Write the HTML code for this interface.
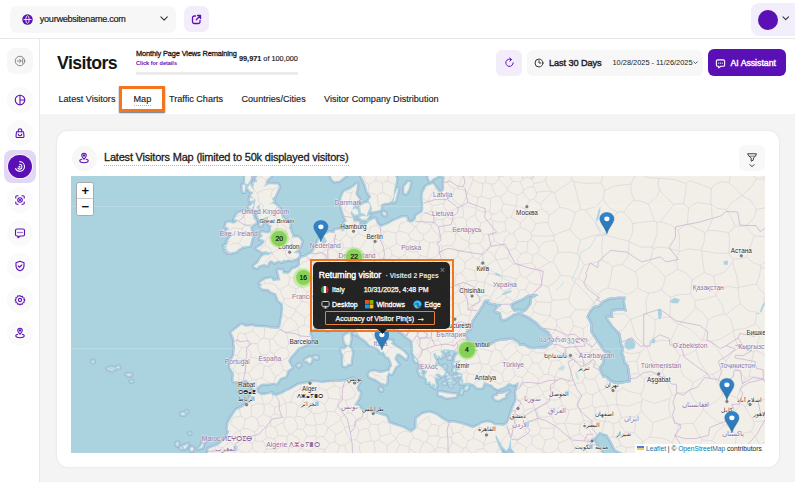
<!DOCTYPE html>
<html>
<head>
<meta charset="utf-8">
<title>Visitors - Map</title>
<style>
*{box-sizing:border-box;margin:0;padding:0}
html,body{width:795px;height:482px;overflow:hidden;background:#fff;font-family:"Liberation Sans",sans-serif;color:#1a1a1a}
.abs{position:absolute}
#topbar{position:absolute;left:0;top:0;width:795px;height:39px;background:#fff;border-bottom:1px solid #e8e8e8}
#sitesel{position:absolute;left:10.300px;top:6px;width:165.500px;height:26.700px;background:#f7f7f7;border-radius:7px}
#sitesel .txt{position:absolute;left:29.5px;top:7px;font-size:9.1px;line-height:12px;color:#222;letter-spacing:-0.27px;-webkit-text-stroke:.2px #222}
#extbtn{position:absolute;left:183.700px;top:6.100px;width:25.600px;height:26.400px;background:#f2ecfb;border-radius:7px}
#avatar{position:absolute;left:750.500px;top:3px;width:50px;height:32.500px;background:#f3eefb;border-radius:8px}
#avatar .dot{position:absolute;left:7px;top:6.5px;width:20px;height:20px;border-radius:50%;background:#5b10b5}
#sidebar{position:absolute;left:0;top:39px;width:40px;height:443px;background:#fff;border-right:1px solid #e8e8e8}
.sbtn{position:absolute;left:7px;width:26px;height:26px;border-radius:13px;background:#fafafa}
.sbtn svg{position:absolute;left:7px;top:7px;width:12px;height:12px}
#main{position:absolute;left:40px;top:39px;width:755px;height:443px;background:#fff}
#greybg{position:absolute;left:40px;top:113.5px;width:755px;height:369px;background:#f4f4f4}
h1{position:absolute;left:57px;top:50.5px;font-size:17.7px;line-height:24px;font-weight:bold;color:#161616;letter-spacing:-0.55px}
.tab{position:absolute;top:92.700px;font-size:9.1px;line-height:12px;color:#1c1c1c;white-space:nowrap;-webkit-text-stroke:.15px #1c1c1c}
#card{position:absolute;left:57px;top:130.500px;width:721.500px;height:336.300px;background:#fff;border-radius:11px;box-shadow:0 0 2.500px rgba(0,0,0,.10)}
#map{position:absolute;left:70.5px;top:175.5px;width:694.5px;height:277.5px;background:#aad3df;overflow:hidden}

.hdrbtn{position:absolute;top:49.500px;height:26px;border-radius:6px}
#refresh{left:496px;width:26px;background:#f2ecfb}
#datepill{left:527px;width:176px;background:#f7f7f7}
#datepill .l30{position:absolute;left:22px;top:7.200px;letter-spacing:-0.1px;font-size:9.2px;line-height:12px;color:#222;white-space:nowrap;-webkit-text-stroke:.4px #222}
#datepill .rng{position:absolute;left:85.500px;top:8px;font-size:7.4px;line-height:10px;color:#222;white-space:nowrap}
#aibtn{left:708px;top:49px;width:78px;height:27px;background:#5b10b5;border-radius:6px}
#aibtn .t{position:absolute;left:22.500px;top:7.500px;font-size:8.7px;line-height:12px;color:#fff;white-space:nowrap;-webkit-text-stroke:.4px #fff}
.pv1{position:absolute;left:136px;top:48.600px;font-size:7.4px;line-height:9px;color:#1c1c1c;white-space:nowrap;-webkit-text-stroke:.3px #1c1c1c;letter-spacing:-0.12px}
.pv2{position:absolute;left:136px;top:59px;font-size:5.5px;line-height:8px;color:#5b10b5;white-space:nowrap;font-weight:bold}
.pv3{position:absolute;left:239px;top:54px;-webkit-text-stroke:.15px #1c1c1c;font-size:7.3px;line-height:9px;color:#1c1c1c;white-space:nowrap}
.pvbar{position:absolute;left:136px;top:71.900px;width:162px;height:3.500px;background:#ebebeb;border-radius:1px}
#tabhl{position:absolute;left:119px;top:86px;width:46.400px;height:25.700px;border:3px solid #f3761f;background:#fff;box-shadow:0 1.200px 1.200px rgba(30,45,65,.7)}
.dots{position:absolute;height:0;border-top:1px dotted #b5b5b5}
#cicon{position:absolute;left:71.500px;top:145.500px;width:25px;height:25px;border-radius:50%;background:#f7f7f7}
#ctitle{position:absolute;left:104px;top:149.500px;font-size:11px;line-height:14px;color:#1c1c1c;white-space:nowrap;letter-spacing:-0.2px;-webkit-text-stroke:.3px #1c1c1c}
#filter{position:absolute;left:739px;top:145px;width:26px;height:26px;border-radius:6px;background:#f8f8f8}
#zoomctl{position:absolute;left:5.800px;top:6.300px;width:18.200px;height:34.700px;background:#fff;border:1px solid #a9a9a9;border-radius:2.500px}
#zoomctl div{position:absolute;left:0;width:16px;height:16.500px;text-align:center;font-size:13px;line-height:15.500px;font-weight:bold;color:#111}
#attr{position:absolute;right:0;bottom:0;height:9.500px;width:130.5px;background:rgba(255,255,255,.85);font-size:6.67px;line-height:9.500px;color:#222;white-space:nowrap;padding-left:11.5px}
#attr span{color:#0f78a8}
.cl{position:absolute;width:20px;height:20px;border-radius:50%;background:rgba(181,226,140,.66)}
.cl i{position:absolute;left:2.200px;top:2.200px;width:15.600px;height:15.600px;border-radius:50%;background:rgba(110,204,57,.72);font-style:normal;text-align:center;font-size:6.8px;line-height:15.600px;color:#111;-webkit-text-stroke:.2px #111}
.pin{position:absolute;width:15.800px;height:22.400px}
#hl2{position:absolute;left:239px;top:83.500px;width:144px;height:73px;border:2.300px solid #f3761f}
#popup{position:absolute;left:242.200px;top:86.700px;width:137.400px;height:66.400px;border-radius:5px;background:rgba(27,27,27,.96);color:#fff}
#popup div,#popup svg{position:absolute;white-space:nowrap}
</style>
</head>
<body>
<div id="topbar">
  <div id="sitesel">
    <svg class="abs" style="left:11.5px;top:8px" width="11" height="11" viewBox="0 0 22 22"><circle cx="11" cy="11" r="10.5" fill="#5b10b5"/><g fill="none" stroke="#fff" stroke-width="1.7"><ellipse cx="11" cy="11" rx="3.4" ry="7.6"/><path d="M3 11h16"/></g></svg>
    <div class="txt">yourwebsitename.com</div>
    <svg class="abs" style="left:150.200px;top:10.400px" width="8.200" height="5.500" viewBox="0 0 9 6"><path d="M1 1l3.5 3.5L8 1" fill="none" stroke="#333" stroke-width="1.2" stroke-linecap="round" stroke-linejoin="round"/></svg>
  </div>
  <div id="extbtn">
    <svg class="abs" style="left:7.300px;top:7.700px" width="11" height="11" viewBox="0 0 22 22"><g fill="none" stroke="#5b10b5" stroke-width="2.6" stroke-linecap="round" stroke-linejoin="round"><path d="M9 4H6.5A3.5 3.5 0 0 0 3 7.5v8A3.5 3.5 0 0 0 6.5 19h8a3.5 3.5 0 0 0 3.500-3.500V13"/><path d="M13 3h6v6M19 3l-8.500 8.500"/></g></svg>
  </div>
  <div id="avatar"><div class="dot"></div>
    <svg class="abs" style="left:31.500px;top:13.300px" width="7.500" height="5.500" viewBox="0 0 8 6"><path d="M1 1l3 3 3-3" fill="none" stroke="#333" stroke-width="1.2" stroke-linecap="round" stroke-linejoin="round"/></svg>
  </div>
</div>
<div id="main"></div>
<div id="greybg"></div>
<div id="sidebar"><div class="sbtn" style="top:9px;height:25.500px;border-radius:8px;background:#f7f7f7"><svg viewBox="0 0 24 24" fill="none" stroke="#777" stroke-width="1.7" stroke-linecap="round" stroke-linejoin="round"><circle cx="12" cy="12" r="9.500"/><path d="M6.500 12h7.500M11 8.500l3.500 3.500-3.500 3.500M17.300 7.500v9"/></svg></div><div class="sbtn" style="top:47.7px;background:#fafafa"><svg viewBox="0 0 24 24" fill="none" stroke="#5b10b5" stroke-width="2.2" stroke-linecap="round" stroke-linejoin="round"><circle cx="12" cy="12" r="9.5"/><path d="M12 2.500v19M12 12h9.500"/></svg></div><div class="sbtn" style="top:81.0px;background:#fafafa"><svg viewBox="0 0 24 24" fill="none" stroke="#5b10b5" stroke-width="2.2" stroke-linecap="round" stroke-linejoin="round"><path d="M5 9.500h14l1 9a2.500 2.500 0 0 1-2.500 2.500h-11A2.500 2.500 0 0 1 4 18.500z"/><path d="M8.500 9.500V7a3.500 3.500 0 0 1 7 0v2.500"/><path d="M8.500 14a3.500 3.500 0 0 0 7 0"/></svg></div><div class="sbtn" style="top:147.6px;background:#fafafa"><svg viewBox="0 0 24 24" fill="none" stroke="#5b10b5" stroke-width="2.2" stroke-linecap="round" stroke-linejoin="round"><path d="M3.500 8V6a2.500 2.500 0 0 1 2.500-2.500h2M16 3.500h2a2.500 2.500 0 0 1 2.500 2.500v2M20.500 16v2a2.500 2.500 0 0 1-2.500 2.500h-2M8 20.500H6A2.500 2.500 0 0 1 3.500 18v-2"/><circle cx="12" cy="12" r="4.500"/><circle cx="12" cy="12" r="1" fill="#5b10b5"/></svg></div><div class="sbtn" style="top:180.9px;background:#fafafa"><svg viewBox="0 0 24 24" fill="none" stroke="#5b10b5" stroke-width="2.2" stroke-linecap="round" stroke-linejoin="round"><path d="M6 4h12a3 3 0 0 1 3 3v8a3 3 0 0 1-3 3h-5.500L8 21.500V18H6a3 3 0 0 1-3-3V7a3 3 0 0 1 3-3z"/><path d="M8 11h.01M12 11h.01M16 11h.01" stroke-width="2.6"/></svg></div><div class="sbtn" style="top:214.2px;background:#fafafa"><svg viewBox="0 0 24 24" fill="none" stroke="#5b10b5" stroke-width="2.2" stroke-linecap="round" stroke-linejoin="round"><path d="M12 2.500l8 3v6c0 5-3.500 8.500-8 10-4.500-1.500-8-5-8-10v-6z"/><path d="M8.500 12l2.500 2.500 4.500-4.500"/></svg></div><div class="sbtn" style="top:247.5px;background:#fafafa"><svg viewBox="0 0 24 24" fill="none" stroke="#5b10b5" stroke-width="2.2" stroke-linecap="round" stroke-linejoin="round"><circle cx="12" cy="12" r="3.200"/><path d="M12 2.500l2.200 2.300 3.100-.6.900 3 3 .9-.6 3.100L22.900 12.500 20.600 14.700l.6 3.100-3 .9-.9 3-3.100-.6L12 23.400 9.800 21.100l-3.100.6-.9-3-3-.9.6-3.100L1.100 12.500 3.400 10.300l-.6-3.100 3-.9.9-3 3.100.6z" transform="translate(1.100 .7) scale(.91)"/></svg></div><div class="sbtn" style="top:280.8px;background:#fafafa"><svg viewBox="0 0 24 24" fill="none" stroke="#5b10b5" stroke-width="2.2" stroke-linecap="round" stroke-linejoin="round"><path d="M12 14.500c-2.500-3-4.500-5-4.500-7.500a4.500 4.500 0 0 1 9 0c0 2.500-2 4.500-4.500 7.500z"/><circle cx="12" cy="7" r="1.200"/><path d="M7.500 14.500C5 15.200 3.500 16.400 3.500 17.700c0 2.100 3.800 3.800 8.500 3.800s8.500-1.700 8.500-3.800c0-1.300-1.500-2.500-4-3.200"/></svg></div><div style="position:absolute;left:4px;top:111.0px;width:32px;height:32.500px;border-radius:8px;background:#e3d7f6"></div><div style="position:absolute;left:8.300px;top:115.600px;width:23.400px;height:23.400px;border-radius:50%;background:#5b10b5;box-shadow:0 0 0 .8px #fff"><svg style="position:absolute;left:5.200px;top:5.200px" width="13" height="13" viewBox="0 0 24 24" fill="none" stroke="#fff" stroke-width="2" stroke-linecap="round"><path d="M12.500 3a9 9 0 0 1 1 17.900 9 9 0 0 1-9-5"/><path d="M12.500 8a4.500 4.500 0 0 1 .5 8.900 4.500 4.500 0 0 1-4-1.800"/><circle cx="12" cy="12.500" r=".9" fill="#fff"/></svg></div></div>
<h1>Visitors</h1>
<div class="pv1">Monthly Page Views Remaining</div>
<div class="pv2">Click for details</div>
<div class="pv3"><b>99,971</b> of 100,000</div>
<div class="pvbar"></div>
<div id="refresh" class="hdrbtn"><svg class="abs" style="left:7.500px;top:7.500px" width="11" height="11" viewBox="0 0 24 24" fill="none" stroke="#5b10b5" stroke-width="2.100" stroke-linecap="round" stroke-linejoin="round"><path d="M20 12.500a8 8 0 1 1-4.200-7"/><path d="M12.500 2l3.800 3.300-3.300 3.700"/></svg></div>
<div id="datepill" class="hdrbtn">
 <svg class="abs" style="left:6.500px;top:8px" width="10" height="10" viewBox="0 0 24 24" fill="none" stroke="#333" stroke-width="2.4" stroke-linecap="round"><circle cx="12" cy="12" r="9.500"/><path d="M12 6.500V12h4.500"/></svg>
 <div class="l30">Last 30 Days</div><div class="rng">10/28/2025 - 11/26/2025</div>
 <svg class="abs" style="left:166px;top:11px" width="5" height="4" viewBox="0 0 8 6"><path d="M1 1l3 3 3-3" fill="none" stroke="#444" stroke-width="1.400" stroke-linecap="round"/></svg>
</div>
<div id="aibtn" class="hdrbtn">
 <svg class="abs" style="left:7px;top:8.500px" width="11" height="11" viewBox="0 0 24 24" fill="none" stroke="#fff" stroke-width="2.400" stroke-linecap="round" stroke-linejoin="round"><path d="M6 4h12a3 3 0 0 1 3 3v8a3 3 0 0 1-3 3h-5.500L8 21.500V18H6a3 3 0 0 1-3-3V7a3 3 0 0 1 3-3z"/><path d="M8 11h.01M12 11h.01M16 11h.01" stroke-width="2.800"/></svg>
 <div class="t">AI Assistant</div>
</div>
<div id="tabhl"></div>
<div class="tab" style="left:58.500px">Latest Visitors</div>
<div class="tab" style="left:133.500px">Map</div>
<div class="tab" style="left:169px">Traffic Charts</div>
<div class="tab" style="left:241.500px">Countries/Cities</div>
<div class="tab" style="left:324px">Visitor Company Distribution</div>
<div class="dots" style="left:134px;top:104.800px;width:17px"></div>

<div id="card"></div>
<div id="cicon"><svg class="abs" style="left:6.500px;top:6px" width="12" height="12" viewBox="0 0 24 24" fill="none" stroke="#5b10b5" stroke-width="2.200" stroke-linecap="round" stroke-linejoin="round"><path d="M12 14.500c-2.500-3-4.500-5-4.500-7.500a4.500 4.500 0 0 1 9 0c0 2.500-2 4.500-4.500 7.500z"/><circle cx="12" cy="7" r="1.200"/><path d="M7.500 14.500C5 15.200 3.500 16.400 3.500 17.700c0 2.100 3.800 3.800 8.500 3.800s8.500-1.700 8.500-3.800c0-1.300-1.500-2.500-4-3.200"/></svg></div>
<div id="ctitle">Latest Visitors Map (limited to 50k displayed visitors)</div>
<div class="dots" style="left:104px;top:164.500px;width:245px"></div>
<div id="filter"><svg class="abs" style="left:8px;top:7px" width="10.500" height="10.500" viewBox="0 0 24 24" fill="none" stroke="#1c1c1c" stroke-width="2.100" stroke-linecap="round" stroke-linejoin="round"><path d="M2.500 4h19l-1.800 5.200-5.200 4.300v5l-5 2.500v-7.500L4.300 9.200z" stroke-width="1.900"/><path d="M6 9.500h12" stroke-width="1.300"/></svg>
<svg class="abs" style="left:10px;top:18.500px" width="6" height="4" viewBox="0 0 8 6"><path d="M1 1l3 3 3-3" fill="none" stroke="#333" stroke-width="1.500" stroke-linecap="round"/></svg></div>

<div id="map"><!--MAP--><svg class="abs" style="left:0;top:0" width="694.500" height="277.500" viewBox="0 0 694.500 277.500"><path d="M273.7 40.4L271.5 33.8L270.3 28.2L270.6 21.4L273.4 15.6L279.7 13.2L286.1 8.1L285.4 13.2L284.2 17.9L288.0 23.6L283.5 27.1L281.6 32.7L279.7 37.1L281.6 41.5L282.3 45.4L288.0 45.9L288.0 50.2L291.7 50.2L295.5 48.6L298.1 45.4L303.7 42.8L306.3 48.6L309.4 51.3L317.6 48.1L323.3 44.8L332.2 41.2L335.3 41.5L336.6 45.9L341.6 46.4L344.8 43.2L345.4 39.9L351.8 36.0L352.4 31.6L351.8 22.5L352.1 16.7L355.5 10.3L361.9 8.0L365.7 13.2L368.2 16.7L371.3 16.2L373.2 13.2L372.9 6.2L373.9 0.8L367.5 -1.6L367.5 -7.1L724.5 -7.1L724.5 283.4L553.3 283.4L552.0 277.0L544.4 273.4L540.6 265.5L536.2 258.3L532.4 257.2L528.6 255.4L526.1 258.3L523.6 261.2L521.1 262.6L522.9 265.5L525.5 269.9L528.0 273.4L530.5 277.0L532.4 283.4L445.2 283.4L443.4 276.3L440.2 272.0L439.9 261.9L437.7 271.3L435.5 274.5L431.4 270.6L425.0 259.0L424.4 261.2L427.6 269.9L430.7 276.3L432.0 283.4L135.7 283.4L137.0 277.0L137.6 273.1L147.7 269.1L154.9 262.8L158.5 255.2L156.7 253.7L157.4 247.2L160.7 241.3L165.4 234.2L171.1 231.5L175.9 228.3L177.4 226.2L180.3 219.3L181.8 214.8L185.6 213.8L185.6 216.6L190.0 219.3L194.3 218.9L200.5 217.4L200.8 219.3L205.2 220.0L211.5 217.7L215.1 215.4L219.7 213.6L227.3 209.1L238.4 207.0L243.7 206.0L251.3 207.2L255.5 206.6L262.7 206.0L268.2 206.0L274.4 205.5L281.4 202.8L284.2 204.0L284.2 206.8L288.0 204.6L288.9 204.8L286.1 209.9L285.4 212.3L286.3 214.4L289.0 216.9L287.1 222.8L282.9 229.2L288.0 230.4L289.2 233.0L292.1 234.8L302.4 236.8L309.4 239.1L315.1 240.8L317.6 247.3L324.0 249.5L331.5 251.7L340.4 256.5L345.4 252.4L345.9 242.7L351.4 238.3L358.1 236.8L362.1 237.8L365.0 239.1L370.6 242.9L378.0 246.9L382.7 246.5L391.2 248.4L402.0 252.2L408.0 249.5L411.1 247.6L415.6 246.5L420.1 247.1L423.1 249.0L432.6 250.0L436.7 247.3L438.7 242.9L440.2 237.4L441.5 234.0L443.4 229.2L445.4 225.1L445.8 221.6L445.1 216.8L446.3 212.4L447.6 208.4L447.8 206.0L442.6 208.6L437.9 206.8L433.4 210.6L426.5 212.9L423.1 210.9L421.2 208.8L413.0 206.1L411.1 211.5L406.3 211.5L402.9 208.2L397.7 206.4L392.2 207.6L392.4 205.0L391.3 202.3L391.3 198.4L385.2 194.7L389.7 193.6L388.1 191.8L389.0 188.6L387.8 186.7L389.8 184.3L383.8 185.2L384.6 181.0L387.8 177.7L384.6 180.6L388.4 176.0L383.7 175.0L382.5 174.0L373.2 173.3L369.1 175.2L372.6 179.7L370.1 178.1L370.4 181.4L367.2 178.9L366.9 181.4L364.0 176.4L361.9 178.7L365.7 186.7L364.1 186.3L363.8 190.0L368.2 191.6L374.2 197.2L370.9 200.0L368.4 197.7L364.4 197.8L365.4 200.4L367.5 202.0L363.1 200.7L364.7 207.7L365.7 209.7L361.6 207.1L361.1 210.0L358.8 205.0L356.2 206.6L356.0 203.2L353.7 200.0L356.4 195.2L354.5 194.3L352.3 193.0L350.2 189.6L347.1 185.1L345.4 182.0L342.2 177.3L342.0 170.0L341.5 165.5L339.8 163.4L336.0 160.8L333.4 158.7L329.2 155.2L323.0 151.2L319.5 149.3L315.3 145.9L313.2 138.1L310.3 135.1L306.6 139.3L304.7 135.4L306.1 132.3L304.6 131.1L297.0 134.2L298.1 138.5L296.7 143.3L298.5 146.4L304.5 150.3L308.9 160.2L313.9 164.2L321.3 165.1L319.7 167.4L325.7 171.6L332.4 175.8L335.9 179.7L335.1 182.6L332.7 180.6L327.9 177.1L325.2 178.1L323.3 183.0L327.3 188.5L324.2 190.6L320.6 197.8L318.0 196.4L318.4 195.1L319.5 193.8L319.1 192.2L321.4 190.0L320.4 186.2L317.8 180.4L315.6 180.7L312.4 175.3L309.6 176.2L309.1 174.0L304.9 170.9L298.9 168.9L296.4 166.2L293.6 163.5L289.2 160.8L285.6 156.3L284.2 150.9L281.1 146.1L275.5 143.3L272.7 144.2L269.8 147.9L265.0 149.6L263.3 150.9L261.0 153.3L256.6 154.6L253.0 153.1L249.7 152.6L246.9 151.8L243.7 151.1L242.5 152.2L238.7 154.8L238.3 158.2L240.1 161.5L238.9 165.5L232.8 169.5L227.0 171.7L224.6 175.0L218.9 181.1L217.0 185.3L220.6 191.4L216.1 194.4L214.7 200.2L212.9 200.4L209.1 202.0L205.3 207.4L203.6 206.5L196.9 207.4L191.2 207.4L188.3 209.1L185.3 212.0L183.7 213.0L179.4 208.9L179.0 206.9L175.2 203.6L169.0 205.2L162.6 205.0L163.1 197.6L161.0 193.9L159.1 190.9L159.8 186.2L163.1 179.7L164.1 171.4L163.3 166.8L163.2 162.5L160.5 156.5L166.0 152.5L170.6 148.8L174.6 150.9L182.1 149.9L183.3 150.9L195.1 151.6L200.1 152.5L206.6 152.9L209.2 151.5L211.2 141.2L212.2 133.2L211.8 127.6L207.8 124.5L205.2 117.4L199.5 115.3L197.8 113.1L191.5 112.4L189.2 110.2L191.9 108.7L188.9 107.2L194.0 103.6L200.1 102.5L202.0 105.3L206.5 104.4L209.6 104.5L209.0 102.6L206.9 94.0L208.9 94.7L211.1 94.2L211.5 97.4L217.2 98.1L219.7 96.2L221.4 93.6L225.9 92.0L228.9 89.3L229.2 84.1L230.8 81.8L234.1 80.9L237.4 79.0L239.3 78.0L241.5 76.8L245.0 71.2L249.1 61.4L253.2 58.9L258.3 56.6L263.3 57.1L264.3 54.2L270.3 53.4L270.6 55.6L273.1 55.0L274.1 51.6L276.0 51.5L275.0 48.8L273.4 47.0L276.0 45.0ZM186.9 -7.1L200.1 -7.1L199.5 0.2L196.0 3.5L193.8 6.8L195.2 6.6L192.6 10.9L194.7 9.7L198.3 8.3L206.5 8.5L207.9 10.9L206.0 15.0L203.6 20.2L200.8 23.1L202.7 25.0L198.9 28.2L195.7 27.6L198.9 28.5L202.0 27.5L203.3 28.2L206.5 30.8L209.0 33.8L210.1 39.3L211.5 42.6L215.3 44.8L218.6 48.9L217.8 52.4L219.9 54.7L218.8 54.8L221.3 59.3L220.4 62.4L222.3 61.4L227.3 61.6L230.1 65.0L230.2 66.4L228.9 70.2L227.6 71.7L226.4 73.5L223.5 76.0L221.9 76.5L224.8 77.3L227.9 77.4L227.5 80.2L225.2 82.3L222.8 82.9L220.6 84.0L218.2 83.2L214.1 84.2L212.2 83.4L210.9 85.6L207.2 84.2L203.6 86.3L200.6 84.2L197.6 85.3L196.1 89.1L192.9 87.7L187.2 89.8L186.3 91.7L183.0 90.6L184.5 89.1L187.0 87.2L190.5 81.2L193.1 79.3L197.2 79.3L200.3 77.8L202.0 75.8L199.1 76.6L194.2 75.1L191.9 75.8L189.4 74.6L185.6 72.4L187.6 71.2L189.7 70.2L193.3 67.0L193.5 63.8L189.0 62.9L192.1 59.4L189.9 57.6L191.3 56.4L194.8 57.3L197.1 57.5L199.5 56.6L200.1 56.1L200.1 54.0L199.8 52.1L201.1 49.4L198.7 49.1L196.2 44.8L197.6 40.7L199.8 39.9L196.4 40.8L193.5 41.8L191.3 42.8L188.4 43.4L186.5 39.3L188.4 36.7L189.9 34.2L188.7 32.2L189.0 28.8L190.7 29.1L188.0 28.8L185.6 30.4L185.0 32.7L182.7 36.0L183.1 32.7L184.0 27.1L184.5 23.5L179.8 19.9L182.3 16.7L183.1 13.5L182.1 11.5L183.1 8.2L182.5 6.6L186.3 6.2L185.1 2.1L186.9 0.2ZM172.5 35.1L175.2 37.1L174.2 38.8L177.1 37.1L180.3 36.9L182.5 41.0L181.8 43.2L183.4 43.0L184.8 45.4L184.4 47.0L182.0 48.1L180.6 49.9L179.0 50.2L179.6 53.2L180.6 57.1L181.2 61.2L180.3 63.0L178.9 69.5L175.3 70.0L171.1 70.5L169.5 71.9L166.9 73.3L165.2 75.3L162.9 75.8L157.1 76.8L158.5 74.8L154.7 75.3L157.2 73.3L153.7 72.2L156.6 70.2L153.0 70.2L156.9 68.4L156.2 66.9L159.1 65.2L156.4 65.4L159.5 61.2L162.2 58.7L161.9 58.0L154.5 56.6L156.6 54.3L158.5 52.4L154.7 50.5L155.9 47.0L160.0 46.7L161.0 47.8L164.8 47.0L167.3 43.7L163.5 43.2L166.7 37.7L168.7 36.9L170.9 36.2ZM289.2 -7.1L290.5 0.2L291.3 1.8L294.6 8.5L296.5 15.6L300.3 20.6L297.7 24.8L299.3 27.6L301.2 32.7L300.1 35.1L302.2 35.2L306.4 34.6L309.8 33.2L309.4 29.0L312.6 27.1L317.6 26.5L320.8 24.8L322.5 20.7L323.0 13.6L324.3 8.0L325.2 2.6L323.3 -2.2L326.5 -3.4L327.8 -7.1ZM258.3 -7.1L260.8 2.6L263.6 5.2L268.4 4.4L271.5 2.0L275.3 -1.0L277.8 -7.1ZM322.7 25.9L324.0 24.8L327.1 12.7L326.2 13.2L323.6 19.1ZM333.4 16.7L335.3 17.3L337.9 12.1L339.1 6.2L337.2 6.2L333.4 10.9ZM357.4 1.4L359.3 5.0L361.9 2.6L366.3 0.2L365.7 -2.8L358.1 -2.2ZM281.0 33.8L284.2 32.5L287.0 34.4L287.3 38.2L283.5 38.8L281.3 36.6ZM288.3 31.6L291.7 28.8L294.9 27.1L298.7 27.6L298.7 32.1L296.8 36.0L295.5 39.9L293.0 37.7L289.9 37.1L289.2 32.1ZM288.3 41.0L291.7 39.9L296.2 40.4L298.4 39.3L295.5 43.2L291.1 43.5ZM312.0 37.7L312.6 36.0L314.8 37.7L314.5 39.3ZM233.9 184.3L238.7 181.4L240.9 183.0L239.3 186.3L238.4 187.0L236.2 184.7ZM243.1 180.6L246.3 181.0L246.3 182.5L243.4 181.6ZM226.7 189.6L228.3 188.3L229.3 188.9L227.9 190.4ZM278.5 155.7L279.4 162.5L278.5 167.6L277.2 169.6L274.7 167.6L273.4 164.2L273.2 160.8L274.4 159.4L276.6 158.0L277.8 158.2ZM270.9 173.1L273.1 173.9L277.2 170.6L279.7 173.1L281.1 176.8L280.1 181.4L279.4 187.9L276.6 187.5L275.0 190.1L272.2 189.2L272.2 184.3L272.5 178.5L270.6 176.0ZM297.7 198.8L299.6 196.0L303.4 195.6L309.4 197.2L314.5 196.0L318.0 195.1L315.4 200.8L315.8 204.8L314.5 208.0L310.4 206.8L304.7 203.0L299.0 200.8ZM367.9 216.2L371.3 216.6L375.4 217.6L381.8 218.3L385.2 218.5L384.9 220.4L380.2 221.0L375.4 221.4L370.7 219.3L367.9 218.9ZM423.1 220.4L427.2 219.7L427.2 217.9L431.7 218.0L437.5 215.5L433.9 218.5L434.2 221.0L431.7 221.8L427.6 224.0L424.1 223.0ZM394.4 211.9L397.2 209.5L396.6 212.3L394.7 213.8ZM382.4 187.5L384.6 186.1L387.1 188.3L385.9 189.2L382.7 188.3ZM382.7 192.8L384.3 192.8L384.0 195.6L382.7 195.2ZM343.2 182.8L345.1 182.6L346.1 185.9L344.8 185.5ZM347.7 194.4L349.2 193.6L350.5 196.4L348.6 196.8L350.8 198.4L351.1 199.6L349.5 198.8ZM363.4 189.2L366.9 189.2L371.3 192.0L374.5 196.0L372.0 196.4L368.2 193.2ZM377.3 181.8L379.9 181.0L379.6 182.6L377.7 182.6ZM379.2 203.6L380.8 204.0L380.2 205.6L379.2 205.2ZM55.8 198.4L58.0 198.0L60.2 198.6L58.6 199.6L56.4 199.2ZM46.0 191.2L47.9 190.8L48.2 192.0L46.6 192.0ZM38.7 193.2L41.6 193.6L41.9 194.2L39.1 194.0ZM40.3 191.2L43.8 192.8L43.5 193.0L40.3 191.8ZM36.9 192.4L38.4 192.0L38.4 193.0L37.2 193.2ZM21.4 185.1L22.6 184.9L22.6 186.3L21.7 186.3ZM59.9 205.2L61.2 205.0L61.2 205.7L60.2 205.8ZM110.0 237.4L112.3 237.0L113.9 237.9L112.3 238.8L110.4 238.2ZM115.5 235.3L116.3 235.3L116.1 235.9ZM131.6 266.3L134.1 263.7L134.5 264.8L132.2 266.8ZM127.5 272.4L129.4 271.3L131.6 267.3L131.8 269.9L130.7 271.7ZM119.3 272.7L120.6 271.4L122.1 272.0L121.8 274.2L120.2 274.7ZM112.3 270.2L117.1 268.4L115.8 270.2L113.9 272.7ZM105.4 267.3L107.0 266.6L107.0 269.1L106.2 269.5ZM109.5 271.7L110.8 271.3L111.1 272.4L109.8 272.6ZM174.2 -7.1L179.9 -7.1L179.9 2.0L178.7 5.0L176.8 8.0L174.2 7.4L174.2 2.6ZM171.7 9.1L174.2 9.1L173.6 15.6L172.0 15.6ZM176.5 11.5L179.3 8.5L180.6 11.5L183.1 14.4L181.2 16.2L178.7 14.4ZM179.0 21.9L183.1 22.5L182.5 24.6L179.0 24.8ZM178.0 31.0L180.6 29.0L181.5 27.1L182.8 28.8L180.9 32.1L179.3 32.7ZM185.0 32.1L186.6 31.6L186.9 34.4L185.6 34.6ZM188.8 49.1L190.4 45.9L191.9 46.4L190.0 49.7ZM386.9 199.5L388.7 198.8L390.0 199.5L388.4 200.2ZM389.2 206.9L390.9 206.0L391.9 206.4L389.7 207.7ZM383.2 200.8L384.6 200.0L385.6 199.8L384.3 201.0ZM375.1 197.5L376.7 198.0L377.0 199.5L375.8 198.8ZM377.0 200.0L378.6 200.4L379.9 201.6L378.9 201.9L377.7 201.0ZM377.7 204.2L378.7 204.0L378.7 205.4L377.7 205.4ZM372.7 207.2L374.2 206.9L374.2 208.0L372.9 208.0ZM379.2 209.4L380.2 209.4L380.1 210.5L379.4 210.3ZM390.0 217.7L390.9 213.8L391.4 214.2L390.6 217.7ZM373.6 189.4L374.8 190.4L375.0 191.2L373.9 190.6ZM374.0 175.0L374.8 174.3L375.6 175.3L374.6 176.2ZM379.9 176.8L381.3 176.8L381.3 177.7L380.0 177.7ZM363.8 210.1L364.9 210.5L364.7 212.0L363.9 211.6ZM376.3 201.2L376.8 201.2L376.8 202.3L376.3 202.2ZM378.6 206.9L379.4 207.1L379.2 207.9L378.6 207.7ZM381.8 206.0L383.3 206.0L383.2 206.6L382.0 206.8ZM389.0 204.8L390.0 204.8L389.8 205.7L389.2 205.7ZM349.5 198.0L350.2 197.9L351.6 199.5L350.8 200.0ZM349.1 190.5L350.0 190.5L349.9 192.6L349.0 192.4ZM308.8 212.4L311.0 213.2L311.0 214.5L309.7 214.2ZM283.0 157.4L284.9 157.0L284.9 158.1L283.2 158.0ZM118.3 257.0L119.1 257.0L119.1 257.7L118.3 257.7Z" fill="none" stroke="#a3a3cf" stroke-width="4.600" stroke-linejoin="round" opacity=".88"/><path d="M273.7 40.4L271.5 33.8L270.3 28.2L270.6 21.4L273.4 15.6L279.7 13.2L286.1 8.1L285.4 13.2L284.2 17.9L288.0 23.6L283.5 27.1L281.6 32.7L279.7 37.1L281.6 41.5L282.3 45.4L288.0 45.9L288.0 50.2L291.7 50.2L295.5 48.6L298.1 45.4L303.7 42.8L306.3 48.6L309.4 51.3L317.6 48.1L323.3 44.8L332.2 41.2L335.3 41.5L336.6 45.9L341.6 46.4L344.8 43.2L345.4 39.9L351.8 36.0L352.4 31.6L351.8 22.5L352.1 16.7L355.5 10.3L361.9 8.0L365.7 13.2L368.2 16.7L371.3 16.2L373.2 13.2L372.9 6.2L373.9 0.8L367.5 -1.6L367.5 -7.1L724.5 -7.1L724.5 283.4L553.3 283.4L552.0 277.0L544.4 273.4L540.6 265.5L536.2 258.3L532.4 257.2L528.6 255.4L526.1 258.3L523.6 261.2L521.1 262.6L522.9 265.5L525.5 269.9L528.0 273.4L530.5 277.0L532.4 283.4L445.2 283.4L443.4 276.3L440.2 272.0L439.9 261.9L437.7 271.3L435.5 274.5L431.4 270.6L425.0 259.0L424.4 261.2L427.6 269.9L430.7 276.3L432.0 283.4L135.7 283.4L137.0 277.0L137.6 273.1L147.7 269.1L154.9 262.8L158.5 255.2L156.7 253.7L157.4 247.2L160.7 241.3L165.4 234.2L171.1 231.5L175.9 228.3L177.4 226.2L180.3 219.3L181.8 214.8L185.6 213.8L185.6 216.6L190.0 219.3L194.3 218.9L200.5 217.4L200.8 219.3L205.2 220.0L211.5 217.7L215.1 215.4L219.7 213.6L227.3 209.1L238.4 207.0L243.7 206.0L251.3 207.2L255.5 206.6L262.7 206.0L268.2 206.0L274.4 205.5L281.4 202.8L284.2 204.0L284.2 206.8L288.0 204.6L288.9 204.8L286.1 209.9L285.4 212.3L286.3 214.4L289.0 216.9L287.1 222.8L282.9 229.2L288.0 230.4L289.2 233.0L292.1 234.8L302.4 236.8L309.4 239.1L315.1 240.8L317.6 247.3L324.0 249.5L331.5 251.7L340.4 256.5L345.4 252.4L345.9 242.7L351.4 238.3L358.1 236.8L362.1 237.8L365.0 239.1L370.6 242.9L378.0 246.9L382.7 246.5L391.2 248.4L402.0 252.2L408.0 249.5L411.1 247.6L415.6 246.5L420.1 247.1L423.1 249.0L432.6 250.0L436.7 247.3L438.7 242.9L440.2 237.4L441.5 234.0L443.4 229.2L445.4 225.1L445.8 221.6L445.1 216.8L446.3 212.4L447.6 208.4L447.8 206.0L442.6 208.6L437.9 206.8L433.4 210.6L426.5 212.9L423.1 210.9L421.2 208.8L413.0 206.1L411.1 211.5L406.3 211.5L402.9 208.2L397.7 206.4L392.2 207.6L392.4 205.0L391.3 202.3L391.3 198.4L385.2 194.7L389.7 193.6L388.1 191.8L389.0 188.6L387.8 186.7L389.8 184.3L383.8 185.2L384.6 181.0L387.8 177.7L384.6 180.6L388.4 176.0L383.7 175.0L382.5 174.0L373.2 173.3L369.1 175.2L372.6 179.7L370.1 178.1L370.4 181.4L367.2 178.9L366.9 181.4L364.0 176.4L361.9 178.7L365.7 186.7L364.1 186.3L363.8 190.0L368.2 191.6L374.2 197.2L370.9 200.0L368.4 197.7L364.4 197.8L365.4 200.4L367.5 202.0L363.1 200.7L364.7 207.7L365.7 209.7L361.6 207.1L361.1 210.0L358.8 205.0L356.2 206.6L356.0 203.2L353.7 200.0L356.4 195.2L354.5 194.3L352.3 193.0L350.2 189.6L347.1 185.1L345.4 182.0L342.2 177.3L342.0 170.0L341.5 165.5L339.8 163.4L336.0 160.8L333.4 158.7L329.2 155.2L323.0 151.2L319.5 149.3L315.3 145.9L313.2 138.1L310.3 135.1L306.6 139.3L304.7 135.4L306.1 132.3L304.6 131.1L297.0 134.2L298.1 138.5L296.7 143.3L298.5 146.4L304.5 150.3L308.9 160.2L313.9 164.2L321.3 165.1L319.7 167.4L325.7 171.6L332.4 175.8L335.9 179.7L335.1 182.6L332.7 180.6L327.9 177.1L325.2 178.1L323.3 183.0L327.3 188.5L324.2 190.6L320.6 197.8L318.0 196.4L318.4 195.1L319.5 193.8L319.1 192.2L321.4 190.0L320.4 186.2L317.8 180.4L315.6 180.7L312.4 175.3L309.6 176.2L309.1 174.0L304.9 170.9L298.9 168.9L296.4 166.2L293.6 163.5L289.2 160.8L285.6 156.3L284.2 150.9L281.1 146.1L275.5 143.3L272.7 144.2L269.8 147.9L265.0 149.6L263.3 150.9L261.0 153.3L256.6 154.6L253.0 153.1L249.7 152.6L246.9 151.8L243.7 151.1L242.5 152.2L238.7 154.8L238.3 158.2L240.1 161.5L238.9 165.5L232.8 169.5L227.0 171.7L224.6 175.0L218.9 181.1L217.0 185.3L220.6 191.4L216.1 194.4L214.7 200.2L212.9 200.4L209.1 202.0L205.3 207.4L203.6 206.5L196.9 207.4L191.2 207.4L188.3 209.1L185.3 212.0L183.7 213.0L179.4 208.9L179.0 206.9L175.2 203.6L169.0 205.2L162.6 205.0L163.1 197.6L161.0 193.9L159.1 190.9L159.8 186.2L163.1 179.7L164.1 171.4L163.3 166.8L163.2 162.5L160.5 156.5L166.0 152.5L170.6 148.8L174.6 150.9L182.1 149.9L183.3 150.9L195.1 151.6L200.1 152.5L206.6 152.9L209.2 151.5L211.2 141.2L212.2 133.2L211.8 127.6L207.8 124.5L205.2 117.4L199.5 115.3L197.8 113.1L191.5 112.4L189.2 110.2L191.9 108.7L188.9 107.2L194.0 103.6L200.1 102.5L202.0 105.3L206.5 104.4L209.6 104.5L209.0 102.6L206.9 94.0L208.9 94.7L211.1 94.2L211.5 97.4L217.2 98.1L219.7 96.2L221.4 93.6L225.9 92.0L228.9 89.3L229.2 84.1L230.8 81.8L234.1 80.9L237.4 79.0L239.3 78.0L241.5 76.8L245.0 71.2L249.1 61.4L253.2 58.9L258.3 56.6L263.3 57.1L264.3 54.2L270.3 53.4L270.6 55.6L273.1 55.0L274.1 51.6L276.0 51.5L275.0 48.8L273.4 47.0L276.0 45.0ZM186.9 -7.1L200.1 -7.1L199.5 0.2L196.0 3.5L193.8 6.8L195.2 6.6L192.6 10.9L194.7 9.7L198.3 8.3L206.5 8.5L207.9 10.9L206.0 15.0L203.6 20.2L200.8 23.1L202.7 25.0L198.9 28.2L195.7 27.6L198.9 28.5L202.0 27.5L203.3 28.2L206.5 30.8L209.0 33.8L210.1 39.3L211.5 42.6L215.3 44.8L218.6 48.9L217.8 52.4L219.9 54.7L218.8 54.8L221.3 59.3L220.4 62.4L222.3 61.4L227.3 61.6L230.1 65.0L230.2 66.4L228.9 70.2L227.6 71.7L226.4 73.5L223.5 76.0L221.9 76.5L224.8 77.3L227.9 77.4L227.5 80.2L225.2 82.3L222.8 82.9L220.6 84.0L218.2 83.2L214.1 84.2L212.2 83.4L210.9 85.6L207.2 84.2L203.6 86.3L200.6 84.2L197.6 85.3L196.1 89.1L192.9 87.7L187.2 89.8L186.3 91.7L183.0 90.6L184.5 89.1L187.0 87.2L190.5 81.2L193.1 79.3L197.2 79.3L200.3 77.8L202.0 75.8L199.1 76.6L194.2 75.1L191.9 75.8L189.4 74.6L185.6 72.4L187.6 71.2L189.7 70.2L193.3 67.0L193.5 63.8L189.0 62.9L192.1 59.4L189.9 57.6L191.3 56.4L194.8 57.3L197.1 57.5L199.5 56.6L200.1 56.1L200.1 54.0L199.8 52.1L201.1 49.4L198.7 49.1L196.2 44.8L197.6 40.7L199.8 39.9L196.4 40.8L193.5 41.8L191.3 42.8L188.4 43.4L186.5 39.3L188.4 36.7L189.9 34.2L188.7 32.2L189.0 28.8L190.7 29.1L188.0 28.8L185.6 30.4L185.0 32.7L182.7 36.0L183.1 32.7L184.0 27.1L184.5 23.5L179.8 19.9L182.3 16.7L183.1 13.5L182.1 11.5L183.1 8.2L182.5 6.6L186.3 6.2L185.1 2.1L186.9 0.2ZM172.5 35.1L175.2 37.1L174.2 38.8L177.1 37.1L180.3 36.9L182.5 41.0L181.8 43.2L183.4 43.0L184.8 45.4L184.4 47.0L182.0 48.1L180.6 49.9L179.0 50.2L179.6 53.2L180.6 57.1L181.2 61.2L180.3 63.0L178.9 69.5L175.3 70.0L171.1 70.5L169.5 71.9L166.9 73.3L165.2 75.3L162.9 75.8L157.1 76.8L158.5 74.8L154.7 75.3L157.2 73.3L153.7 72.2L156.6 70.2L153.0 70.2L156.9 68.4L156.2 66.9L159.1 65.2L156.4 65.4L159.5 61.2L162.2 58.7L161.9 58.0L154.5 56.6L156.6 54.3L158.5 52.4L154.7 50.5L155.9 47.0L160.0 46.7L161.0 47.8L164.8 47.0L167.3 43.7L163.5 43.2L166.7 37.7L168.7 36.9L170.9 36.2ZM289.2 -7.1L290.5 0.2L291.3 1.8L294.6 8.5L296.5 15.6L300.3 20.6L297.7 24.8L299.3 27.6L301.2 32.7L300.1 35.1L302.2 35.2L306.4 34.6L309.8 33.2L309.4 29.0L312.6 27.1L317.6 26.5L320.8 24.8L322.5 20.7L323.0 13.6L324.3 8.0L325.2 2.6L323.3 -2.2L326.5 -3.4L327.8 -7.1ZM258.3 -7.1L260.8 2.6L263.6 5.2L268.4 4.4L271.5 2.0L275.3 -1.0L277.8 -7.1ZM322.7 25.9L324.0 24.8L327.1 12.7L326.2 13.2L323.6 19.1ZM333.4 16.7L335.3 17.3L337.9 12.1L339.1 6.2L337.2 6.2L333.4 10.9ZM357.4 1.4L359.3 5.0L361.9 2.6L366.3 0.2L365.7 -2.8L358.1 -2.2ZM281.0 33.8L284.2 32.5L287.0 34.4L287.3 38.2L283.5 38.8L281.3 36.6ZM288.3 31.6L291.7 28.8L294.9 27.1L298.7 27.6L298.7 32.1L296.8 36.0L295.5 39.9L293.0 37.7L289.9 37.1L289.2 32.1ZM288.3 41.0L291.7 39.9L296.2 40.4L298.4 39.3L295.5 43.2L291.1 43.5ZM312.0 37.7L312.6 36.0L314.8 37.7L314.5 39.3ZM233.9 184.3L238.7 181.4L240.9 183.0L239.3 186.3L238.4 187.0L236.2 184.7ZM243.1 180.6L246.3 181.0L246.3 182.5L243.4 181.6ZM226.7 189.6L228.3 188.3L229.3 188.9L227.9 190.4ZM278.5 155.7L279.4 162.5L278.5 167.6L277.2 169.6L274.7 167.6L273.4 164.2L273.2 160.8L274.4 159.4L276.6 158.0L277.8 158.2ZM270.9 173.1L273.1 173.9L277.2 170.6L279.7 173.1L281.1 176.8L280.1 181.4L279.4 187.9L276.6 187.5L275.0 190.1L272.2 189.2L272.2 184.3L272.5 178.5L270.6 176.0ZM297.7 198.8L299.6 196.0L303.4 195.6L309.4 197.2L314.5 196.0L318.0 195.1L315.4 200.8L315.8 204.8L314.5 208.0L310.4 206.8L304.7 203.0L299.0 200.8ZM367.9 216.2L371.3 216.6L375.4 217.6L381.8 218.3L385.2 218.5L384.9 220.4L380.2 221.0L375.4 221.4L370.7 219.3L367.9 218.9ZM423.1 220.4L427.2 219.7L427.2 217.9L431.7 218.0L437.5 215.5L433.9 218.5L434.2 221.0L431.7 221.8L427.6 224.0L424.1 223.0ZM394.4 211.9L397.2 209.5L396.6 212.3L394.7 213.8ZM382.4 187.5L384.6 186.1L387.1 188.3L385.9 189.2L382.7 188.3ZM382.7 192.8L384.3 192.8L384.0 195.6L382.7 195.2ZM343.2 182.8L345.1 182.6L346.1 185.9L344.8 185.5ZM347.7 194.4L349.2 193.6L350.5 196.4L348.6 196.8L350.8 198.4L351.1 199.6L349.5 198.8ZM363.4 189.2L366.9 189.2L371.3 192.0L374.5 196.0L372.0 196.4L368.2 193.2ZM377.3 181.8L379.9 181.0L379.6 182.6L377.7 182.6ZM379.2 203.6L380.8 204.0L380.2 205.6L379.2 205.2ZM55.8 198.4L58.0 198.0L60.2 198.6L58.6 199.6L56.4 199.2ZM46.0 191.2L47.9 190.8L48.2 192.0L46.6 192.0ZM38.7 193.2L41.6 193.6L41.9 194.2L39.1 194.0ZM40.3 191.2L43.8 192.8L43.5 193.0L40.3 191.8ZM36.9 192.4L38.4 192.0L38.4 193.0L37.2 193.2ZM21.4 185.1L22.6 184.9L22.6 186.3L21.7 186.3ZM59.9 205.2L61.2 205.0L61.2 205.7L60.2 205.8ZM110.0 237.4L112.3 237.0L113.9 237.9L112.3 238.8L110.4 238.2ZM115.5 235.3L116.3 235.3L116.1 235.9ZM131.6 266.3L134.1 263.7L134.5 264.8L132.2 266.8ZM127.5 272.4L129.4 271.3L131.6 267.3L131.8 269.9L130.7 271.7ZM119.3 272.7L120.6 271.4L122.1 272.0L121.8 274.2L120.2 274.7ZM112.3 270.2L117.1 268.4L115.8 270.2L113.9 272.7ZM105.4 267.3L107.0 266.6L107.0 269.1L106.2 269.5ZM109.5 271.7L110.8 271.3L111.1 272.4L109.8 272.6ZM174.2 -7.1L179.9 -7.1L179.9 2.0L178.7 5.0L176.8 8.0L174.2 7.4L174.2 2.6ZM171.7 9.1L174.2 9.1L173.6 15.6L172.0 15.6ZM176.5 11.5L179.3 8.5L180.6 11.5L183.1 14.4L181.2 16.2L178.7 14.4ZM179.0 21.9L183.1 22.5L182.5 24.6L179.0 24.8ZM178.0 31.0L180.6 29.0L181.5 27.1L182.8 28.8L180.9 32.1L179.3 32.7ZM185.0 32.1L186.6 31.6L186.9 34.4L185.6 34.6ZM188.8 49.1L190.4 45.9L191.9 46.4L190.0 49.7ZM386.9 199.5L388.7 198.8L390.0 199.5L388.4 200.2ZM389.2 206.9L390.9 206.0L391.9 206.4L389.7 207.7ZM383.2 200.8L384.6 200.0L385.6 199.8L384.3 201.0ZM375.1 197.5L376.7 198.0L377.0 199.5L375.8 198.8ZM377.0 200.0L378.6 200.4L379.9 201.6L378.9 201.9L377.7 201.0ZM377.7 204.2L378.7 204.0L378.7 205.4L377.7 205.4ZM372.7 207.2L374.2 206.9L374.2 208.0L372.9 208.0ZM379.2 209.4L380.2 209.4L380.1 210.5L379.4 210.3ZM390.0 217.7L390.9 213.8L391.4 214.2L390.6 217.7ZM373.6 189.4L374.8 190.4L375.0 191.2L373.9 190.6ZM374.0 175.0L374.8 174.3L375.6 175.3L374.6 176.2ZM379.9 176.8L381.3 176.8L381.3 177.7L380.0 177.7ZM363.8 210.1L364.9 210.5L364.7 212.0L363.9 211.6ZM376.3 201.2L376.8 201.2L376.8 202.3L376.3 202.2ZM378.6 206.9L379.4 207.1L379.2 207.9L378.6 207.7ZM381.8 206.0L383.3 206.0L383.2 206.6L382.0 206.8ZM389.0 204.8L390.0 204.8L389.8 205.7L389.2 205.7ZM349.5 198.0L350.2 197.9L351.6 199.5L350.8 200.0ZM349.1 190.5L350.0 190.5L349.9 192.6L349.0 192.4ZM308.8 212.4L311.0 213.2L311.0 214.5L309.7 214.2ZM283.0 157.4L284.9 157.0L284.9 158.1L283.2 158.0ZM118.3 257.0L119.1 257.0L119.1 257.7L118.3 257.7Z" fill="none" stroke="#aad3df" stroke-width="3.400" stroke-linejoin="round"/><path d="M273.7 40.4L271.5 33.8L270.3 28.2L270.6 21.4L273.4 15.6L279.7 13.2L286.1 8.1L285.4 13.2L284.2 17.9L288.0 23.6L283.5 27.1L281.6 32.7L279.7 37.1L281.6 41.5L282.3 45.4L288.0 45.9L288.0 50.2L291.7 50.2L295.5 48.6L298.1 45.4L303.7 42.8L306.3 48.6L309.4 51.3L317.6 48.1L323.3 44.8L332.2 41.2L335.3 41.5L336.6 45.9L341.6 46.4L344.8 43.2L345.4 39.9L351.8 36.0L352.4 31.6L351.8 22.5L352.1 16.7L355.5 10.3L361.9 8.0L365.7 13.2L368.2 16.7L371.3 16.2L373.2 13.2L372.9 6.2L373.9 0.8L367.5 -1.6L367.5 -7.1L724.5 -7.1L724.5 283.4L553.3 283.4L552.0 277.0L544.4 273.4L540.6 265.5L536.2 258.3L532.4 257.2L528.6 255.4L526.1 258.3L523.6 261.2L521.1 262.6L522.9 265.5L525.5 269.9L528.0 273.4L530.5 277.0L532.4 283.4L445.2 283.4L443.4 276.3L440.2 272.0L439.9 261.9L437.7 271.3L435.5 274.5L431.4 270.6L425.0 259.0L424.4 261.2L427.6 269.9L430.7 276.3L432.0 283.4L135.7 283.4L137.0 277.0L137.6 273.1L147.7 269.1L154.9 262.8L158.5 255.2L156.7 253.7L157.4 247.2L160.7 241.3L165.4 234.2L171.1 231.5L175.9 228.3L177.4 226.2L180.3 219.3L181.8 214.8L185.6 213.8L185.6 216.6L190.0 219.3L194.3 218.9L200.5 217.4L200.8 219.3L205.2 220.0L211.5 217.7L215.1 215.4L219.7 213.6L227.3 209.1L238.4 207.0L243.7 206.0L251.3 207.2L255.5 206.6L262.7 206.0L268.2 206.0L274.4 205.5L281.4 202.8L284.2 204.0L284.2 206.8L288.0 204.6L288.9 204.8L286.1 209.9L285.4 212.3L286.3 214.4L289.0 216.9L287.1 222.8L282.9 229.2L288.0 230.4L289.2 233.0L292.1 234.8L302.4 236.8L309.4 239.1L315.1 240.8L317.6 247.3L324.0 249.5L331.5 251.7L340.4 256.5L345.4 252.4L345.9 242.7L351.4 238.3L358.1 236.8L362.1 237.8L365.0 239.1L370.6 242.9L378.0 246.9L382.7 246.5L391.2 248.4L402.0 252.2L408.0 249.5L411.1 247.6L415.6 246.5L420.1 247.1L423.1 249.0L432.6 250.0L436.7 247.3L438.7 242.9L440.2 237.4L441.5 234.0L443.4 229.2L445.4 225.1L445.8 221.6L445.1 216.8L446.3 212.4L447.6 208.4L447.8 206.0L442.6 208.6L437.9 206.8L433.4 210.6L426.5 212.9L423.1 210.9L421.2 208.8L413.0 206.1L411.1 211.5L406.3 211.5L402.9 208.2L397.7 206.4L392.2 207.6L392.4 205.0L391.3 202.3L391.3 198.4L385.2 194.7L389.7 193.6L388.1 191.8L389.0 188.6L387.8 186.7L389.8 184.3L383.8 185.2L384.6 181.0L387.8 177.7L384.6 180.6L388.4 176.0L383.7 175.0L382.5 174.0L373.2 173.3L369.1 175.2L372.6 179.7L370.1 178.1L370.4 181.4L367.2 178.9L366.9 181.4L364.0 176.4L361.9 178.7L365.7 186.7L364.1 186.3L363.8 190.0L368.2 191.6L374.2 197.2L370.9 200.0L368.4 197.7L364.4 197.8L365.4 200.4L367.5 202.0L363.1 200.7L364.7 207.7L365.7 209.7L361.6 207.1L361.1 210.0L358.8 205.0L356.2 206.6L356.0 203.2L353.7 200.0L356.4 195.2L354.5 194.3L352.3 193.0L350.2 189.6L347.1 185.1L345.4 182.0L342.2 177.3L342.0 170.0L341.5 165.5L339.8 163.4L336.0 160.8L333.4 158.7L329.2 155.2L323.0 151.2L319.5 149.3L315.3 145.9L313.2 138.1L310.3 135.1L306.6 139.3L304.7 135.4L306.1 132.3L304.6 131.1L297.0 134.2L298.1 138.5L296.7 143.3L298.5 146.4L304.5 150.3L308.9 160.2L313.9 164.2L321.3 165.1L319.7 167.4L325.7 171.6L332.4 175.8L335.9 179.7L335.1 182.6L332.7 180.6L327.9 177.1L325.2 178.1L323.3 183.0L327.3 188.5L324.2 190.6L320.6 197.8L318.0 196.4L318.4 195.1L319.5 193.8L319.1 192.2L321.4 190.0L320.4 186.2L317.8 180.4L315.6 180.7L312.4 175.3L309.6 176.2L309.1 174.0L304.9 170.9L298.9 168.9L296.4 166.2L293.6 163.5L289.2 160.8L285.6 156.3L284.2 150.9L281.1 146.1L275.5 143.3L272.7 144.2L269.8 147.9L265.0 149.6L263.3 150.9L261.0 153.3L256.6 154.6L253.0 153.1L249.7 152.6L246.9 151.8L243.7 151.1L242.5 152.2L238.7 154.8L238.3 158.2L240.1 161.5L238.9 165.5L232.8 169.5L227.0 171.7L224.6 175.0L218.9 181.1L217.0 185.3L220.6 191.4L216.1 194.4L214.7 200.2L212.9 200.4L209.1 202.0L205.3 207.4L203.6 206.5L196.9 207.4L191.2 207.4L188.3 209.1L185.3 212.0L183.7 213.0L179.4 208.9L179.0 206.9L175.2 203.6L169.0 205.2L162.6 205.0L163.1 197.6L161.0 193.9L159.1 190.9L159.8 186.2L163.1 179.7L164.1 171.4L163.3 166.8L163.2 162.5L160.5 156.5L166.0 152.5L170.6 148.8L174.6 150.9L182.1 149.9L183.3 150.9L195.1 151.6L200.1 152.5L206.6 152.9L209.2 151.5L211.2 141.2L212.2 133.2L211.8 127.6L207.8 124.5L205.2 117.4L199.5 115.3L197.8 113.1L191.5 112.4L189.2 110.2L191.9 108.7L188.9 107.2L194.0 103.6L200.1 102.5L202.0 105.3L206.5 104.4L209.6 104.5L209.0 102.6L206.9 94.0L208.9 94.7L211.1 94.2L211.5 97.4L217.2 98.1L219.7 96.2L221.4 93.6L225.9 92.0L228.9 89.3L229.2 84.1L230.8 81.8L234.1 80.9L237.4 79.0L239.3 78.0L241.5 76.8L245.0 71.2L249.1 61.4L253.2 58.9L258.3 56.6L263.3 57.1L264.3 54.2L270.3 53.4L270.6 55.6L273.1 55.0L274.1 51.6L276.0 51.5L275.0 48.8L273.4 47.0L276.0 45.0ZM186.9 -7.1L200.1 -7.1L199.5 0.2L196.0 3.5L193.8 6.8L195.2 6.6L192.6 10.9L194.7 9.7L198.3 8.3L206.5 8.5L207.9 10.9L206.0 15.0L203.6 20.2L200.8 23.1L202.7 25.0L198.9 28.2L195.7 27.6L198.9 28.5L202.0 27.5L203.3 28.2L206.5 30.8L209.0 33.8L210.1 39.3L211.5 42.6L215.3 44.8L218.6 48.9L217.8 52.4L219.9 54.7L218.8 54.8L221.3 59.3L220.4 62.4L222.3 61.4L227.3 61.6L230.1 65.0L230.2 66.4L228.9 70.2L227.6 71.7L226.4 73.5L223.5 76.0L221.9 76.5L224.8 77.3L227.9 77.4L227.5 80.2L225.2 82.3L222.8 82.9L220.6 84.0L218.2 83.2L214.1 84.2L212.2 83.4L210.9 85.6L207.2 84.2L203.6 86.3L200.6 84.2L197.6 85.3L196.1 89.1L192.9 87.7L187.2 89.8L186.3 91.7L183.0 90.6L184.5 89.1L187.0 87.2L190.5 81.2L193.1 79.3L197.2 79.3L200.3 77.8L202.0 75.8L199.1 76.6L194.2 75.1L191.9 75.8L189.4 74.6L185.6 72.4L187.6 71.2L189.7 70.2L193.3 67.0L193.5 63.8L189.0 62.9L192.1 59.4L189.9 57.6L191.3 56.4L194.8 57.3L197.1 57.5L199.5 56.6L200.1 56.1L200.1 54.0L199.8 52.1L201.1 49.4L198.7 49.1L196.2 44.8L197.6 40.7L199.8 39.9L196.4 40.8L193.5 41.8L191.3 42.8L188.4 43.4L186.5 39.3L188.4 36.7L189.9 34.2L188.7 32.2L189.0 28.8L190.7 29.1L188.0 28.8L185.6 30.4L185.0 32.7L182.7 36.0L183.1 32.7L184.0 27.1L184.5 23.5L179.8 19.9L182.3 16.7L183.1 13.5L182.1 11.5L183.1 8.2L182.5 6.6L186.3 6.2L185.1 2.1L186.9 0.2ZM172.5 35.1L175.2 37.1L174.2 38.8L177.1 37.1L180.3 36.9L182.5 41.0L181.8 43.2L183.4 43.0L184.8 45.4L184.4 47.0L182.0 48.1L180.6 49.9L179.0 50.2L179.6 53.2L180.6 57.1L181.2 61.2L180.3 63.0L178.9 69.5L175.3 70.0L171.1 70.5L169.5 71.9L166.9 73.3L165.2 75.3L162.9 75.8L157.1 76.8L158.5 74.8L154.7 75.3L157.2 73.3L153.7 72.2L156.6 70.2L153.0 70.2L156.9 68.4L156.2 66.9L159.1 65.2L156.4 65.4L159.5 61.2L162.2 58.7L161.9 58.0L154.5 56.6L156.6 54.3L158.5 52.4L154.7 50.5L155.9 47.0L160.0 46.7L161.0 47.8L164.8 47.0L167.3 43.7L163.5 43.2L166.7 37.7L168.7 36.9L170.9 36.2ZM289.2 -7.1L290.5 0.2L291.3 1.8L294.6 8.5L296.5 15.6L300.3 20.6L297.7 24.8L299.3 27.6L301.2 32.7L300.1 35.1L302.2 35.2L306.4 34.6L309.8 33.2L309.4 29.0L312.6 27.1L317.6 26.5L320.8 24.8L322.5 20.7L323.0 13.6L324.3 8.0L325.2 2.6L323.3 -2.2L326.5 -3.4L327.8 -7.1ZM258.3 -7.1L260.8 2.6L263.6 5.2L268.4 4.4L271.5 2.0L275.3 -1.0L277.8 -7.1ZM322.7 25.9L324.0 24.8L327.1 12.7L326.2 13.2L323.6 19.1ZM333.4 16.7L335.3 17.3L337.9 12.1L339.1 6.2L337.2 6.2L333.4 10.9ZM357.4 1.4L359.3 5.0L361.9 2.6L366.3 0.2L365.7 -2.8L358.1 -2.2ZM281.0 33.8L284.2 32.5L287.0 34.4L287.3 38.2L283.5 38.8L281.3 36.6ZM288.3 31.6L291.7 28.8L294.9 27.1L298.7 27.6L298.7 32.1L296.8 36.0L295.5 39.9L293.0 37.7L289.9 37.1L289.2 32.1ZM288.3 41.0L291.7 39.9L296.2 40.4L298.4 39.3L295.5 43.2L291.1 43.5ZM312.0 37.7L312.6 36.0L314.8 37.7L314.5 39.3ZM233.9 184.3L238.7 181.4L240.9 183.0L239.3 186.3L238.4 187.0L236.2 184.7ZM243.1 180.6L246.3 181.0L246.3 182.5L243.4 181.6ZM226.7 189.6L228.3 188.3L229.3 188.9L227.9 190.4ZM278.5 155.7L279.4 162.5L278.5 167.6L277.2 169.6L274.7 167.6L273.4 164.2L273.2 160.8L274.4 159.4L276.6 158.0L277.8 158.2ZM270.9 173.1L273.1 173.9L277.2 170.6L279.7 173.1L281.1 176.8L280.1 181.4L279.4 187.9L276.6 187.5L275.0 190.1L272.2 189.2L272.2 184.3L272.5 178.5L270.6 176.0ZM297.7 198.8L299.6 196.0L303.4 195.6L309.4 197.2L314.5 196.0L318.0 195.1L315.4 200.8L315.8 204.8L314.5 208.0L310.4 206.8L304.7 203.0L299.0 200.8ZM367.9 216.2L371.3 216.6L375.4 217.6L381.8 218.3L385.2 218.5L384.9 220.4L380.2 221.0L375.4 221.4L370.7 219.3L367.9 218.9ZM423.1 220.4L427.2 219.7L427.2 217.9L431.7 218.0L437.5 215.5L433.9 218.5L434.2 221.0L431.7 221.8L427.6 224.0L424.1 223.0ZM394.4 211.9L397.2 209.5L396.6 212.3L394.7 213.8ZM382.4 187.5L384.6 186.1L387.1 188.3L385.9 189.2L382.7 188.3ZM382.7 192.8L384.3 192.8L384.0 195.6L382.7 195.2ZM343.2 182.8L345.1 182.6L346.1 185.9L344.8 185.5ZM347.7 194.4L349.2 193.6L350.5 196.4L348.6 196.8L350.8 198.4L351.1 199.6L349.5 198.8ZM363.4 189.2L366.9 189.2L371.3 192.0L374.5 196.0L372.0 196.4L368.2 193.2ZM377.3 181.8L379.9 181.0L379.6 182.6L377.7 182.6ZM379.2 203.6L380.8 204.0L380.2 205.6L379.2 205.2ZM55.8 198.4L58.0 198.0L60.2 198.6L58.6 199.6L56.4 199.2ZM46.0 191.2L47.9 190.8L48.2 192.0L46.6 192.0ZM38.7 193.2L41.6 193.6L41.9 194.2L39.1 194.0ZM40.3 191.2L43.8 192.8L43.5 193.0L40.3 191.8ZM36.9 192.4L38.4 192.0L38.4 193.0L37.2 193.2ZM21.4 185.1L22.6 184.9L22.6 186.3L21.7 186.3ZM59.9 205.2L61.2 205.0L61.2 205.7L60.2 205.8ZM110.0 237.4L112.3 237.0L113.9 237.9L112.3 238.8L110.4 238.2ZM115.5 235.3L116.3 235.3L116.1 235.9ZM131.6 266.3L134.1 263.7L134.5 264.8L132.2 266.8ZM127.5 272.4L129.4 271.3L131.6 267.3L131.8 269.9L130.7 271.7ZM119.3 272.7L120.6 271.4L122.1 272.0L121.8 274.2L120.2 274.7ZM112.3 270.2L117.1 268.4L115.8 270.2L113.9 272.7ZM105.4 267.3L107.0 266.6L107.0 269.1L106.2 269.5ZM109.5 271.7L110.8 271.3L111.1 272.4L109.8 272.6ZM174.2 -7.1L179.9 -7.1L179.9 2.0L178.7 5.0L176.8 8.0L174.2 7.4L174.2 2.6ZM171.7 9.1L174.2 9.1L173.6 15.6L172.0 15.6ZM176.5 11.5L179.3 8.5L180.6 11.5L183.1 14.4L181.2 16.2L178.7 14.4ZM179.0 21.9L183.1 22.5L182.5 24.6L179.0 24.8ZM178.0 31.0L180.6 29.0L181.5 27.1L182.8 28.8L180.9 32.1L179.3 32.7ZM185.0 32.1L186.6 31.6L186.9 34.4L185.6 34.6ZM188.8 49.1L190.4 45.9L191.9 46.4L190.0 49.7ZM386.9 199.5L388.7 198.8L390.0 199.5L388.4 200.2ZM389.2 206.9L390.9 206.0L391.9 206.4L389.7 207.7ZM383.2 200.8L384.6 200.0L385.6 199.8L384.3 201.0ZM375.1 197.5L376.7 198.0L377.0 199.5L375.8 198.8ZM377.0 200.0L378.6 200.4L379.9 201.6L378.9 201.9L377.7 201.0ZM377.7 204.2L378.7 204.0L378.7 205.4L377.7 205.4ZM372.7 207.2L374.2 206.9L374.2 208.0L372.9 208.0ZM379.2 209.4L380.2 209.4L380.1 210.5L379.4 210.3ZM390.0 217.7L390.9 213.8L391.4 214.2L390.6 217.7ZM373.6 189.4L374.8 190.4L375.0 191.2L373.9 190.6ZM374.0 175.0L374.8 174.3L375.6 175.3L374.6 176.2ZM379.9 176.8L381.3 176.8L381.3 177.7L380.0 177.7ZM363.8 210.1L364.9 210.5L364.7 212.0L363.9 211.6ZM376.3 201.2L376.8 201.2L376.8 202.3L376.3 202.2ZM378.6 206.9L379.4 207.1L379.2 207.9L378.6 207.7ZM381.8 206.0L383.3 206.0L383.2 206.6L382.0 206.8ZM389.0 204.8L390.0 204.8L389.8 205.7L389.2 205.7ZM349.5 198.0L350.2 197.9L351.6 199.5L350.8 200.0ZM349.1 190.5L350.0 190.5L349.9 192.6L349.0 192.4ZM308.8 212.4L311.0 213.2L311.0 214.5L309.7 214.2ZM283.0 157.4L284.9 157.0L284.9 158.1L283.2 158.0ZM118.3 257.0L119.1 257.0L119.1 257.7L118.3 257.7Z" fill="#f2efe9"/><clipPath id="lc"><path d="M273.7 40.4L271.5 33.8L270.3 28.2L270.6 21.4L273.4 15.6L279.7 13.2L286.1 8.1L285.4 13.2L284.2 17.9L288.0 23.6L283.5 27.1L281.6 32.7L279.7 37.1L281.6 41.5L282.3 45.4L288.0 45.9L288.0 50.2L291.7 50.2L295.5 48.6L298.1 45.4L303.7 42.8L306.3 48.6L309.4 51.3L317.6 48.1L323.3 44.8L332.2 41.2L335.3 41.5L336.6 45.9L341.6 46.4L344.8 43.2L345.4 39.9L351.8 36.0L352.4 31.6L351.8 22.5L352.1 16.7L355.5 10.3L361.9 8.0L365.7 13.2L368.2 16.7L371.3 16.2L373.2 13.2L372.9 6.2L373.9 0.8L367.5 -1.6L367.5 -7.1L724.5 -7.1L724.5 283.4L553.3 283.4L552.0 277.0L544.4 273.4L540.6 265.5L536.2 258.3L532.4 257.2L528.6 255.4L526.1 258.3L523.6 261.2L521.1 262.6L522.9 265.5L525.5 269.9L528.0 273.4L530.5 277.0L532.4 283.4L445.2 283.4L443.4 276.3L440.2 272.0L439.9 261.9L437.7 271.3L435.5 274.5L431.4 270.6L425.0 259.0L424.4 261.2L427.6 269.9L430.7 276.3L432.0 283.4L135.7 283.4L137.0 277.0L137.6 273.1L147.7 269.1L154.9 262.8L158.5 255.2L156.7 253.7L157.4 247.2L160.7 241.3L165.4 234.2L171.1 231.5L175.9 228.3L177.4 226.2L180.3 219.3L181.8 214.8L185.6 213.8L185.6 216.6L190.0 219.3L194.3 218.9L200.5 217.4L200.8 219.3L205.2 220.0L211.5 217.7L215.1 215.4L219.7 213.6L227.3 209.1L238.4 207.0L243.7 206.0L251.3 207.2L255.5 206.6L262.7 206.0L268.2 206.0L274.4 205.5L281.4 202.8L284.2 204.0L284.2 206.8L288.0 204.6L288.9 204.8L286.1 209.9L285.4 212.3L286.3 214.4L289.0 216.9L287.1 222.8L282.9 229.2L288.0 230.4L289.2 233.0L292.1 234.8L302.4 236.8L309.4 239.1L315.1 240.8L317.6 247.3L324.0 249.5L331.5 251.7L340.4 256.5L345.4 252.4L345.9 242.7L351.4 238.3L358.1 236.8L362.1 237.8L365.0 239.1L370.6 242.9L378.0 246.9L382.7 246.5L391.2 248.4L402.0 252.2L408.0 249.5L411.1 247.6L415.6 246.5L420.1 247.1L423.1 249.0L432.6 250.0L436.7 247.3L438.7 242.9L440.2 237.4L441.5 234.0L443.4 229.2L445.4 225.1L445.8 221.6L445.1 216.8L446.3 212.4L447.6 208.4L447.8 206.0L442.6 208.6L437.9 206.8L433.4 210.6L426.5 212.9L423.1 210.9L421.2 208.8L413.0 206.1L411.1 211.5L406.3 211.5L402.9 208.2L397.7 206.4L392.2 207.6L392.4 205.0L391.3 202.3L391.3 198.4L385.2 194.7L389.7 193.6L388.1 191.8L389.0 188.6L387.8 186.7L389.8 184.3L383.8 185.2L384.6 181.0L387.8 177.7L384.6 180.6L388.4 176.0L383.7 175.0L382.5 174.0L373.2 173.3L369.1 175.2L372.6 179.7L370.1 178.1L370.4 181.4L367.2 178.9L366.9 181.4L364.0 176.4L361.9 178.7L365.7 186.7L364.1 186.3L363.8 190.0L368.2 191.6L374.2 197.2L370.9 200.0L368.4 197.7L364.4 197.8L365.4 200.4L367.5 202.0L363.1 200.7L364.7 207.7L365.7 209.7L361.6 207.1L361.1 210.0L358.8 205.0L356.2 206.6L356.0 203.2L353.7 200.0L356.4 195.2L354.5 194.3L352.3 193.0L350.2 189.6L347.1 185.1L345.4 182.0L342.2 177.3L342.0 170.0L341.5 165.5L339.8 163.4L336.0 160.8L333.4 158.7L329.2 155.2L323.0 151.2L319.5 149.3L315.3 145.9L313.2 138.1L310.3 135.1L306.6 139.3L304.7 135.4L306.1 132.3L304.6 131.1L297.0 134.2L298.1 138.5L296.7 143.3L298.5 146.4L304.5 150.3L308.9 160.2L313.9 164.2L321.3 165.1L319.7 167.4L325.7 171.6L332.4 175.8L335.9 179.7L335.1 182.6L332.7 180.6L327.9 177.1L325.2 178.1L323.3 183.0L327.3 188.5L324.2 190.6L320.6 197.8L318.0 196.4L318.4 195.1L319.5 193.8L319.1 192.2L321.4 190.0L320.4 186.2L317.8 180.4L315.6 180.7L312.4 175.3L309.6 176.2L309.1 174.0L304.9 170.9L298.9 168.9L296.4 166.2L293.6 163.5L289.2 160.8L285.6 156.3L284.2 150.9L281.1 146.1L275.5 143.3L272.7 144.2L269.8 147.9L265.0 149.6L263.3 150.9L261.0 153.3L256.6 154.6L253.0 153.1L249.7 152.6L246.9 151.8L243.7 151.1L242.5 152.2L238.7 154.8L238.3 158.2L240.1 161.5L238.9 165.5L232.8 169.5L227.0 171.7L224.6 175.0L218.9 181.1L217.0 185.3L220.6 191.4L216.1 194.4L214.7 200.2L212.9 200.4L209.1 202.0L205.3 207.4L203.6 206.5L196.9 207.4L191.2 207.4L188.3 209.1L185.3 212.0L183.7 213.0L179.4 208.9L179.0 206.9L175.2 203.6L169.0 205.2L162.6 205.0L163.1 197.6L161.0 193.9L159.1 190.9L159.8 186.2L163.1 179.7L164.1 171.4L163.3 166.8L163.2 162.5L160.5 156.5L166.0 152.5L170.6 148.8L174.6 150.9L182.1 149.9L183.3 150.9L195.1 151.6L200.1 152.5L206.6 152.9L209.2 151.5L211.2 141.2L212.2 133.2L211.8 127.6L207.8 124.5L205.2 117.4L199.5 115.3L197.8 113.1L191.5 112.4L189.2 110.2L191.9 108.7L188.9 107.2L194.0 103.6L200.1 102.5L202.0 105.3L206.5 104.4L209.6 104.5L209.0 102.6L206.9 94.0L208.9 94.7L211.1 94.2L211.5 97.4L217.2 98.1L219.7 96.2L221.4 93.6L225.9 92.0L228.9 89.3L229.2 84.1L230.8 81.8L234.1 80.9L237.4 79.0L239.3 78.0L241.5 76.8L245.0 71.2L249.1 61.4L253.2 58.9L258.3 56.6L263.3 57.1L264.3 54.2L270.3 53.4L270.6 55.6L273.1 55.0L274.1 51.6L276.0 51.5L275.0 48.8L273.4 47.0L276.0 45.0ZM186.9 -7.1L200.1 -7.1L199.5 0.2L196.0 3.5L193.8 6.8L195.2 6.6L192.6 10.9L194.7 9.7L198.3 8.3L206.5 8.5L207.9 10.9L206.0 15.0L203.6 20.2L200.8 23.1L202.7 25.0L198.9 28.2L195.7 27.6L198.9 28.5L202.0 27.5L203.3 28.2L206.5 30.8L209.0 33.8L210.1 39.3L211.5 42.6L215.3 44.8L218.6 48.9L217.8 52.4L219.9 54.7L218.8 54.8L221.3 59.3L220.4 62.4L222.3 61.4L227.3 61.6L230.1 65.0L230.2 66.4L228.9 70.2L227.6 71.7L226.4 73.5L223.5 76.0L221.9 76.5L224.8 77.3L227.9 77.4L227.5 80.2L225.2 82.3L222.8 82.9L220.6 84.0L218.2 83.2L214.1 84.2L212.2 83.4L210.9 85.6L207.2 84.2L203.6 86.3L200.6 84.2L197.6 85.3L196.1 89.1L192.9 87.7L187.2 89.8L186.3 91.7L183.0 90.6L184.5 89.1L187.0 87.2L190.5 81.2L193.1 79.3L197.2 79.3L200.3 77.8L202.0 75.8L199.1 76.6L194.2 75.1L191.9 75.8L189.4 74.6L185.6 72.4L187.6 71.2L189.7 70.2L193.3 67.0L193.5 63.8L189.0 62.9L192.1 59.4L189.9 57.6L191.3 56.4L194.8 57.3L197.1 57.5L199.5 56.6L200.1 56.1L200.1 54.0L199.8 52.1L201.1 49.4L198.7 49.1L196.2 44.8L197.6 40.7L199.8 39.9L196.4 40.8L193.5 41.8L191.3 42.8L188.4 43.4L186.5 39.3L188.4 36.7L189.9 34.2L188.7 32.2L189.0 28.8L190.7 29.1L188.0 28.8L185.6 30.4L185.0 32.7L182.7 36.0L183.1 32.7L184.0 27.1L184.5 23.5L179.8 19.9L182.3 16.7L183.1 13.5L182.1 11.5L183.1 8.2L182.5 6.6L186.3 6.2L185.1 2.1L186.9 0.2ZM172.5 35.1L175.2 37.1L174.2 38.8L177.1 37.1L180.3 36.9L182.5 41.0L181.8 43.2L183.4 43.0L184.8 45.4L184.4 47.0L182.0 48.1L180.6 49.9L179.0 50.2L179.6 53.2L180.6 57.1L181.2 61.2L180.3 63.0L178.9 69.5L175.3 70.0L171.1 70.5L169.5 71.9L166.9 73.3L165.2 75.3L162.9 75.8L157.1 76.8L158.5 74.8L154.7 75.3L157.2 73.3L153.7 72.2L156.6 70.2L153.0 70.2L156.9 68.4L156.2 66.9L159.1 65.2L156.4 65.4L159.5 61.2L162.2 58.7L161.9 58.0L154.5 56.6L156.6 54.3L158.5 52.4L154.7 50.5L155.9 47.0L160.0 46.7L161.0 47.8L164.8 47.0L167.3 43.7L163.5 43.2L166.7 37.7L168.7 36.9L170.9 36.2ZM289.2 -7.1L290.5 0.2L291.3 1.8L294.6 8.5L296.5 15.6L300.3 20.6L297.7 24.8L299.3 27.6L301.2 32.7L300.1 35.1L302.2 35.2L306.4 34.6L309.8 33.2L309.4 29.0L312.6 27.1L317.6 26.5L320.8 24.8L322.5 20.7L323.0 13.6L324.3 8.0L325.2 2.6L323.3 -2.2L326.5 -3.4L327.8 -7.1ZM258.3 -7.1L260.8 2.6L263.6 5.2L268.4 4.4L271.5 2.0L275.3 -1.0L277.8 -7.1ZM322.7 25.9L324.0 24.8L327.1 12.7L326.2 13.2L323.6 19.1ZM333.4 16.7L335.3 17.3L337.9 12.1L339.1 6.2L337.2 6.2L333.4 10.9ZM357.4 1.4L359.3 5.0L361.9 2.6L366.3 0.2L365.7 -2.8L358.1 -2.2ZM281.0 33.8L284.2 32.5L287.0 34.4L287.3 38.2L283.5 38.8L281.3 36.6ZM288.3 31.6L291.7 28.8L294.9 27.1L298.7 27.6L298.7 32.1L296.8 36.0L295.5 39.9L293.0 37.7L289.9 37.1L289.2 32.1ZM288.3 41.0L291.7 39.9L296.2 40.4L298.4 39.3L295.5 43.2L291.1 43.5ZM312.0 37.7L312.6 36.0L314.8 37.7L314.5 39.3ZM233.9 184.3L238.7 181.4L240.9 183.0L239.3 186.3L238.4 187.0L236.2 184.7ZM243.1 180.6L246.3 181.0L246.3 182.5L243.4 181.6ZM226.7 189.6L228.3 188.3L229.3 188.9L227.9 190.4ZM278.5 155.7L279.4 162.5L278.5 167.6L277.2 169.6L274.7 167.6L273.4 164.2L273.2 160.8L274.4 159.4L276.6 158.0L277.8 158.2ZM270.9 173.1L273.1 173.9L277.2 170.6L279.7 173.1L281.1 176.8L280.1 181.4L279.4 187.9L276.6 187.5L275.0 190.1L272.2 189.2L272.2 184.3L272.5 178.5L270.6 176.0ZM297.7 198.8L299.6 196.0L303.4 195.6L309.4 197.2L314.5 196.0L318.0 195.1L315.4 200.8L315.8 204.8L314.5 208.0L310.4 206.8L304.7 203.0L299.0 200.8ZM367.9 216.2L371.3 216.6L375.4 217.6L381.8 218.3L385.2 218.5L384.9 220.4L380.2 221.0L375.4 221.4L370.7 219.3L367.9 218.9ZM423.1 220.4L427.2 219.7L427.2 217.9L431.7 218.0L437.5 215.5L433.9 218.5L434.2 221.0L431.7 221.8L427.6 224.0L424.1 223.0ZM394.4 211.9L397.2 209.5L396.6 212.3L394.7 213.8ZM382.4 187.5L384.6 186.1L387.1 188.3L385.9 189.2L382.7 188.3ZM382.7 192.8L384.3 192.8L384.0 195.6L382.7 195.2ZM343.2 182.8L345.1 182.6L346.1 185.9L344.8 185.5ZM347.7 194.4L349.2 193.6L350.5 196.4L348.6 196.8L350.8 198.4L351.1 199.6L349.5 198.8ZM363.4 189.2L366.9 189.2L371.3 192.0L374.5 196.0L372.0 196.4L368.2 193.2ZM377.3 181.8L379.9 181.0L379.6 182.6L377.7 182.6ZM379.2 203.6L380.8 204.0L380.2 205.6L379.2 205.2ZM55.8 198.4L58.0 198.0L60.2 198.6L58.6 199.6L56.4 199.2ZM46.0 191.2L47.9 190.8L48.2 192.0L46.6 192.0ZM38.7 193.2L41.6 193.6L41.9 194.2L39.1 194.0ZM40.3 191.2L43.8 192.8L43.5 193.0L40.3 191.8ZM36.9 192.4L38.4 192.0L38.4 193.0L37.2 193.2ZM21.4 185.1L22.6 184.9L22.6 186.3L21.7 186.3ZM59.9 205.2L61.2 205.0L61.2 205.7L60.2 205.8ZM110.0 237.4L112.3 237.0L113.9 237.9L112.3 238.8L110.4 238.2ZM115.5 235.3L116.3 235.3L116.1 235.9ZM131.6 266.3L134.1 263.7L134.5 264.8L132.2 266.8ZM127.5 272.4L129.4 271.3L131.6 267.3L131.8 269.9L130.7 271.7ZM119.3 272.7L120.6 271.4L122.1 272.0L121.8 274.2L120.2 274.7ZM112.3 270.2L117.1 268.4L115.8 270.2L113.9 272.7ZM105.4 267.3L107.0 266.6L107.0 269.1L106.2 269.5ZM109.5 271.7L110.8 271.3L111.1 272.4L109.8 272.6ZM174.2 -7.1L179.9 -7.1L179.9 2.0L178.7 5.0L176.8 8.0L174.2 7.4L174.2 2.6ZM171.7 9.1L174.2 9.1L173.6 15.6L172.0 15.6ZM176.5 11.5L179.3 8.5L180.6 11.5L183.1 14.4L181.2 16.2L178.7 14.4ZM179.0 21.9L183.1 22.5L182.5 24.6L179.0 24.8ZM178.0 31.0L180.6 29.0L181.5 27.1L182.8 28.8L180.9 32.1L179.3 32.7ZM185.0 32.1L186.6 31.6L186.9 34.4L185.6 34.6ZM188.8 49.1L190.4 45.9L191.9 46.4L190.0 49.7ZM386.9 199.5L388.7 198.8L390.0 199.5L388.4 200.2ZM389.2 206.9L390.9 206.0L391.9 206.4L389.7 207.7ZM383.2 200.8L384.6 200.0L385.6 199.8L384.3 201.0ZM375.1 197.5L376.7 198.0L377.0 199.5L375.8 198.8ZM377.0 200.0L378.6 200.4L379.9 201.6L378.9 201.9L377.7 201.0ZM377.7 204.2L378.7 204.0L378.7 205.4L377.7 205.4ZM372.7 207.2L374.2 206.9L374.2 208.0L372.9 208.0ZM379.2 209.4L380.2 209.4L380.1 210.5L379.4 210.3ZM390.0 217.7L390.9 213.8L391.4 214.2L390.6 217.7ZM373.6 189.4L374.8 190.4L375.0 191.2L373.9 190.6ZM374.0 175.0L374.8 174.3L375.6 175.3L374.6 176.2ZM379.9 176.8L381.3 176.8L381.3 177.7L380.0 177.7ZM363.8 210.1L364.9 210.5L364.7 212.0L363.9 211.6ZM376.3 201.2L376.8 201.2L376.8 202.3L376.3 202.2ZM378.6 206.9L379.4 207.1L379.2 207.9L378.6 207.7ZM381.8 206.0L383.3 206.0L383.2 206.6L382.0 206.8ZM389.0 204.8L390.0 204.8L389.8 205.7L389.2 205.7ZM349.5 198.0L350.2 197.9L351.6 199.5L350.8 200.0ZM349.1 190.5L350.0 190.5L349.9 192.6L349.0 192.4ZM308.8 212.4L311.0 213.2L311.0 214.5L309.7 214.2ZM283.0 157.4L284.9 157.0L284.9 158.1L283.2 158.0ZM118.3 257.0L119.1 257.0L119.1 257.7L118.3 257.7Z"/></clipPath><path clip-path="url(#lc)" d="M700.7 265.7L694.7 266.2L688.6 269.1M688.6 269.1L685.4 275.1L683.3 280.4M161.6 41.4L167.1 39.9L171.6 37.9M699.4 -8.6L696.3 -2.1L691.8 3.1M700.3 15.1L697.5 7.8L691.8 3.1M598.6 141.0L591.0 141.7L583.8 143.5M598.6 141.0L602.5 144.9L607.3 148.0M607.3 148.0L603.7 155.8L599.5 164.6M599.5 164.6L590.6 164.2L580.8 165.9M583.8 143.5L584.3 154.2L580.8 165.9M624.9 124.3L622.1 121.4L619.7 118.2M624.9 124.3L624.0 127.1L624.8 131.7M598.6 141.0L599.1 133.1L599.6 121.1M607.3 148.0L607.7 148.0L608.3 147.9M619.7 118.2L608.0 118.6L599.6 121.1M624.8 131.7L618.2 139.3L608.3 147.9M183.3 6.3L186.4 2.7L189.8 0.5M189.8 0.5L189.8 -0.3L189.6 -0.8M165.6 167.5L166.4 161.6L167.7 157.6M685.4 2.9L680.3 10.7L671.0 19.8M685.4 2.9L680.5 -1.8L674.0 -7.7M665.4 -6.7L659.3 -0.2L658.0 6.5M658.0 6.5L664.3 12.3L670.9 19.8M670.9 19.8L671.0 19.8L671.0 19.8M700.3 15.1L698.0 24.3L693.7 32.1M693.7 32.1L689.3 32.6L685.5 33.5M685.5 33.5L679.6 24.1L671.0 19.8M691.8 3.1L688.5 2.7L685.4 2.9M624.9 124.3L633.2 123.0L644.9 119.7M619.7 118.2L620.3 111.4L621.2 104.1M621.2 104.1L629.1 99.2L633.4 96.7M647.7 114.5L645.2 116.5L644.9 119.7M647.7 114.5L644.3 107.8L642.2 100.1M642.2 100.1L637.3 98.0L633.4 96.7M667.6 111.7L665.7 100.2L661.6 86.3M667.6 111.7L667.5 112.0L667.2 112.2M667.2 112.2L656.7 110.4L647.7 114.5M642.2 100.1L653.5 96.2L661.6 86.3M606.7 93.1L615.2 97.1L621.2 104.1M606.7 93.1L605.0 83.3L608.5 75.5M630.9 74.8L631.5 84.5L633.4 96.7M630.9 74.8L630.6 74.4L630.2 74.1M630.2 74.1L617.5 72.9L608.5 75.5M483.4 58.9L479.0 52.8L477.1 46.2M483.4 58.9L490.7 56.0L498.9 53.2M498.9 53.2L502.1 44.4L504.4 36.6M488.8 31.3L497.4 32.9L504.4 36.6M488.8 31.3L482.8 36.4L478.1 39.0M478.1 39.0L477.5 43.3L477.1 46.2M727.2 104.6L716.0 108.9L694.3 119.2M727.2 104.6L709.9 99.9L689.8 91.0M694.3 119.2L689.6 114.0L685.3 108.1M689.8 91.0L688.4 100.6L685.3 108.1M702.0 74.8L695.6 84.9L689.1 89.3M689.1 89.3L689.5 90.1L689.8 91.0M692.9 129.5L692.8 123.5L694.3 119.2M667.6 111.7L675.7 109.7L685.3 108.1M667.2 112.2L667.8 119.8L669.3 127.9M685.6 136.1L677.3 134.8L669.3 127.9M693.8 203.9L696.6 210.5L699.7 221.3M693.8 203.9L698.0 200.5L701.6 196.7M709.4 45.7L702.0 40.4L693.7 32.1M738.7 157.5L713.8 154.8L689.9 155.0M702.2 181.1L694.4 179.3L685.4 174.4M689.9 155.0L687.1 165.7L685.4 174.4M685.6 136.1L685.1 141.0L684.2 147.7M689.9 155.0L687.7 151.0L684.2 147.7M693.8 203.9L686.2 201.0L678.1 200.8M678.1 200.8L679.7 191.4L682.5 175.9M682.5 175.9L684.0 175.1L685.4 174.4M644.9 119.7L651.2 128.5L652.9 137.9M669.3 127.9L662.2 133.0L654.8 138.6M652.9 137.9L654.1 138.1L654.8 138.6M624.8 131.7L632.4 137.6L636.9 144.3M652.9 137.9L643.5 140.1L636.9 144.3M684.2 147.7L676.5 151.8L662.6 154.2M654.8 138.6L659.3 142.5L662.6 154.2M668.2 172.4L674.4 173.3L682.5 175.9M668.2 172.4L664.6 164.2L662.2 155.3M662.2 155.3L662.4 154.7L662.6 154.2M506.5 77.6L509.5 83.1L513.4 89.1M506.5 77.6L497.4 76.3L486.9 76.5M505.2 103.0L498.8 100.2L489.4 99.4M505.2 103.0L506.7 102.8L507.5 102.1M489.4 99.4L486.7 92.7L482.2 85.9M507.5 102.1L510.2 95.0L513.4 89.1M482.2 85.9L483.9 80.9L486.9 76.5M506.5 77.6L507.8 70.2L509.5 64.3M509.5 64.3L504.4 59.9L498.9 53.2M483.4 58.9L483.2 59.1L483.1 59.5M483.1 59.5L483.1 62.2L482.8 64.3M486.9 76.5L486.3 69.4L482.8 64.3M509.5 64.3L519.8 60.2L529.7 58.1M509.9 33.5L506.7 35.1L504.4 36.6M509.9 33.5L511.9 33.7L514.4 33.9M529.7 58.1L523.6 45.3L514.4 33.9M606.7 93.1L599.8 97.7L594.2 100.9M582.2 72.3L580.7 78.6L578.8 86.0M582.2 72.3L591.8 70.9L608.0 75.1M608.5 75.5L608.3 75.3L608.0 75.1M578.8 86.0L585.5 91.3L594.2 100.9M599.6 121.1L594.6 117.9L590.7 113.5M594.2 100.9L592.7 108.1L590.7 113.5M425.0 173.2L426.7 174.2L429.4 175.2M425.0 173.2L423.2 174.1L421.1 175.6M429.4 175.2L430.9 179.1L433.9 183.0M421.1 175.6L418.9 181.8L417.0 188.3M417.0 188.3L418.6 189.2L420.3 190.8M420.3 190.8L425.8 188.3L433.9 183.0M624.9 174.1L628.1 184.8L636.3 197.7M624.9 174.1L627.1 169.0L631.3 164.3M639.6 165.8L636.3 164.8L632.2 163.9M639.6 165.8L646.4 173.4L654.8 185.3M631.3 164.3L631.7 164.2L632.2 163.9M654.8 185.3L654.7 186.4L654.5 188.1M654.5 188.1L647.9 194.9L641.8 198.2M641.8 198.2L639.6 198.7L636.3 197.7M599.5 164.6L603.8 172.0L609.2 180.1M608.3 147.9L618.8 153.1L631.3 164.3M609.2 180.1L618.6 177.8L624.9 174.1M636.9 144.3L635.1 153.0L632.2 163.9M662.2 155.3L650.9 162.4L639.6 165.8M668.2 172.4L661.4 176.1L654.8 185.3M678.1 200.8L676.4 202.2L674.4 202.5M674.4 202.5L668.1 194.4L654.5 188.1M651.6 219.0L659.0 219.1L665.9 221.9M651.6 219.0L648.7 210.3L641.8 198.2M665.9 221.9L669.8 212.2L674.4 202.5M606.4 185.6L612.2 199.6L622.1 206.6M606.4 185.6L601.0 190.2L592.6 192.3M591.1 196.0L592.0 194.3L592.6 192.3M591.1 196.0L597.2 208.4L601.0 219.6M601.0 219.6L610.9 216.8L618.6 215.5M622.1 206.6L620.9 211.2L618.6 215.5M609.2 180.1L608.0 182.7L606.4 185.6M636.3 197.7L628.2 203.3L622.1 206.6M580.8 165.9L577.7 169.8L575.7 170.4M575.7 170.4L580.5 184.5L592.6 192.3M651.6 219.0L643.9 226.2L632.4 232.0M632.4 232.0L623.5 225.0L618.6 215.5M216.1 283.9L217.3 278.1L217.7 272.2M215.5 269.8L216.7 271.1L217.7 272.2M215.5 269.8L210.0 271.0L204.8 273.1M205.3 278.0L204.6 275.5L204.5 273.5M204.8 273.1L204.6 273.3L204.5 273.5M223.7 286.0L225.8 277.6L229.8 272.5M229.8 272.5L224.0 270.5L217.7 272.2M195.3 272.8L194.1 276.4L191.0 278.7M195.3 272.8L200.0 273.0L204.5 273.5M240.4 282.7L239.8 279.5L238.7 275.5M229.8 272.5L230.4 272.3L230.7 271.9M238.7 275.5L232.3 273.8L230.7 271.9M338.5 272.8L338.4 271.7L337.9 270.7M338.5 272.8L336.4 279.0L331.7 283.1M324.2 280.4L326.0 273.7L328.5 268.5M337.9 270.7L333.8 270.0L328.5 268.5M319.6 257.3L323.1 260.4L325.4 261.9M319.6 257.3L319.1 251.8L318.8 246.4M333.8 255.1L328.9 256.8L325.4 261.9M316.1 269.7L316.2 275.2L316.9 279.0M316.1 269.7L321.0 266.0L325.3 263.0M328.5 268.5L326.6 265.5L325.3 263.0M363.1 200.7L360.5 199.6L357.7 199.7M363.1 200.7L366.7 196.8L370.3 192.5M354.5 189.7L357.8 188.2L359.8 186.3M354.5 189.7L353.5 191.5L354.0 193.5M417.4 203.5L415.7 204.6L414.0 205.4M417.4 203.5L418.4 197.7L421.1 193.2M414.0 205.4L412.2 204.5L409.6 203.6M410.9 188.1L413.1 188.2L417.0 188.3M410.9 188.1L410.3 193.1L406.9 198.7M421.1 193.2L420.6 192.2L420.3 190.8M409.6 203.6L408.7 201.0L406.9 198.7M618.7 280.2L611.1 276.9L603.4 273.6M603.4 273.6L597.4 280.4L592.5 285.5M316.7 5.2L313.8 5.7L311.5 7.4M316.7 5.2L317.2 1.4L317.3 -2.6M305.3 -2.1L305.1 1.3L304.8 4.4M304.8 4.4L308.0 5.5L311.5 7.4M320.3 20.4L320.3 20.4L320.4 20.4M320.3 20.4L315.7 18.6L311.8 16.5M316.7 5.2L320.5 7.2L323.9 8.5M311.8 16.5L311.5 11.2L311.5 7.4M420.8 8.2L424.3 7.2L427.3 3.5M420.8 8.2L422.2 14.0L425.3 19.9M427.3 3.5L432.6 8.4L436.2 12.4M425.3 19.9L427.6 20.4L429.6 20.6M429.6 20.6L433.5 18.2L436.1 14.5M436.2 12.4L436.2 13.4L436.1 14.5M427.8 0.8L424.8 -1.3L423.0 -5.4M427.8 0.8L432.6 0.1L438.1 -3.8M427.3 3.5L428.1 2.2L427.8 0.8M441.5 5.4L438.5 9.6L436.2 12.4M441.5 5.4L439.1 0.5L438.1 -3.8M421.7 45.1L421.8 51.7L421.7 58.2M421.7 45.1L428.4 45.9L433.5 46.1M421.7 58.2L428.6 57.0L434.9 54.3M433.5 46.1L434.5 49.7L434.9 54.3M372.4 6.4L374.4 6.5L376.5 6.7M383.4 -4.2L379.7 0.6L376.5 6.7M320.3 20.4L319.3 22.6L319.1 24.9M420.8 8.2L418.3 7.7L414.3 6.6M416.2 -3.6L414.7 1.9L414.3 6.6M394.6 -1.8L398.2 -0.1L401.4 2.0M409.8 -8.9L404.8 -4.1L401.4 2.0M358.8 66.8L357.7 74.1L355.8 80.6M358.8 66.8L363.2 66.1L367.2 65.8M367.2 65.8L368.9 67.7L371.1 70.6M370.2 75.2L370.8 72.1L371.1 70.6M370.2 75.2L365.5 80.1L358.7 83.3M358.7 83.3L356.7 82.1L355.8 80.6M376.3 85.5L372.6 79.6L370.2 75.2M376.3 85.5L377.4 85.9L378.3 85.9M378.3 85.9L382.0 83.7L386.6 80.2M381.1 69.6L376.5 69.3L371.1 70.6M381.1 69.6L384.1 72.6L386.9 75.3M386.9 75.3L387.3 77.4L386.6 80.2M199.6 12.7L200.6 13.1L201.4 13.9M201.4 13.9L206.4 11.5L210.6 9.8M189.8 0.5L193.2 2.8L196.1 3.9M183.2 13.9L184.8 15.3L186.1 16.7M186.1 16.7L193.4 13.8L199.6 12.7M306.1 19.6L308.4 17.5L311.8 16.5M306.1 19.6L306.8 26.3L307.8 30.8M307.8 30.8L307.8 30.8L307.8 30.8M159.4 69.4L160.7 68.4L162.0 67.0M172.3 38.1L172.0 38.0L171.6 37.9M172.3 38.1L173.7 43.2L174.0 49.0M174.0 49.0L172.5 51.1L171.4 52.5M171.4 52.5L167.0 52.5L162.3 51.7M162.3 51.7L160.7 53.2L157.9 54.6M162.0 67.0L165.1 67.6L168.1 67.3M171.4 52.5L171.9 55.7L173.1 58.0M157.9 54.6L157.8 54.9L157.8 55.0M168.1 67.3L171.3 62.0L173.1 58.0M309.0 101.0L314.6 102.4L319.8 101.9M309.0 101.0L309.2 106.2L308.6 113.8M319.8 101.9L321.3 108.6L318.3 117.1M308.6 113.8L311.7 116.9L315.0 120.1M318.3 117.1L316.2 118.3L315.0 120.1M315.0 120.1L315.0 120.1L315.0 120.1M334.5 126.0L330.6 128.0L324.8 130.1M334.5 126.0L332.0 120.1L332.0 115.1M332.0 115.1L324.6 115.6L318.3 117.1M324.8 130.1L321.4 125.6L315.0 120.1M288.5 57.6L287.1 53.5L284.7 46.9M288.5 57.6L292.2 59.6L295.5 61.0M295.5 61.0L298.0 55.7L299.0 51.4M299.0 51.4L301.7 50.3L305.2 49.3M296.7 107.1L299.3 103.2L304.4 100.3M296.7 107.1L297.1 109.6L298.4 113.8M298.4 113.8L302.0 114.9L308.6 113.8M309.0 101.0L308.7 100.7L308.3 100.4M308.3 100.4L306.5 100.6L304.4 100.3M294.5 120.4L294.5 120.9L294.5 121.2M294.5 120.4L290.0 116.7L284.9 113.0M281.2 126.5L287.4 124.0L294.5 121.2M281.2 126.5L278.3 123.8L277.4 120.4M277.4 120.4L281.9 117.6L284.9 113.0M248.6 112.2L251.8 116.2L257.4 120.9M248.6 112.2L253.7 109.6L258.5 106.5M258.5 106.5L261.0 108.1L262.5 108.2M262.5 108.2L263.7 114.1L264.3 118.9M257.4 120.9L261.1 119.0L264.3 118.9M272.7 118.7L272.8 112.8L274.1 107.1M272.7 118.7L269.9 119.9L267.5 120.3M274.1 107.1L271.2 105.1L268.2 105.0M262.5 108.2L265.0 106.9L268.2 105.0M267.5 120.3L265.9 119.6L264.3 118.9M281.2 126.5L280.6 129.6L280.6 132.4M280.6 132.4L280.1 133.0L278.6 133.7M277.4 120.4L275.1 119.1L272.7 118.7M267.5 120.3L266.6 127.0L267.5 131.8M278.6 133.7L272.9 133.7L267.5 131.8M167.4 197.6L165.3 196.5L163.6 195.5M167.4 197.6L168.3 202.2L166.7 206.9M657.9 77.3L660.5 81.6L662.7 83.2M657.9 77.3L658.5 62.9L657.7 56.6M662.7 83.2L668.7 82.8L675.5 81.3M675.5 81.3L679.1 71.2L683.0 60.0M683.0 60.0L678.2 54.5L674.8 49.9M674.8 49.9L669.4 50.2L663.8 49.9M663.8 49.9L661.0 54.2L657.7 56.6M630.9 74.8L644.7 77.0L657.9 77.3M661.6 86.3L661.9 84.7L662.7 83.2M689.1 89.3L682.1 86.7L675.5 81.3M696.0 60.5L688.7 60.4L683.0 60.0M685.5 33.5L682.4 43.0L674.8 49.9M670.9 19.8L661.1 26.3L655.5 33.5M655.5 33.5L661.1 42.9L663.8 49.9M655.5 33.5L646.6 32.3L640.3 28.7M657.7 56.6L644.3 54.6L636.5 54.5M640.3 28.7L641.3 43.7L636.5 54.5M607.4 54.4L608.8 64.1L608.0 75.1M607.4 54.4L611.4 50.7L616.6 47.7M630.2 74.1L633.3 64.7L633.7 56.6M616.6 47.7L624.9 52.3L633.7 56.6M633.7 56.6L635.0 55.9L636.5 54.5M500.4 0.1L500.7 2.7L501.2 4.3M501.2 4.3L494.2 9.4L483.5 16.5M474.4 3.9L476.5 9.8L480.5 15.3M474.4 3.9L475.9 -0.8L475.5 -5.9M483.5 16.5L482.4 16.1L481.2 15.9M481.2 15.9L480.8 15.6L480.5 15.3M509.9 33.5L506.2 19.2L502.7 5.6M502.7 5.6L502.0 4.7L501.2 4.3M488.8 31.3L485.0 22.2L483.5 16.5M481.2 15.9L474.6 22.2L469.7 27.9M480.5 15.3L472.6 15.3L465.7 16.2M465.7 16.2L464.9 20.6L462.8 23.2M462.8 23.2L465.6 25.7L469.7 27.9M478.1 39.0L475.4 35.7L470.6 33.2M469.7 27.9L470.2 31.1L470.6 33.2M440.3 166.0L435.5 168.9L429.4 175.2M440.3 166.0L442.2 166.5L444.6 167.0M444.6 167.0L445.1 171.2L446.2 175.0M433.9 183.0L435.0 183.7L435.8 184.0M446.2 175.0L441.2 179.0L435.8 184.0M495.1 160.7L489.9 153.7L485.8 148.7M495.1 160.7L491.1 164.7L485.1 166.2M485.8 148.7L484.2 155.0L479.9 159.3M479.9 159.3L482.8 162.2L485.1 166.2M582.2 72.3L581.8 71.8L581.4 71.1M607.4 54.4L599.8 49.0L589.5 45.7M589.5 45.7L587.1 46.0L585.6 46.4M581.4 71.1L586.2 57.9L585.6 46.4M513.4 89.1L524.2 86.5L531.7 84.5M529.7 58.1L530.8 58.3L532.0 58.9M532.0 58.9L530.7 70.1L531.7 84.5M507.5 102.1L517.2 109.7L527.5 118.7M527.5 118.7L530.1 114.7L537.0 111.9M537.0 111.9L540.2 100.6L541.2 90.4M531.7 84.5L537.7 87.5L541.2 90.4M578.8 86.0L569.4 91.7L564.0 95.8M564.0 95.8L557.4 92.4L551.1 88.4M581.4 71.1L570.1 71.1L558.2 65.8M558.2 65.8L556.9 81.3L551.1 88.4M577.7 117.1L572.0 114.9L566.7 111.6M577.7 117.1L574.8 125.5L575.9 138.1M566.7 111.6L562.0 116.0L556.0 118.3M575.9 138.1L567.7 140.4L559.7 143.3M553.2 137.4L555.8 139.3L559.2 143.1M559.7 143.3L559.4 143.2L559.2 143.1M590.7 113.5L584.3 116.2L577.7 117.1M564.0 95.8L566.9 103.7L566.7 111.6M583.8 143.5L579.4 140.4L575.9 138.1M537.0 111.9L545.3 113.7L556.0 118.3M551.1 88.4L546.3 89.2L541.2 90.4M527.5 118.7L527.4 119.9L527.2 120.8M542.0 137.8L548.0 138.1L553.2 137.4M421.1 193.2L427.0 195.6L431.1 198.3M435.8 184.0L436.6 186.1L438.6 189.2M431.1 198.3L433.6 193.1L438.6 189.2M425.0 173.2L423.5 168.1L423.0 162.0M370.3 192.5L372.0 194.3L374.0 194.8M370.7 169.4L370.6 172.0L370.4 173.9M370.7 169.4L376.1 167.7L382.0 165.3M382.0 165.3L382.0 170.2L385.4 174.9M359.8 186.3L359.8 182.0L359.6 176.9M359.6 176.9L365.1 174.2L370.4 173.9M430.2 134.8L433.7 136.4L435.4 137.9M559.2 143.1L552.7 153.1L546.5 156.6M472.2 218.0L473.1 220.4L475.7 223.5M472.2 218.0L466.6 221.1L461.8 223.9M461.8 223.9L462.3 228.0L463.1 231.9M466.1 233.8L464.8 232.8L463.1 231.9M466.1 233.8L470.9 229.4L475.0 227.5M475.0 227.5L475.5 225.4L475.7 223.5M591.1 196.0L583.5 197.1L573.2 202.7M601.0 219.6L599.4 221.1L598.6 222.8M573.2 202.7L573.2 210.9L570.1 218.1M598.6 222.8L583.2 227.4L571.9 223.5M570.1 218.1L570.3 221.2L571.9 223.5M567.8 197.6L560.0 198.1L552.6 199.9M567.8 197.6L566.9 192.1L565.9 185.2M565.9 185.2L557.7 185.5L551.5 187.5M573.2 202.7L570.7 200.4L567.8 197.6M551.6 211.9L559.1 215.7L570.1 218.1M550.0 175.0L559.6 177.7L569.0 176.6M564.8 160.8L570.4 166.2L575.1 170.4M575.1 170.4L572.0 173.9L569.0 176.6M565.9 185.2L567.7 181.3L569.0 176.6M559.7 143.3L562.0 151.2L564.8 160.8M575.7 170.4L575.4 170.4L575.1 170.4M517.4 164.9L521.6 160.8L524.2 157.7M517.4 164.9L520.0 169.5L521.2 173.6M521.2 173.6L526.6 173.3L531.6 172.4M665.3 258.8L660.0 252.4L654.9 249.1M665.3 258.8L671.9 257.2L679.9 255.6M654.9 249.1L661.4 239.6L669.3 228.2M683.1 245.8L682.9 251.2L679.9 255.6M683.1 245.8L676.8 236.5L673.8 230.3M673.8 230.3L671.6 229.0L669.3 228.2M688.6 269.1L685.5 262.3L679.9 255.6M662.2 279.9L664.4 268.9L665.3 258.8M702.8 244.0L694.2 244.8L683.1 245.8M699.2 222.1L686.3 225.1L673.8 230.3M665.9 221.9L667.0 224.9L669.3 228.2M653.2 249.3L645.8 255.8L641.1 264.7M653.2 249.3L642.1 242.2L632.3 233.9M622.2 247.6L627.4 240.8L632.3 233.9M622.2 247.6L627.3 258.2L631.3 263.9M631.3 263.9L637.1 264.3L641.1 264.7M651.5 279.1L649.1 271.1L641.1 264.7M654.9 249.1L654.1 249.1L653.2 249.3M632.4 232.0L632.5 232.9L632.3 233.9M619.9 279.9L625.6 274.3L631.3 263.9M155.4 279.3L153.2 276.3L152.0 271.9M166.5 270.9L162.7 269.6L159.9 265.6M166.5 270.9L166.5 272.0L166.7 273.3M166.7 273.3L164.1 276.2L162.5 278.9M159.9 265.6L155.2 268.6L152.0 271.9M138.2 280.7L141.3 275.5L145.3 269.8M145.3 269.8L148.6 271.5L152.0 271.9M181.5 272.0L185.4 275.9L188.8 278.9M181.5 272.0L178.0 275.2L175.4 278.3M166.7 273.3L170.0 275.2L175.4 278.3M278.5 278.8L274.8 273.6L273.8 269.3M265.0 279.1L267.4 274.5L268.8 269.5M268.8 269.5L271.2 269.1L273.8 269.3M319.6 257.3L314.3 259.0L309.6 260.1M316.1 269.7L312.4 267.2L307.7 263.7M325.4 261.9L325.3 262.4L325.3 263.0M309.6 260.1L308.0 262.1L307.7 263.7M303.7 278.4L303.9 272.7L302.9 265.8M307.7 263.7L305.1 264.9L302.9 265.8M289.4 277.7L288.3 271.3L289.4 267.1M289.4 267.1L294.3 265.9L300.4 264.8M300.4 264.8L301.6 264.7L302.9 265.8M167.4 197.6L171.7 197.2L174.4 196.3M174.4 196.3L176.0 197.0L177.6 197.6M177.6 197.6L178.8 200.2L180.5 202.3M180.5 202.3L179.9 206.3L173.9 212.8M409.6 203.6L404.6 206.4L399.9 210.9M323.4 136.4L331.9 139.5L335.8 142.0M323.4 136.4L323.5 133.2L324.8 130.1M338.1 128.1L339.0 134.6L340.0 140.0M338.1 128.1L336.1 127.2L334.5 126.0M340.0 140.0L338.1 140.9L335.8 142.0M354.7 135.7L348.6 137.8L340.5 140.2M354.7 135.7L354.5 141.9L355.1 149.3M355.1 149.3L351.1 149.6L346.3 149.7M340.5 140.2L343.6 144.5L346.3 149.7M340.0 140.0L340.2 140.0L340.5 140.2M335.8 142.0L332.5 145.4L331.4 149.9M331.4 149.9L334.3 153.6L338.2 155.9M346.3 149.7L345.2 151.7L344.0 154.4M338.2 155.9L341.0 155.1L344.0 154.4M350.4 174.1L353.4 173.6L355.8 173.4M350.4 174.1L347.7 169.6L345.8 165.7M355.8 173.4L356.6 169.2L359.3 164.3M345.8 165.7L347.3 163.2L348.1 161.8M348.1 161.8L351.6 161.4L355.7 160.6M355.7 160.6L357.5 162.5L359.3 164.3M354.5 189.7L349.2 185.1L346.1 183.5M359.6 176.9L357.3 175.0L355.8 173.4M345.5 180.0L349.1 177.3L350.4 174.1M366.8 163.8L363.9 164.9L359.3 164.3M366.8 163.8L369.1 166.4L370.7 169.4M344.0 154.4L347.0 159.0L348.1 161.8M357.1 150.7L356.1 156.6L355.7 160.6M357.1 150.7L356.3 150.1L355.1 149.3M601.2 266.5L592.8 262.5L578.7 260.9M601.2 266.5L605.7 256.7L607.8 249.1M607.8 249.1L604.0 244.8L599.9 240.6M599.9 240.6L592.2 243.5L581.6 246.6M578.7 260.9L581.3 253.7L581.6 246.6M603.4 273.6L603.0 270.1L601.2 266.5M622.2 247.6L614.0 247.3L607.8 249.1M598.6 222.8L597.6 232.2L599.9 240.6M355.0 135.2L353.5 130.8L352.6 126.3M355.0 135.2L359.8 135.6L366.2 136.0M368.5 133.5L367.3 134.7L366.2 136.0M368.5 133.5L367.2 129.1L367.5 126.2M367.5 126.2L363.4 122.4L358.7 119.9M358.7 119.9L355.5 123.1L352.6 126.3M355.0 135.2L354.9 135.5L354.7 135.7M338.1 128.1L341.6 126.7L345.8 124.5M345.8 124.5L349.8 125.5L352.6 126.3M333.9 111.6L339.0 111.5L344.8 110.9M333.9 111.6L333.2 113.6L332.0 115.1M345.8 124.5L346.9 116.6L344.8 110.9M376.8 108.8L379.7 108.3L383.6 107.0M376.8 108.8L375.7 113.1L374.4 116.8M379.7 120.7L383.3 117.7L388.7 113.3M379.7 120.7L377.7 119.3L375.1 118.4M388.7 113.3L385.7 110.4L383.6 107.0M375.1 118.4L374.8 117.7L374.4 116.8M369.5 101.1L372.7 102.7L376.8 108.8M369.5 101.1L374.1 98.1L382.3 96.2M382.3 96.2L384.0 97.3L385.7 98.1M385.7 98.1L384.4 101.9L383.6 107.0M391.6 113.8L393.8 116.4L395.1 117.6M391.6 113.8L390.6 113.1L388.7 113.3M394.7 124.0L395.4 120.1L395.1 117.6M394.7 124.0L391.7 125.9L387.7 128.3M382.3 126.8L384.7 127.5L387.7 128.3M382.3 126.8L380.7 124.0L379.7 120.7M368.5 133.5L372.7 134.7L376.1 133.6M367.5 126.2L371.0 121.6L375.1 118.4M376.1 133.6L379.2 129.9L382.3 126.8M391.6 113.8L393.2 109.5L396.0 105.0M385.7 98.1L387.2 97.4L390.1 97.0M390.1 97.0L393.8 101.2L396.0 105.0M421.6 58.4L416.9 58.0L412.7 58.4M421.6 58.4L422.7 61.6L423.5 64.4M423.5 64.4L419.1 68.6L416.1 73.7M412.7 58.4L411.9 63.9L407.9 67.6M407.9 67.6L410.5 69.7L413.0 73.6M413.0 73.6L414.7 73.5L416.1 73.7M477.1 46.2L470.5 46.9L465.0 47.4M483.1 59.5L474.1 60.3L461.0 59.6M461.0 59.6L460.2 58.4L459.9 56.9M459.9 56.9L462.4 53.9L465.0 47.4M470.6 33.2L464.6 35.7L457.4 38.4M465.0 47.4L460.4 43.0L457.4 38.4M329.4 47.2L333.2 46.5L336.6 43.9M414.3 6.6L413.1 7.5L412.1 7.6M401.4 2.0L401.6 2.8L402.1 3.4M412.1 7.6L407.4 6.5L402.1 3.4M337.5 57.9L338.3 60.3L339.4 62.9M337.5 57.9L341.5 55.0L343.9 50.7M339.4 62.9L343.5 64.3L349.1 65.2M343.9 50.7L344.4 50.8L344.9 50.6M344.9 50.6L347.8 56.0L352.6 58.7M352.6 58.7L352.6 61.3L352.6 63.3M352.6 63.3L350.9 64.3L349.1 65.2M328.0 55.2L328.0 51.1L329.4 47.2M328.0 55.2L334.1 56.4L337.5 57.9M336.6 43.9L339.3 47.5L343.9 50.7M360.4 51.2L360.2 50.2L360.4 49.0M360.4 51.2L357.8 55.6L352.6 58.7M360.4 49.0L353.5 46.6L350.3 44.2M350.3 44.2L347.1 48.1L344.9 50.6M358.8 66.8L355.2 65.3L352.6 63.3M367.2 65.8L368.0 62.8L368.6 60.0M368.6 60.0L364.3 56.6L360.4 51.2M376.3 85.5L373.6 87.4L369.8 89.5M358.7 83.3L358.7 83.6L358.8 83.9M369.8 89.5L365.3 86.8L358.8 83.9M378.3 85.9L381.1 89.8L382.3 96.2M369.5 101.1L368.9 101.0L368.1 100.8M369.8 89.5L367.8 93.6L368.1 100.8M334.1 71.8L336.6 67.0L339.4 62.9M334.1 71.8L334.5 73.1L335.2 74.5M349.1 65.2L348.2 69.9L346.1 75.5M335.2 74.5L340.8 75.7L346.1 75.5M355.8 80.6L353.0 80.3L349.2 79.4M346.1 75.5L347.3 77.8L349.2 79.4M186.1 16.7L187.9 22.1L187.1 25.5M172.3 38.1L174.1 37.1L175.5 36.2M223.7 119.2L219.6 122.1L212.9 123.0M223.7 119.2L226.4 121.5L230.7 125.5M212.9 123.0L212.2 124.5L212.4 126.0M212.4 126.0L217.1 130.2L224.7 133.2M224.7 133.2L227.9 129.2L230.7 125.5M223.7 119.2L224.8 116.1L224.8 112.9M236.1 116.0L233.8 121.3L231.2 125.4M236.1 116.0L233.0 113.2L229.8 110.4M229.8 110.4L227.1 112.1L224.8 112.9M230.7 125.5L231.0 125.4L231.2 125.4M208.2 154.0L209.0 154.1L209.9 153.9M210.4 137.4L213.4 139.8L217.1 142.3M209.9 153.9L212.4 148.1L217.1 142.3M224.7 133.2L224.8 133.9L224.8 134.7M224.8 134.7L222.2 139.2L219.2 142.0M217.1 142.3L218.2 142.2L219.2 142.0M278.6 133.7L277.9 139.8L275.1 144.8M267.5 131.8L266.3 133.1L264.9 134.0M264.9 134.0L265.7 137.4L266.1 141.3M266.1 141.3L271.2 142.9L275.1 144.8M244.7 152.4L246.5 146.8L250.5 141.7M250.5 141.7L255.7 143.7L260.0 147.7M260.0 147.7L261.2 151.1L262.0 155.2M195.3 272.8L194.3 269.2L192.0 265.1M192.0 265.1L193.3 263.6L195.7 261.9M204.8 273.1L204.8 267.4L203.6 263.1M203.6 263.1L199.8 261.9L195.7 261.9M180.5 229.9L186.0 227.5L192.3 228.3M180.5 229.9L180.1 235.1L180.7 240.3M180.7 240.3L183.6 241.1L186.2 243.1M186.2 243.1L189.1 240.0L192.7 238.0M192.7 238.0L193.2 232.8L193.0 228.7M192.3 228.3L192.6 228.5L193.0 228.7M168.1 67.3L170.5 69.8L174.3 73.8M194.0 86.7L193.9 86.4L194.0 86.2M173.1 58.0L177.3 58.9L182.3 61.1M180.5 229.9L180.2 229.6L179.9 229.3M173.9 243.2L177.0 242.2L180.7 240.3M173.9 243.2L172.4 241.5L169.7 240.3M168.5 228.8L168.8 234.9L169.7 240.3M159.2 247.8L160.6 245.0L161.8 241.6M179.9 229.3L180.1 223.4L180.3 218.2M169.7 240.3L166.5 240.8L161.8 241.6M640.3 28.7L640.1 28.5L640.0 28.3M616.6 47.7L616.9 40.3L617.5 31.8M640.0 28.3L625.8 26.6L617.5 31.8M563.9 0.2L553.1 -4.6L544.6 -9.8M563.9 0.2L561.5 5.0L559.9 8.1M559.9 8.1L543.1 9.9L533.5 14.5M531.1 -1.4L531.4 2.4L529.7 7.0M529.7 7.0L532.0 10.4L533.5 14.5M567.1 -1.8L565.7 -1.1L563.9 0.2M502.7 5.6L514.3 7.4L529.7 7.0M514.4 33.9L524.8 30.5L532.2 23.0M532.2 23.0L533.0 18.6L533.5 14.5M474.4 3.9L470.0 6.5L463.3 7.4M465.7 16.2L464.0 13.7L462.3 10.7M463.3 7.4L462.5 9.0L462.3 10.7M451.9 15.9L452.2 14.8L452.6 14.0M451.9 15.9L455.0 21.2L458.8 24.1M458.8 24.1L461.0 23.5L462.8 23.2M462.3 10.7L457.2 11.1L452.6 14.0M441.5 5.4L445.2 5.4L449.4 5.9M436.1 14.5L441.3 17.2L445.7 19.2M445.7 19.2L448.6 18.4L451.9 15.9M449.4 5.9L451.0 10.9L452.6 14.0M423.5 64.4L426.5 67.0L430.7 69.3M416.1 73.7L420.4 77.3L424.2 81.4M430.7 69.3L425.4 74.6L424.2 81.4M421.7 58.2L421.6 58.3L421.6 58.4M434.9 54.3L436.9 55.7L439.3 57.5M439.3 57.5L434.1 62.3L431.9 69.2M430.7 69.3L431.3 69.1L431.9 69.2M485.8 148.7L485.2 145.9L485.3 144.2M479.1 139.8L482.3 142.1L485.3 144.2M479.1 139.8L475.2 144.0L470.7 148.0M446.2 175.0L449.4 177.0L452.0 179.1M441.3 190.5L440.0 189.6L438.6 189.2M441.3 190.5L444.4 189.7L448.6 188.7M452.0 179.1L449.7 184.4L448.6 188.7M485.1 166.2L485.1 168.8L483.8 171.0M475.5 173.9L480.6 172.7L483.8 171.0M495.1 160.7L496.4 161.0L497.3 161.1M497.3 161.1L499.0 163.8L501.2 165.4M493.8 176.8L498.1 169.5L501.2 165.4M493.8 176.8L492.3 176.8L491.1 177.6M483.8 171.0L486.5 174.9L491.1 177.6M533.1 58.5L542.4 61.4L557.7 65.0M533.1 58.5L538.0 49.2L546.2 36.2M557.7 65.0L561.4 57.1L561.9 47.6M561.9 47.6L558.5 42.4L552.9 36.2M552.9 36.2L550.0 35.8L546.2 36.2M532.0 58.9L532.6 58.7L533.1 58.5M558.2 65.8L558.0 65.5L557.7 65.0M532.2 23.0L537.7 31.2L546.2 36.2M583.4 44.9L584.5 45.6L585.6 46.4M583.4 44.9L570.5 46.2L561.9 47.6M563.0 24.1L556.9 29.8L552.9 36.2M563.0 24.1L571.0 25.4L577.4 28.1M577.4 28.1L580.4 35.8L583.4 44.9M563.0 24.1L559.9 15.7L559.9 8.1M456.6 195.6L454.4 198.3L451.4 201.5M456.6 195.6L456.5 194.6L456.5 194.0M441.3 190.5L442.9 195.1L444.1 199.3M456.5 194.0L453.0 190.9L448.6 188.7M451.4 201.5L447.3 200.7L444.1 199.3M421.1 175.6L414.7 173.6L408.7 172.8M410.9 188.1L409.9 187.4L409.4 186.8M409.4 186.8L408.0 180.7L406.5 176.2M385.4 174.9L390.2 172.9L394.4 171.4M399.1 176.8L396.5 181.3L394.0 184.8M409.4 186.8L402.9 187.6L396.9 188.8M396.9 188.8L395.5 186.8L394.0 184.8M357.1 150.7L361.6 150.2L364.9 149.5M366.8 163.8L368.0 160.4L369.3 157.7M369.3 157.7L366.8 153.3L364.9 149.5M366.2 136.0L367.1 141.3L367.5 145.5M364.9 149.5L366.6 148.0L367.5 145.5M441.3 124.2L438.4 122.2L435.5 120.9M430.2 134.8L429.5 131.1L428.3 127.2M435.4 137.9L438.0 136.1L441.3 134.8M428.3 127.2L431.8 125.1L435.5 120.9M441.3 124.2L443.1 124.1L445.5 122.5M444.2 109.0L440.1 111.6L433.8 115.1M444.2 109.0L445.5 112.2L448.3 114.3M448.3 114.3L447.4 118.2L445.5 122.5M435.5 120.9L434.6 118.2L433.8 115.1M444.2 109.0L444.5 106.3L444.9 103.1M444.9 103.1L438.7 101.0L431.2 99.8M431.2 99.8L430.0 106.0L428.3 110.8M433.8 115.1L430.5 113.9L428.3 110.8M413.2 119.6L416.8 119.8L419.6 121.6M413.2 119.6L411.4 120.4L409.6 121.3M409.6 121.3L408.6 125.2L406.5 128.2M419.6 121.6L420.2 123.9L421.4 125.1M402.3 129.9L404.9 129.2L406.5 128.2M402.3 129.9L398.6 128.2L394.7 124.0M402.4 115.4L398.9 115.9L395.1 117.6M402.4 115.4L405.5 118.9L409.6 121.3M428.3 127.2L425.5 126.9L421.4 125.1M426.8 111.3L427.5 111.0L428.3 110.8M426.8 111.3L422.4 115.8L419.6 121.6M402.3 129.9L400.4 134.7L399.5 139.8M468.0 241.3L467.1 238.5L466.1 233.8M468.0 241.3L474.2 241.1L480.6 239.8M475.0 227.5L478.2 232.1L481.2 236.7M480.6 239.8L480.9 238.1L481.2 236.7M470.1 252.3L467.3 248.5L466.2 244.4M470.1 252.3L478.0 252.4L483.0 251.5M468.0 241.3L467.4 242.8L466.2 244.4M480.6 239.8L482.0 243.3L485.5 248.1M483.0 251.5L484.6 249.8L485.5 248.1M511.7 152.7L507.3 151.1L502.7 149.7M511.7 152.7L514.9 151.1L520.3 146.0M516.1 133.9L510.5 133.8L504.7 133.6M504.7 133.6L501.9 136.5L499.2 141.1M499.2 141.1L501.3 144.4L502.7 149.7M511.5 162.4L512.6 158.3L511.7 152.7M511.5 162.4L506.5 164.4L502.9 165.8M497.3 161.1L499.7 155.5L502.7 149.7M501.2 165.4L502.0 165.8L502.9 165.8M511.5 162.4L514.4 164.0L517.4 164.9M527.2 120.8L522.1 128.0L516.1 133.9M505.2 103.0L500.6 112.5L497.8 122.8M497.8 122.8L498.8 127.4L504.7 133.6M485.3 144.2L492.4 141.4L499.2 141.1M533.6 245.3L531.4 254.1L530.3 257.7M533.6 245.3L528.8 245.0L523.9 243.4M523.9 243.4L521.7 244.3L519.3 245.6M519.3 245.6L517.7 252.9L522.2 259.9M496.6 206.6L491.3 202.8L483.8 200.7M496.6 206.6L499.3 201.9L500.5 195.1M483.8 200.7L487.0 194.4L492.4 191.0M500.5 195.1L499.9 193.9L499.5 192.6M511.7 206.4L512.1 204.3L513.9 201.4M511.7 206.4L506.1 207.5L498.2 210.3M513.9 201.4L513.6 200.8L513.4 200.2M498.2 210.3L497.3 208.2L496.6 206.6M477.5 197.9L475.8 198.5L473.2 198.5M477.5 197.9L480.5 199.4L483.4 200.7M483.4 200.7L483.8 206.4L482.2 211.1M473.2 198.5L470.8 200.9L467.8 203.2M482.2 211.1L476.6 214.5L472.2 216.2M467.8 203.2L467.6 205.5L466.8 208.3M466.8 208.3L468.8 212.0L472.2 216.2M480.6 185.8L483.7 184.2L488.4 184.4M480.6 185.8L477.8 193.7L477.5 197.9M488.4 184.4L490.5 187.8L492.4 191.0M483.8 200.7L483.6 200.7L483.4 200.7M456.6 195.6L462.0 198.2L467.8 203.2M457.0 211.7L454.7 210.1L452.2 208.5M457.0 211.7L462.2 211.1L466.8 208.3M451.4 201.5L451.6 204.6L452.2 208.5M455.5 220.8L455.8 216.2L457.0 211.7M455.5 220.8L458.0 222.5L461.8 223.9M472.2 218.0L472.0 217.2L472.2 216.2M503.8 182.8L504.2 184.5L504.1 185.6M504.1 185.6L511.0 185.9L515.9 189.3M508.3 176.5L513.6 176.9L519.3 176.5M519.3 176.5L519.3 181.0L519.7 186.4M519.7 186.4L518.3 188.2L515.9 189.3M493.8 176.8L499.2 179.1L503.8 182.8M502.9 165.8L505.5 170.9L508.3 176.5M491.1 177.6L490.4 181.5L488.4 184.4M499.5 192.6L501.5 189.3L504.1 185.6M513.4 200.2L513.9 193.7L515.9 189.3M521.2 173.6L520.3 175.1L519.3 176.5M527.7 190.0L524.5 188.4L519.7 186.4M513.9 201.4L517.7 203.3L523.7 202.8M523.7 202.8L526.2 199.5L529.6 196.5M551.6 211.9L549.1 214.1L546.3 215.2M538.1 199.7L535.6 205.9L537.4 211.3M546.3 215.2L542.4 215.2L537.4 211.3M523.7 202.8L526.9 209.8L528.6 215.0M537.4 211.3L532.7 212.9L528.6 215.0M168.1 254.7L161.9 259.1L159.7 262.5M168.1 254.7L163.3 250.9L159.2 247.8M159.7 262.5L159.7 263.9L159.9 265.6M169.0 254.7L170.3 261.3L173.4 265.3M169.0 254.7L170.7 253.6L172.1 252.3M172.1 252.3L177.5 253.0L183.2 255.7M183.2 255.7L184.0 259.9L184.2 264.4M173.4 265.3L177.1 265.6L181.5 267.0M181.5 267.0L183.2 265.6L184.2 264.4M166.5 270.9L169.7 268.4L173.4 265.3M168.1 254.7L168.6 254.6L169.0 254.7M173.9 243.2L173.6 246.8L172.1 252.3M188.2 249.8L187.2 246.1L186.2 243.1M188.2 249.8L185.9 254.1L183.2 255.7M192.0 265.1L187.0 265.4L184.2 264.4M188.2 249.8L192.3 249.8L195.1 251.9M195.1 251.9L194.6 257.0L195.7 261.9M181.5 272.0L181.2 269.6L181.5 267.0M236.0 259.7L233.7 264.3L230.4 268.5M236.0 259.7L233.5 255.9L231.5 253.5M230.4 268.5L227.4 262.6L220.4 258.2M220.4 258.2L222.5 256.0L225.8 253.6M231.5 253.5L228.8 253.2L225.8 253.6M243.5 259.8L239.0 260.5L236.0 259.7M243.5 259.8L245.4 256.5L244.5 249.2M244.5 249.2L239.9 249.4L235.1 248.6M231.5 253.5L233.9 251.0L235.1 248.6M253.7 273.5L256.3 271.0L258.7 266.9M253.7 273.5L248.9 272.8L244.5 270.8M258.7 266.9L254.6 263.4L252.2 260.6M244.5 270.8L244.7 266.6L245.2 261.5M245.2 261.5L248.9 260.6L252.2 260.6M255.7 280.2L253.2 278.1L253.7 273.5M264.2 266.1L261.2 266.4L258.7 266.9M264.2 266.1L266.7 268.1L268.8 269.5M238.7 275.5L242.1 273.1L244.5 270.8M264.2 266.1L263.9 262.3L264.8 258.4M264.8 258.4L261.5 255.1L257.2 251.4M257.1 251.4L255.6 257.1L252.2 260.6M257.1 251.4L257.2 251.4L257.2 251.4M243.5 259.8L244.6 260.7L245.2 261.5M230.7 271.9L230.8 270.1L230.4 268.5M318.8 246.4L315.0 246.4L311.6 245.4M309.6 260.1L307.2 254.7L307.3 248.6M311.6 245.4L309.8 247.1L307.3 248.6M289.4 267.1L287.4 265.5L285.2 263.8M273.8 269.3L276.8 267.3L279.4 264.1M279.4 264.1L283.0 263.7L285.2 263.8M264.8 258.4L269.5 256.4L273.6 252.7M279.4 264.1L276.6 259.5L273.6 252.7M257.2 251.4L264.6 247.6L269.8 243.6M269.8 243.6L271.4 246.7L273.8 251.3M273.6 252.7L273.7 252.0L273.8 251.3M381.1 266.0L379.0 270.6L377.3 273.9M381.1 266.0L380.9 264.4L380.1 261.3M380.1 261.3L373.6 260.8L369.5 261.7M369.5 261.7L367.5 265.2L366.2 271.7M377.3 273.9L371.3 271.6L366.2 271.7M392.3 272.2L390.6 276.2L386.3 281.1M392.3 272.2L393.7 271.8L394.8 271.4M402.9 278.5L398.0 275.0L394.8 271.4M381.1 266.0L386.9 269.4L392.3 272.2M377.3 273.9L378.6 275.0L378.7 278.3M272.3 179.2L273.6 177.7L274.1 175.8M396.1 210.3L395.4 203.2L397.0 197.6M386.5 197.4L392.4 197.1L395.7 196.0M397.0 197.6L396.6 196.9L395.7 196.0M406.9 198.7L401.9 198.6L397.0 197.6M396.9 188.8L395.4 192.5L395.7 196.0M358.7 119.9L358.8 117.7L359.0 115.1M374.4 116.8L369.2 114.8L363.1 112.3M363.1 112.3L360.9 113.3L359.0 115.1M368.1 100.8L367.6 101.1L366.8 101.3M363.1 112.3L364.7 108.2L366.8 101.3M344.8 110.9L346.3 108.9L348.4 108.3M359.0 115.1L354.6 111.1L348.4 108.3M440.0 41.2L442.6 35.3L444.8 30.0M440.0 41.2L445.3 44.2L449.2 46.9M449.2 46.9L453.7 43.0L456.7 38.2M445.2 29.8L445.0 29.9L444.8 30.0M445.2 29.8L449.4 30.7L454.0 32.8M454.0 32.8L455.5 35.0L456.7 38.2M430.3 33.7L431.1 30.1L432.6 27.8M430.3 33.7L432.1 38.0L436.1 42.0M432.6 27.8L440.8 29.4L444.8 30.0M436.1 42.0L437.6 41.6L440.0 41.2M433.5 46.1L434.8 44.1L436.1 42.0M442.4 57.7L440.6 57.8L439.3 57.5M442.4 57.7L444.2 54.6L449.3 51.3M449.3 51.3L449.1 48.8L449.2 46.9M449.3 51.3L453.9 52.7L459.9 56.9M457.4 38.4L457.1 38.4L456.7 38.2M429.6 20.6L430.5 24.0L432.6 27.8M445.7 19.2L446.1 24.0L445.2 29.8M458.8 24.1L456.6 27.7L454.0 32.8M391.8 -1.1L389.7 5.7L386.3 12.2M376.5 6.7L379.5 10.7L383.3 12.8M383.3 12.8L384.8 12.9L386.3 12.2M402.1 3.4L399.5 10.7L396.3 16.4M386.3 12.2L392.6 13.8L396.3 16.4M398.4 68.2L402.7 67.1L407.9 67.6M398.4 68.2L398.1 67.2L397.6 66.0M397.6 66.0L399.1 59.6L401.5 53.8M412.7 58.4L410.1 56.4L408.0 53.1M408.0 53.1L405.2 53.7L401.5 53.8M408.0 53.1L409.2 49.9L409.9 47.0M401.5 53.8L397.6 51.2L395.7 49.6M395.7 49.6L395.3 46.8L395.5 44.2M395.5 44.2L399.0 41.1L404.0 39.3M404.0 39.3L406.2 43.7L409.9 47.0M421.7 45.1L421.1 44.3L420.0 42.7M409.9 47.0L414.6 45.4L420.0 42.7M430.3 33.7L425.1 38.2L420.1 37.5M420.0 42.7L420.1 40.4L420.1 37.5M325.4 57.0L319.9 56.1L315.6 54.9M325.4 57.0L325.0 61.6L325.7 67.6M325.7 67.6L321.2 70.1L318.5 72.2M309.8 62.4L312.1 58.9L313.1 55.9M309.8 62.4L313.4 68.1L317.3 71.9M318.5 72.2L317.9 72.2L317.3 71.9M313.1 55.9L314.7 55.6L315.6 54.9M328.0 55.2L326.4 55.9L325.4 57.0M334.1 71.8L330.7 70.4L325.7 67.6M295.5 61.0L296.0 61.5L296.1 62.2M305.2 49.3L310.1 53.0L313.1 55.9M303.4 64.8L300.0 63.4L296.1 62.2M303.4 64.8L306.8 63.8L309.8 62.4M303.5 75.0L302.4 70.4L303.4 64.8M303.5 75.0L305.3 75.8L307.9 78.0M307.9 78.0L310.8 75.0L317.3 71.9M316.2 86.7L318.0 83.2L321.0 79.5M316.2 86.7L313.1 86.4L310.5 87.0M309.2 86.0L309.7 86.7L310.5 87.0M309.2 86.0L308.6 80.6L307.9 78.0M321.0 79.5L320.5 75.6L318.5 72.2M350.3 44.2L349.9 42.0L350.0 39.4M365.7 43.3L363.1 46.1L360.4 49.0M365.7 43.3L362.6 39.4L360.3 34.9M350.0 39.4L355.7 36.7L360.3 34.9M335.2 74.5L334.1 76.6L333.8 78.5M321.0 79.5L325.1 80.6L328.8 81.6M328.8 81.6L330.8 80.7L333.8 78.5M349.2 79.4L346.2 85.3L341.5 89.8M333.8 78.5L337.9 83.8L341.5 89.8M297.2 16.1L297.5 11.4L298.1 8.3M298.1 8.3L295.6 6.9L293.4 4.5M306.1 19.6L303.5 18.3L297.2 16.1M304.8 4.4L301.8 6.0L298.1 8.3M293.3 -8.2L292.8 -1.0L293.4 4.5M273.2 33.9L274.7 31.2L275.0 27.3M273.2 33.9L277.6 37.0L282.0 38.8M288.1 30.3L282.4 27.6L277.9 25.6M275.0 27.3L276.3 26.2L277.9 25.6M284.7 46.9L284.1 46.6L283.6 46.4M280.3 16.8L279.5 21.7L277.9 25.6M280.3 16.8L281.6 16.0L282.4 15.3M269.3 14.4L275.4 15.9L280.3 16.8M201.4 13.9L199.8 19.5L202.5 23.6M187.1 25.5L189.9 27.3L192.3 29.8M240.6 136.7L240.4 133.1L239.0 129.4M240.6 136.7L245.5 138.1L250.1 140.2M250.1 140.2L252.0 135.4L254.9 132.7M244.6 124.8L240.9 127.8L239.0 129.4M244.6 124.8L250.3 125.2L253.9 128.3M253.9 128.3L254.6 129.8L254.9 132.7M224.8 134.7L229.5 138.6L234.2 141.3M231.2 125.4L236.5 126.5L239.0 129.4M234.2 141.3L238.0 139.2L240.6 136.7M264.9 134.0L261.0 133.5L254.9 132.7M250.5 141.7L250.5 141.1L250.1 140.2M266.1 141.3L263.1 144.8L260.0 147.7M236.1 116.0L240.3 115.9L243.9 114.4M243.9 114.4L246.8 119.1L244.6 124.8M248.6 112.2L247.4 112.3L246.2 111.9M246.2 111.9L245.1 112.9L243.9 114.4M257.4 120.9L256.0 124.0L253.9 128.3M246.2 111.9L244.5 108.3L243.6 104.4M258.5 106.5L258.2 103.1L256.5 98.1M243.6 104.4L250.3 99.9L253.6 96.6M256.5 98.1L255.4 97.1L253.6 96.6M243.6 104.4L241.6 102.5L239.0 101.0M251.0 90.4L252.4 93.1L253.6 96.6M251.0 90.4L247.0 89.6L242.9 89.7M239.0 101.0L240.7 95.4L242.9 89.7M229.8 110.4L231.2 106.9L232.0 101.1M239.0 101.0L235.2 102.8L232.0 101.1M247.1 76.4L241.6 81.4L238.5 84.2M237.1 83.9L237.6 84.1L238.5 84.2M251.1 76.7L253.4 80.2L255.3 83.9M251.1 76.7L249.3 76.6L247.1 76.4M251.0 90.4L253.2 87.6L255.3 83.9M242.9 89.7L240.3 87.6L238.5 84.2M230.7 99.9L231.3 100.2L232.0 101.1M230.7 99.9L228.4 94.1L228.1 89.6M228.1 89.6L232.7 86.1L237.1 83.9M224.8 112.9L221.3 111.0L217.5 108.4M230.7 99.9L224.8 101.4L218.7 102.2M218.7 102.2L218.1 105.2L217.5 108.4M212.9 123.0L210.8 118.9L209.0 113.8M217.5 108.4L214.2 110.8L209.0 113.8M207.2 113.0L207.9 113.4L209.0 113.8M194.0 86.2L197.3 82.7L201.4 78.8M194.3 69.0L188.9 73.0L182.6 75.9M194.3 69.0L198.6 72.3L201.5 77.5M201.5 77.5L201.6 78.0L201.4 78.8M274.0 50.5L280.2 49.4L283.6 46.4M194.3 69.0L194.5 66.2L194.8 64.0M174.0 49.0L179.5 48.8L186.0 48.9M288.5 57.6L285.4 59.3L281.1 62.2M274.0 50.5L275.7 55.0L275.4 58.8M275.4 58.8L278.6 61.0L281.1 62.2M303.5 75.0L298.5 77.1L294.0 79.2M296.1 62.2L291.7 68.8L288.6 73.5M288.6 73.5L291.2 74.9L293.1 79.1M294.0 79.2L293.7 79.1L293.1 79.1M309.2 86.0L305.5 87.4L300.6 87.3M294.0 79.2L297.3 82.3L300.6 87.3M308.3 100.4L309.3 93.7L310.5 87.0M304.4 100.3L300.5 97.0L297.6 93.6M300.6 87.3L298.2 89.7L297.6 93.6M255.3 83.9L260.7 83.8L263.9 84.4M256.5 98.1L260.5 95.3L264.0 94.8M263.9 84.4L264.0 89.6L264.0 94.8M268.2 105.0L267.5 100.5L267.3 96.9M267.3 96.9L265.7 96.1L264.0 94.8M234.2 141.3L233.5 145.3L233.1 148.8M242.4 153.5L238.1 151.2L233.1 148.8M219.2 142.0L224.7 146.0L227.4 151.9M233.1 148.8L230.0 150.3L227.4 151.9M282.9 176.5L279.2 175.5L274.1 175.8M284.9 161.6L287.2 156.3L289.5 153.0M286.7 147.9L288.5 150.7L289.5 153.0M315.7 205.5L311.3 202.9L307.8 199.6M304.1 200.2L305.6 199.7L307.8 199.6M195.1 251.9L197.2 250.5L199.8 249.8M192.7 238.0L196.9 240.2L199.9 241.0M199.8 249.8L199.7 246.3L199.9 241.0M203.8 231.4L200.9 229.8L198.4 227.4M203.8 231.4L203.3 234.7L204.2 238.1M198.4 227.4L195.4 228.1L193.0 228.7M204.2 238.1L202.1 238.7L199.9 241.0M190.9 201.9L188.1 202.8L184.9 204.0M190.9 201.9L196.6 206.3L200.6 207.6M184.9 204.0L185.2 209.4L187.4 215.8M177.6 197.6L183.4 190.1L189.5 187.2M180.5 202.3L182.8 203.4L184.9 204.0M193.3 190.1L192.0 188.6L189.5 187.2M193.3 190.1L192.3 197.5L190.9 201.9M198.4 227.4L201.1 223.5L202.4 218.5M192.3 228.3L191.6 223.0L188.5 216.2M203.8 231.4L209.2 229.7L214.3 227.0M214.3 227.0L212.5 222.7L210.0 220.2M191.0 102.0L193.4 104.9L193.4 107.8M205.0 109.6L206.1 112.0L207.2 113.0M205.0 109.6L200.2 107.2L193.4 107.8M644.3 8.5L641.7 10.6L640.5 12.8M640.5 12.8L627.7 7.8L619.0 4.7M658.0 6.5L650.2 5.7L644.3 8.5M640.0 28.3L639.9 21.4L640.5 12.8M615.3 7.6L614.4 17.9L612.2 27.5M615.3 7.6L603.9 3.7L588.8 2.1M588.7 14.4L594.6 20.9L603.0 28.3M588.7 14.4L586.9 8.1L588.2 2.5M603.0 28.3L607.8 27.8L612.2 27.5M588.2 2.5L588.5 2.2L588.8 2.1M617.5 31.8L614.5 29.4L612.2 27.5M619.0 4.7L617.2 5.7L615.3 7.6M577.4 28.1L585.9 20.4L588.7 14.4M589.5 45.7L596.4 36.4L603.0 28.3M567.1 -1.8L578.9 2.0L588.2 2.5M459.8 2.4L455.5 1.3L451.8 2.6M459.8 2.4L461.3 -2.0L463.5 -7.3M451.8 2.6L450.9 -2.6L450.2 -6.6M463.3 7.4L460.9 4.6L459.8 2.4M449.4 5.9L451.0 4.2L451.8 2.6M461.8 79.3L458.2 77.3L455.7 76.0M461.8 79.3L464.4 77.7L466.3 77.2M466.3 77.2L467.9 74.7L467.7 72.0M467.7 72.0L464.2 66.6L459.8 63.4M455.7 76.0L456.4 69.4L456.9 65.7M459.8 63.4L457.8 64.4L456.9 65.7M468.3 92.8L472.8 89.4L479.0 86.2M468.3 92.8L466.5 92.8L464.6 92.0M464.6 92.0L463.7 89.4L460.6 87.0M479.0 86.2L473.4 82.0L466.3 77.2M460.6 87.0L461.3 84.2L461.8 79.3M482.2 85.9L480.4 85.8L479.0 86.2M482.8 64.3L473.2 66.1L467.7 72.0M461.0 59.6L460.2 61.8L459.8 63.4M442.4 57.7L444.9 61.8L446.5 65.4M446.5 65.4L450.5 65.6L456.9 65.7M450.2 77.9L446.3 83.2L447.5 88.9M450.2 77.9L447.3 75.2L444.1 72.4M444.1 72.4L440.8 73.5L438.8 74.0M438.8 74.0L438.2 77.7L436.9 81.8M436.9 81.8L439.7 85.2L442.2 88.0M442.2 88.0L445.2 88.4L447.3 89.1M447.3 89.1L447.4 89.0L447.5 88.9M460.6 87.0L454.2 87.7L447.5 88.9M455.7 76.0L453.4 76.6L450.2 77.9M446.5 65.4L445.7 67.8L444.1 72.4M431.9 69.2L434.4 71.9L438.8 74.0M424.2 81.4L424.6 82.5L424.7 83.4M425.3 83.7L425.0 83.7L424.7 83.4M425.3 83.7L431.0 83.3L436.9 81.8M431.7 95.6L427.9 88.3L425.3 83.7M431.7 95.6L436.4 92.8L442.2 88.0M449.3 99.2L448.5 94.4L447.3 89.1M449.3 99.2L447.1 101.4L444.9 103.1M431.2 99.8L431.1 99.6L431.1 99.5M431.7 95.6L431.6 97.1L431.1 99.5M464.6 92.0L461.6 96.1L455.1 101.1M455.1 101.1L452.7 101.4L449.3 99.2M460.5 174.7L459.1 176.6L457.7 178.5M460.5 174.7L466.5 177.1L473.9 176.8M457.7 178.5L460.1 182.3L461.9 186.9M473.9 176.8L474.0 178.0L474.2 180.1M474.2 180.1L471.4 183.5L467.4 187.4M467.4 187.4L463.9 187.1L461.9 186.9M452.0 179.1L455.5 179.2L457.7 178.5M475.5 173.9L474.5 175.8L473.9 176.8M456.5 194.0L459.2 191.1L461.9 186.9M480.6 185.8L477.4 183.4L474.2 180.1M473.2 198.5L470.5 193.9L467.4 187.4M455.5 220.8L452.4 223.1L448.9 224.5M463.1 231.9L458.4 232.9L453.3 234.8M453.3 234.8L451.5 229.0L448.9 224.5M439.0 205.2L435.6 205.6L432.3 205.2M432.3 205.2L431.2 206.6L429.7 208.4M429.7 208.4L429.7 208.6L429.7 208.8M452.2 208.5L447.7 210.3L444.7 211.5M444.1 199.3L441.4 202.4L439.0 205.2M431.1 198.3L431.9 201.8L432.3 205.2M417.4 203.5L424.7 206.2L429.7 208.4M448.9 224.5L447.2 223.9L445.4 223.8M399.5 139.8L399.1 140.0L398.7 140.2M387.7 128.3L388.3 132.3L390.1 138.2M398.7 140.2L394.7 139.2L390.1 138.2M479.1 139.8L479.0 139.7L479.0 139.5M458.0 143.9L459.7 141.0L462.9 135.7M479.0 139.5L470.3 138.9L462.9 135.7M462.9 135.7L462.2 134.2L461.3 132.4M479.0 139.5L479.9 133.3L479.9 126.5M461.3 132.4L464.4 129.0L465.3 125.4M465.3 125.4L472.3 126.3L479.9 126.5M468.3 92.8L469.9 100.7L471.3 108.7M489.4 99.4L485.1 105.1L477.2 110.5M471.3 108.7L475.2 110.3L477.2 110.5M497.8 122.8L490.3 123.7L481.2 124.2M477.2 110.5L479.3 117.5L481.2 124.2M481.2 124.2L480.7 125.2L479.9 126.5M519.3 245.6L515.6 245.3L513.2 244.5M508.7 257.9L512.1 260.3L517.9 264.0M508.7 257.9L508.3 252.7L509.5 248.1M517.9 264.0L518.8 263.9L519.7 263.3M519.7 263.3L520.9 262.0L522.2 259.9M509.5 248.1L511.3 245.6L513.2 244.5M455.3 272.1L455.1 274.5L455.0 276.9M455.3 272.1L452.4 269.5L446.6 266.3M439.0 273.3L443.8 269.6L446.6 266.3M455.0 276.9L451.8 281.1L449.3 282.3M455.0 276.9L460.1 280.7L464.8 282.2M467.9 258.0L471.0 260.7L474.2 264.0M467.9 258.0L468.8 255.0L470.1 252.3M483.0 251.5L482.7 255.9L482.9 261.5M482.9 261.5L479.4 262.9L474.2 264.0M461.4 260.7L464.8 259.5L467.9 258.0M461.4 260.7L461.0 264.3L460.6 267.6M460.6 267.6L465.2 271.8L471.6 273.7M474.2 264.0L473.1 269.3L471.6 273.7M464.8 282.2L469.8 279.0L472.5 275.9M477.2 277.9L475.5 276.6L472.5 275.9M460.6 267.6L458.1 269.3L455.3 272.1M471.6 273.7L471.9 274.9L472.5 275.9M493.0 278.4L489.6 276.1L487.0 272.5M493.0 278.4L496.6 277.6L500.8 276.5M487.0 272.5L487.6 268.6L487.8 266.8M487.8 266.8L493.7 264.9L498.9 262.0M500.8 276.5L503.0 273.7L503.5 271.6M503.5 271.6L501.0 266.1L499.0 262.1M499.0 262.1L498.9 262.0L498.9 262.0M477.2 277.9L482.1 275.9L487.0 272.5M507.8 287.1L506.0 280.5L500.8 276.5M482.9 261.5L485.2 264.0L487.8 266.8M493.5 247.6L490.5 247.4L485.5 248.1M493.5 247.6L496.4 255.1L498.9 262.0M516.0 277.7L514.9 274.0L514.1 271.6M514.1 271.6L508.3 271.5L503.5 271.6M508.7 257.9L503.2 259.7L499.0 262.1M514.1 271.6L516.3 267.8L517.9 264.0M493.5 247.6L493.9 247.3L494.2 247.0M494.2 247.0L502.6 248.1L509.5 248.1M368.3 284.2L365.5 279.0L363.9 273.9M353.3 282.2L357.6 277.2L363.9 273.9M366.2 271.7L365.0 272.5L364.1 273.1M363.9 273.9L364.0 273.6L364.1 273.1M338.5 272.8L342.7 275.7L348.2 278.6M356.3 255.0L350.8 254.2L346.5 251.5M356.3 255.0L356.8 257.5L358.0 259.5M358.0 259.5L357.1 262.4L354.6 266.0M352.5 266.6L353.3 266.0L354.6 266.0M352.5 266.6L349.1 264.2L342.6 261.8M342.6 261.8L341.4 259.1L341.0 257.3M367.3 259.4L367.2 255.2L368.0 250.4M367.3 259.4L361.9 260.0L358.0 259.5M360.7 248.3L365.1 248.8L368.0 250.4M360.7 248.3L357.9 252.5L356.3 255.0M369.5 261.7L368.1 261.2L367.3 259.4M364.1 273.1L360.2 268.7L354.6 266.0M333.8 255.1L336.8 255.4L341.0 257.3M346.8 248.6L346.8 250.4L346.5 251.5M348.2 278.6L349.7 272.6L352.5 266.6M337.9 270.7L340.1 264.6L342.6 261.8M380.1 261.3L380.6 259.6L381.9 258.3M394.8 271.4L395.7 268.1L397.0 264.8M381.9 258.3L385.6 256.5L388.7 256.2M397.0 264.8L391.7 260.7L388.7 256.2M397.0 264.8L400.0 263.7L402.2 262.3M388.7 256.2L391.4 252.6L393.8 247.9M403.4 255.3L402.6 259.7L402.2 262.3M528.4 270.7L527.5 274.7L527.2 278.8M533.6 245.3L533.6 245.3L533.6 245.3M524.0 231.6L524.2 236.6L523.9 243.4M524.0 231.6L530.2 230.2L536.8 230.2M536.8 230.2L536.8 230.2L536.9 230.2M536.9 230.2L537.6 236.5L533.6 245.3M541.8 260.7L543.0 253.8L541.9 247.7M541.8 260.7L539.0 261.5L537.2 262.6M533.6 245.3L538.7 245.6L541.9 247.7M304.1 200.2L302.2 197.4L299.4 195.3M289.5 153.0L295.1 152.4L299.5 153.7M294.8 167.9L298.1 164.0L303.0 161.9M303.0 161.9L301.1 157.2L299.5 153.7M303.0 161.9L305.1 162.6L307.3 163.6M306.2 176.5L307.3 170.0L307.3 163.6M283.1 221.2L277.9 223.5L274.4 224.2M274.4 224.2L276.4 230.4L276.7 236.8M287.3 231.6L283.6 233.7L280.1 237.0M276.7 236.8L278.5 237.0L280.1 237.0M269.8 222.5L271.8 223.4L274.4 224.2M269.8 222.5L268.9 217.6L268.6 212.1M284.7 218.3L282.0 212.6L278.0 207.2M284.7 218.3L283.7 219.7L283.1 221.2M278.0 207.2L272.6 210.2L268.6 212.1M269.9 241.1L272.5 239.7L276.7 236.8M269.9 241.1L266.6 238.3L263.4 235.8M263.4 235.8L266.8 229.7L267.7 223.8M267.7 223.8L269.1 223.1L269.8 222.5M294.5 120.4L297.1 117.5L298.4 113.8M315.0 120.1L313.6 121.5L312.5 122.8M294.5 121.2L295.9 123.3L297.4 125.6M297.4 125.6L305.8 122.4L312.5 122.8M323.4 136.4L322.4 137.2L321.0 138.4M321.0 138.4L318.4 138.7L316.0 138.7M316.0 138.7L313.3 137.1L310.6 134.5M312.5 122.8L311.4 129.5L310.6 134.5M199.2 175.7L195.6 178.9L189.8 179.0M199.2 175.7L199.0 170.3L198.4 163.7M189.8 179.0L186.9 172.6L186.6 167.6M186.6 167.6L188.6 165.6L189.8 163.4M189.8 163.4L191.6 162.5L192.9 162.4M192.9 162.4L195.8 162.4L198.4 163.7M202.0 162.5L199.7 162.9L198.4 163.7M202.0 162.5L206.6 168.7L211.9 171.8M211.9 171.8L206.8 173.4L203.2 178.0M203.2 178.0L200.9 176.9L199.2 175.7M208.2 154.0L204.7 158.3L202.0 162.5M193.4 148.7L193.6 154.8L192.9 162.4M174.8 184.6L177.7 183.8L179.6 181.6M174.8 184.6L170.4 182.5L167.3 181.8M179.6 181.6L180.0 176.5L175.9 171.2M166.4 180.0L166.9 180.9L167.3 181.8M166.4 180.0L168.2 176.0L170.8 172.0M170.8 172.0L173.7 171.2L175.9 171.2M174.4 196.3L174.2 190.7L174.8 184.6M189.5 187.2L188.3 184.8L187.9 183.2M187.9 183.2L184.1 181.7L179.6 181.6M163.6 195.5L162.8 193.9L162.3 192.4M162.3 192.4L165.8 187.9L167.3 181.8M187.9 183.2L188.6 181.0L189.8 179.0M177.9 168.9L176.8 170.0L175.9 171.2M177.9 168.9L182.3 167.4L186.6 167.6M165.6 167.5L168.6 170.1L170.8 172.0M159.4 177.9L164.1 179.0L166.4 180.0M355.9 92.5L356.6 94.6L357.9 97.7M355.9 92.5L349.2 90.8L341.3 92.1M357.9 97.7L354.1 101.7L348.5 107.0M348.5 107.0L342.5 99.9L340.4 93.5M340.4 93.5L341.0 92.9L341.3 92.1M358.8 83.9L357.9 88.0L355.9 92.5M366.8 101.3L361.9 98.3L357.9 97.7M341.5 89.8L341.5 91.0L341.3 92.1M348.4 108.3L348.4 107.7L348.5 107.0M431.1 99.5L424.5 99.0L418.0 97.4M424.7 83.4L420.3 86.5L415.7 89.9M415.7 89.9L416.6 93.3L418.0 97.4M426.8 111.3L419.5 109.2L413.6 106.1M418.0 97.4L415.3 102.2L413.6 106.1M413.2 119.6L413.2 113.9L413.4 106.2M413.4 106.2L413.5 106.1L413.6 106.1M402.4 115.4L404.8 109.5L406.5 105.3M413.4 106.2L410.0 106.2L406.5 105.3M396.0 105.0L401.1 104.6L405.7 104.5M406.5 105.3L406.2 104.9L405.7 104.5M383.3 12.8L382.3 17.8L380.1 20.6M396.3 16.4L396.5 16.6L396.6 16.9M380.1 20.6L383.6 25.3L390.2 29.5M396.6 16.9L392.9 26.0L390.2 29.5M368.6 60.0L371.7 57.7L373.7 55.9M365.7 43.3L369.2 43.6L372.1 43.3M372.1 43.3L372.2 49.4L373.7 55.9M381.1 69.6L384.4 63.5L384.7 57.5M373.7 55.9L378.6 55.4L384.7 57.5M397.7 69.5L392.8 74.8L386.9 75.3M397.7 69.5L398.3 68.8L398.4 68.2M397.6 66.0L390.3 62.3L385.5 57.0M384.7 57.5L385.2 57.3L385.5 57.0M395.7 49.6L388.9 54.6L385.6 56.7M385.5 57.0L385.5 56.9L385.6 56.7M361.2 29.5L359.1 26.9L357.2 24.8M361.2 29.5L365.0 29.2L372.5 27.3M357.2 24.8L361.6 16.3L364.5 11.6M364.5 11.6L368.1 17.4L374.0 23.9M374.0 23.9L373.3 25.6L372.5 27.3M349.0 23.7L352.6 23.5L357.2 24.8M360.3 34.9L360.8 32.9L361.2 29.5M380.1 20.6L377.3 23.2L374.0 23.9M328.1 90.1L333.6 92.2L339.4 93.9M328.1 90.1L325.0 91.5L322.8 93.4M321.8 100.7L321.8 97.6L322.8 93.4M321.8 100.7L326.7 102.7L331.0 104.6M331.0 104.6L335.7 99.2L339.4 93.9M328.8 81.6L327.8 85.4L328.1 90.1M340.4 93.5L340.0 93.7L339.4 93.9M316.2 86.7L319.4 89.4L322.8 93.4M319.8 101.9L320.9 101.4L321.8 100.7M333.9 111.6L332.9 108.1L331.0 104.6M266.6 0.7L266.3 -3.1L266.0 -5.4M221.2 67.7L217.5 71.5L214.5 74.7M221.2 67.7L221.1 65.8L220.7 64.3M207.9 63.4L212.5 62.5L216.1 61.4M207.9 63.4L207.4 68.7L207.3 73.2M207.3 73.2L210.8 73.7L214.5 74.7M220.7 64.3L218.6 62.6L216.1 61.4M227.4 73.5L224.5 71.7L221.2 67.7M216.4 81.4L219.6 81.9L222.1 83.1M218.7 102.2L217.1 98.9L213.8 95.8M201.4 78.8L206.4 83.3L209.9 86.2M201.5 77.5L204.0 75.4L207.3 73.2M214.5 74.7L215.0 78.5L216.4 81.4M269.8 64.4L272.5 61.1L275.4 58.8M269.8 64.4L267.4 64.3L264.3 63.0M264.3 63.0L264.8 59.2L262.9 56.1M192.3 29.8L191.7 32.0L192.2 34.3M188.3 40.2L191.1 37.3L192.2 34.3M209.2 29.9L206.0 35.0L204.7 40.2M192.2 34.3L197.4 37.0L204.7 40.2M283.0 72.8L280.4 78.5L277.6 87.5M283.0 72.8L282.8 72.6L282.5 72.5M282.5 72.5L278.3 71.8L272.4 72.2M272.4 72.2L269.5 74.4L267.5 77.2M277.6 87.5L271.9 82.4L267.0 82.2M267.5 77.2L266.8 79.3L267.0 82.2M288.6 73.5L285.7 72.4L283.0 72.8M281.1 62.2L281.0 68.7L282.5 72.5M269.8 64.4L271.8 67.5L272.4 72.2M264.3 63.0L259.2 67.0L257.1 68.7M257.1 68.7L261.7 72.6L267.5 77.2M251.1 76.7L254.4 74.1L257.0 68.7M263.9 84.4L265.3 82.9L267.0 82.2M257.1 68.7L257.1 68.7L257.0 68.7M287.2 89.4L289.0 92.6L290.9 94.5M287.2 89.4L283.0 89.6L278.3 88.6M276.4 93.9L277.0 91.2L278.3 88.6M276.4 93.9L278.9 99.0L280.3 104.2M290.9 94.5L289.4 98.5L288.2 103.5M288.2 103.5L286.1 104.2L284.4 105.4M280.3 104.2L281.9 104.6L284.4 105.4M293.1 79.1L290.7 85.3L287.2 89.4M297.6 93.6L294.5 94.0L290.9 94.5M277.6 87.5L278.0 88.0L278.3 88.6M267.3 96.9L271.8 96.7L276.4 93.9M274.1 107.1L277.6 106.1L280.3 104.2M296.7 107.1L292.9 105.7L288.2 103.5M284.9 113.0L284.4 109.6L284.4 105.4M182.8 149.2L182.2 152.2L181.2 154.6M181.2 154.6L178.5 156.5L173.7 157.8M173.7 157.8L171.6 157.5L169.3 156.6M189.8 163.4L186.0 159.0L181.2 154.6M177.9 168.9L176.1 162.8L173.7 157.8M167.7 157.6L168.3 157.2L169.3 156.6M242.5 237.3L249.0 237.6L254.9 234.5M242.5 237.3L243.7 243.0L245.5 248.2M253.4 247.8L248.7 248.5L245.5 248.2M253.4 247.8L256.1 239.9L256.1 235.5M256.1 235.5L255.4 234.9L254.9 234.5M244.5 249.2L245.2 248.7L245.5 248.2M235.1 248.6L234.0 245.6L233.3 242.4M233.3 242.4L237.7 238.6L240.0 235.9M240.0 235.9L241.2 236.8L242.5 237.3M257.1 251.4L255.0 249.7L253.4 247.8M269.8 243.6L269.7 242.3L269.9 241.1M263.4 235.8L258.0 235.4L256.1 235.5M212.6 246.1L207.2 248.6L203.7 251.2M212.6 246.1L213.5 251.4L218.4 258.5M203.7 251.2L205.8 254.6L207.1 259.7M207.1 259.7L211.4 259.8L216.1 260.4M216.1 260.4L217.3 259.7L218.4 258.5M213.8 242.3L213.1 244.5L212.6 246.1M213.8 242.3L210.5 239.7L204.2 238.1M199.8 249.8L201.6 250.8L203.7 251.2M203.6 263.1L205.1 261.3L207.1 259.7M215.5 269.8L216.0 264.0L216.1 260.4M220.4 258.2L219.5 258.5L218.4 258.5M193.3 190.1L195.8 190.0L197.8 190.4M203.2 178.0L203.9 181.2L204.6 185.3M197.8 190.4L202.4 188.2L204.6 185.3M214.9 227.3L216.8 226.7L219.7 226.1M214.9 227.3L215.4 234.3L215.2 241.3M219.7 226.1L223.9 226.9L227.4 230.2M227.4 230.2L225.8 235.5L225.2 240.3M215.2 241.3L218.4 240.6L223.1 241.7M223.1 241.7L224.4 240.7L225.2 240.3M213.8 242.3L214.6 241.9L215.2 241.3M214.3 227.0L214.6 227.2L214.9 227.3M233.3 242.4L230.1 240.5L225.2 240.3M239.5 234.6L239.8 235.2L240.0 235.9M239.5 234.6L234.0 231.5L228.5 229.8M228.5 229.8L227.9 230.1L227.4 230.2M225.8 253.6L226.7 249.1L223.1 241.7M239.5 234.6L241.7 229.8L243.0 223.5M254.9 234.5L254.8 232.1L253.5 228.4M243.0 223.5L248.0 225.0L253.5 228.4M235.1 218.8L237.7 218.9L241.5 219.9M235.1 218.8L232.4 224.7L228.5 229.8M243.0 223.5L241.9 222.0L241.5 219.9M267.7 223.8L262.5 222.6L257.4 222.2M257.4 222.2L255.6 226.2L253.5 228.4M466.2 244.4L462.5 245.3L458.6 245.7M453.3 234.8L452.7 236.8L452.0 238.3M458.6 245.7L454.2 240.8L452.0 238.3M376.1 133.6L379.1 140.3L382.5 143.1M390.1 138.2L385.8 140.9L383.0 143.1M382.5 143.1L382.7 143.2L383.0 143.1M367.5 145.5L372.8 146.6L378.4 146.6M382.5 143.1L380.3 144.7L378.4 146.6M369.3 157.7L374.2 157.4L378.1 156.3M378.4 146.6L377.1 150.7L378.1 156.3M382.0 165.3L383.1 162.6L383.8 160.8M378.1 156.3L380.2 158.6L383.8 160.8M396.3 150.7L391.8 150.9L389.8 151.9M389.8 151.9L387.4 156.7L385.1 160.3M385.1 160.3L391.1 162.0L395.8 164.4M398.7 140.2L397.4 146.0L396.3 150.7M383.0 143.1L385.9 147.7L389.8 151.9M383.8 160.8L384.3 160.6L385.1 160.3M394.4 171.4L395.5 167.4L395.8 164.4M458.5 119.9L456.6 116.5L454.5 113.9M461.7 120.2L466.1 112.6L470.6 108.8M454.5 113.9L456.5 109.1L458.6 105.9M458.6 105.9L463.0 108.4L470.6 108.8M465.3 125.4L463.7 122.9L461.7 120.2M448.3 114.3L450.8 113.6L454.5 113.9M471.3 108.7L471.0 108.8L470.6 108.8M455.1 101.1L456.4 103.3L458.6 105.9M481.2 236.7L487.6 231.9L491.3 229.2M494.2 247.0L497.3 238.4L497.9 234.2M497.9 234.2L494.3 231.1L491.3 229.2M475.7 223.5L484.4 224.2L489.6 222.8M491.3 229.2L490.4 225.9L489.6 222.8M482.2 211.1L487.5 215.0L491.5 218.2M489.6 222.8L490.5 220.5L491.5 218.2M498.2 210.3L497.8 212.5L497.2 214.3M497.2 214.3L494.8 216.0L491.5 218.2M430.6 268.3L427.0 274.5L424.1 278.4M402.9 278.5L406.7 273.5L412.5 272.5M418.4 278.8L415.5 275.4L412.5 272.5M412.2 267.3L408.3 264.6L402.2 262.3M412.2 267.3L412.7 268.1L412.9 268.9M412.5 272.5L412.3 270.9L412.9 268.9M581.2 284.4L576.7 280.1L571.8 270.1M571.8 270.1L568.1 278.9L561.7 286.1M555.4 271.7L553.2 270.3L550.2 269.5M555.4 271.7L564.0 270.5L571.2 267.3M554.3 256.0L551.2 259.4L547.4 262.8M554.3 256.0L559.4 256.3L563.2 256.8M547.4 262.8L548.4 265.1L550.2 269.5M563.2 256.8L567.7 260.9L571.7 265.9M571.7 265.9L571.6 266.5L571.2 267.3M542.1 275.9L546.2 270.7L550.2 269.5M553.6 284.4L553.9 278.6L555.4 271.7M571.8 270.1L571.8 268.8L571.2 267.3M541.8 260.7L544.4 261.2L547.4 262.8M548.0 245.5L545.0 246.9L541.9 247.7M548.0 245.5L549.7 249.3L554.3 256.0M578.7 260.9L575.1 263.4L571.7 265.9M545.8 228.5L545.8 228.5L545.8 228.6M545.8 228.5L557.2 230.2L571.0 225.3M545.8 228.6L548.9 236.2L550.5 241.6M550.5 241.6L555.7 240.9L563.5 240.9M563.5 240.9L567.5 238.3L570.5 234.8M571.0 225.3L569.8 231.5L570.5 234.8M546.3 215.2L545.0 220.9L545.8 228.5M536.8 230.2L533.3 222.3L528.6 215.1M528.6 215.1L528.6 215.1L528.6 215.0M536.9 230.2L540.5 229.0L545.8 228.6M571.9 223.5L571.5 224.3L571.0 225.3M548.0 245.5L549.0 243.5L550.5 241.6M563.2 256.8L564.4 248.5L563.5 240.9M581.6 246.6L574.4 240.1L570.5 234.8M284.5 249.0L287.2 252.5L288.0 255.1M284.5 249.0L285.1 246.6L285.9 245.3M285.9 245.3L291.2 243.4L295.8 242.0M288.0 255.1L292.7 252.7L297.0 253.0M295.8 242.0L297.9 245.1L299.8 248.0M297.0 253.0L298.4 251.0L299.8 248.0M285.2 263.8L286.7 260.6L288.0 255.1M273.8 251.3L279.3 250.2L284.5 249.0M280.1 237.0L284.0 241.4L285.9 245.3M296.7 233.6L296.4 237.6L295.8 242.0M300.4 264.8L299.7 260.0L297.0 253.0M307.3 248.6L303.4 248.4L299.8 248.0M278.0 207.2L278.1 206.9L278.2 206.6M290.3 203.7L283.2 206.1L278.2 206.6M307.3 163.6L309.0 163.3L310.0 163.1M313.7 180.3L316.0 176.1L319.6 171.9M310.0 163.1L314.9 167.4L319.6 171.9M324.5 170.9L322.1 170.9L319.6 171.9M301.5 143.1L296.3 142.0L289.8 140.0M297.3 128.5L293.1 132.9L288.9 137.0M288.9 137.0L288.9 138.3L289.8 140.0M310.6 134.5L307.8 135.3L304.1 136.4M286.7 147.9L289.0 143.7L289.8 140.0M299.5 153.7L301.1 151.5L303.0 147.5M297.4 125.6L297.2 127.1L297.3 128.5M280.6 132.4L284.9 134.5L288.9 137.0M374.8 245.9L374.9 246.0L375.1 246.0M381.9 258.3L380.6 251.4L375.1 246.0M368.0 250.4L371.9 247.4L374.8 245.9M358.9 239.6L358.3 240.4L357.6 241.0M356.0 241.0L356.8 241.1L357.6 241.0M346.8 248.6L352.0 244.5L356.0 241.0M360.7 248.3L359.0 245.6L357.6 241.0M407.5 82.7L408.5 85.4L410.6 88.5M407.5 82.7L404.8 82.6L401.9 81.2M410.6 88.5L406.7 90.6L403.9 94.9M401.9 81.2L397.4 83.8L393.8 86.7M403.9 94.9L398.8 93.6L394.2 92.0M393.8 86.7L393.9 89.5L394.2 92.0M413.0 73.6L411.1 78.4L407.5 82.7M415.7 89.9L412.9 88.8L410.6 88.5M397.7 69.5L399.2 74.0L401.9 81.2M405.7 104.5L404.5 100.6L403.9 94.9M386.6 80.2L390.3 83.0L393.8 86.7M390.1 97.0L392.1 94.9L394.2 92.0M391.8 41.1L386.5 41.3L381.6 43.6M391.8 41.1L392.7 36.6L390.9 30.4M390.9 30.4L390.6 30.0L390.2 29.6M390.2 29.6L382.9 33.7L376.8 36.2M381.6 43.6L378.7 42.5L376.2 40.6M376.8 36.2L376.9 38.4L376.2 40.6M395.5 44.2L393.5 42.9L391.8 41.1M385.6 56.7L384.8 49.3L381.6 43.6M390.2 29.5L390.2 29.6L390.2 29.6M372.5 27.3L372.9 31.3L376.8 36.2M372.1 43.3L374.7 41.1L376.2 40.6M405.7 33.5L412.2 35.8L418.5 35.6M405.7 33.5L405.2 32.7L405.0 32.1M405.0 32.1L406.2 28.0L407.0 21.7M418.5 35.6L419.6 29.0L419.2 22.8M419.2 22.8L415.3 22.1L410.0 20.2M410.0 20.2L408.4 21.2L407.0 21.7M404.0 39.3L404.6 37.2L405.7 33.5M420.1 37.5L419.3 36.3L418.5 35.6M390.9 30.4L398.0 30.4L405.0 32.1M396.6 16.9L401.7 19.9L407.0 21.7M425.3 19.9L422.5 21.1L419.2 22.8M412.1 7.6L411.6 14.0L410.0 20.2M210.0 46.9L212.0 49.1L214.9 50.9M216.1 61.4L215.7 56.7L214.9 50.9M193.1 48.9L199.8 47.5L206.6 46.3M203.0 60.6L205.6 53.3L206.8 46.5M203.0 60.6L199.8 60.9L196.9 61.9M206.8 46.5L206.7 46.4L206.6 46.3M204.7 40.2L206.3 42.8L206.6 46.3M194.8 64.0L195.7 62.8L196.9 61.9M207.9 63.4L206.0 62.3L203.0 60.6M210.0 46.9L208.6 46.7L206.8 46.5M226.6 153.6L228.4 158.4L229.3 164.0M226.6 153.6L221.4 154.8L214.6 156.5M229.3 164.0L222.5 165.9L217.8 168.2M214.6 156.5L216.7 161.7L217.8 168.2M227.4 151.9L227.1 152.7L226.6 153.6M238.1 165.3L235.7 165.3L232.0 165.8M232.0 165.8L230.6 164.6L229.3 164.0M209.9 153.9L212.2 155.5L214.6 156.5M211.9 171.8L213.3 172.4L215.7 172.1M215.7 172.1L216.1 169.8L217.8 168.2M215.7 172.1L217.0 174.8L218.2 176.7M247.4 208.3L248.0 210.3L248.5 212.0M248.5 212.0L251.0 212.8L255.1 214.0M255.1 214.0L258.7 212.4L263.2 209.6M262.0 202.3L262.9 207.4L263.2 209.6M241.5 219.9L246.1 215.7L248.5 212.0M257.4 222.2L257.0 218.1L255.1 214.0M268.6 212.1L266.4 210.4L263.2 209.6M219.7 226.1L221.3 219.9L223.5 215.9M235.1 218.8L232.8 215.5L229.4 212.9M223.5 215.9L226.2 214.6L229.4 212.9M229.4 212.9L229.7 211.5L229.6 210.0M461.4 260.7L457.9 258.9L454.8 255.8M458.6 245.7L456.0 250.1L454.3 253.7M454.8 255.8L454.6 254.8L454.3 253.7M446.6 266.3L446.5 264.8L446.5 263.7M454.8 255.8L450.5 260.4L446.5 263.7M508.7 233.1L507.8 232.4L506.9 231.9M508.7 233.1L514.3 232.2L521.3 229.0M506.9 231.9L507.3 227.2L507.0 222.2M507.0 222.2L510.4 219.3L515.5 216.5M521.3 229.0L521.3 222.9L522.1 218.4M522.1 218.4L519.0 218.3L515.5 216.5M513.2 244.5L511.2 239.8L508.7 233.1M497.9 234.2L501.1 233.4L506.9 231.9M524.0 231.6L522.4 230.5L521.3 229.0M497.2 214.3L501.2 217.2L507.0 222.2M511.7 206.4L514.4 211.8L515.5 216.5M528.6 215.1L524.8 217.0L522.1 218.4M272.3 179.2L273.0 183.0L274.2 186.5M330.0 150.5L326.4 149.2L323.4 148.0M321.0 138.4L321.4 142.2L323.4 148.0M331.4 149.9L330.7 150.3L330.0 150.5M197.8 190.4L201.0 195.3L204.5 200.6M203.9 205.1L203.8 203.3L204.5 200.6M430.6 268.3L430.4 267.0L429.7 266.3M446.5 263.7L442.4 260.0L437.8 256.3M437.8 256.3L433.4 261.7L429.7 266.3M412.9 268.9L420.4 266.4L427.9 265.4M204.6 185.3L207.1 185.4L209.4 186.7M204.5 200.6L208.4 198.4L212.2 194.2M212.2 194.2L211.3 189.0L209.4 186.7M218.2 176.7L217.4 179.2L216.9 181.6M209.4 186.7L212.4 184.0L216.9 181.6M412.2 267.3L414.5 263.8L415.6 255.6M421.9 254.8L418.6 254.9L415.6 255.6M403.4 255.3L406.3 253.1L410.9 251.4M415.6 255.6L413.5 254.0L410.9 251.4M454.3 253.7L451.0 249.2L444.5 249.4M437.8 256.3L438.0 255.0L437.8 254.0M444.5 249.4L441.1 252.3L437.8 254.0M452.0 238.3L448.1 239.1L445.3 240.8M444.5 249.4L444.6 246.0L445.3 240.8M212.2 194.2L214.4 194.5L216.9 195.7M421.9 254.8L424.2 250.7L427.2 247.9M437.8 254.0L434.0 251.1L430.0 247.7M445.3 240.8L441.7 238.4L436.9 235.7" fill="none" stroke="#cfc3d3" stroke-width=".55" opacity=".8"/><path d="M402.9 170.8L406.1 171.2L410.5 171.0L417.5 170.1L420.0 168.9L425.7 165.5L432.4 164.4L441.1 163.8L446.2 166.5L448.6 170.2L452.5 169.6L458.4 172.7L461.7 173.3L470.0 172.7L474.9 172.4L482.1 167.2L482.2 163.0L478.1 155.7L470.0 150.6L465.9 146.1L457.8 140.6L454.7 139.0L450.3 137.2L450.4 135.0L449.5 135.4L442.6 137.8L440.0 139.5L434.9 142.5L432.2 143.5L430.7 141.7L429.8 136.3L424.4 135.0L427.6 130.9L431.4 128.2L426.9 128.2L418.1 126.3L418.4 123.6L413.2 124.1L411.1 128.6L406.4 136.3L400.1 145.4L399.6 148.7L398.9 152.5L395.5 153.9L392.8 160.0L395.2 162.8L396.0 165.3L400.3 169.7ZM450.4 135.0L442.7 135.4L440.2 131.8L438.9 128.2L442.1 126.3L451.6 122.2L456.3 119.0L464.8 118.1L467.4 119.0L460.9 122.7L460.2 128.6L455.4 135.0L450.4 137.2ZM387.8 177.5L392.8 172.9L397.6 172.1L402.3 172.7L408.0 174.8L404.0 175.6L403.2 177.4L401.5 177.9L395.8 178.1L391.6 177.3ZM518.5 134.5L515.4 140.8L519.2 147.8L519.2 155.8L524.2 163.6L528.6 170.1L532.4 176.0L537.2 177.7L534.1 177.9L531.2 181.4L531.2 186.7L527.8 191.2L527.8 193.8L531.6 201.5L535.0 202.0L539.1 206.0L543.8 207.8L551.7 207.4L559.9 206.0L559.6 202.4L559.0 197.2L557.7 189.2L554.5 185.9L553.6 181.0L552.0 176.8L553.3 171.8L551.1 168.0L550.4 163.4L549.5 157.4L542.2 150.0L536.5 141.7L542.5 141.7L541.3 135.4L549.5 134.5L555.8 135.4L553.9 126.3L554.5 120.8L547.0 120.8L538.1 121.8L531.8 124.5L527.4 129.1L522.3 130.0ZM553.6 171.0L557.1 173.9L563.4 172.7L564.6 167.6L561.5 162.5L557.1 162.5L553.6 166.8ZM682.8 135.4L687.8 138.5L691.6 128.2L696.7 124.5L705.5 123.6L718.1 123.6L718.1 126.3L705.5 125.9L696.0 125.9L692.9 130.0L690.3 136.3L685.3 137.2ZM586.7 133.6L589.9 132.7L591.2 138.1L589.3 143.4L587.4 142.5ZM598.1 125.4L603.2 121.8L608.9 123.6L607.0 127.3L601.9 127.3ZM251.0 67.1L251.3 63.5L251.0 60.3L253.2 60.3L256.1 65.0L254.5 67.1L252.6 68.1ZM652.4 85.4L656.9 84.4L656.9 88.8L653.1 88.8ZM700.5 160.8L707.4 157.8L713.7 159.1L707.4 162.5ZM580.1 166.4L581.7 163.0L584.5 163.4L584.2 166.8L581.7 167.6Z" fill="#aad3df"/><path d="M504.0 196.4L505.3 195.6L507.8 201.2L507.8 204.0L505.6 202.8ZM486.9 192.4L490.7 189.6L494.5 190.8L492.6 194.4L488.8 194.4ZM503.0 176.0L504.0 176.0L507.2 178.9L505.6 179.3Z" fill="#aad3df" opacity=".5"/><clipPath id="wc"><path d="M402.9 170.8L406.1 171.2L410.5 171.0L417.5 170.1L420.0 168.9L425.7 165.5L432.4 164.4L441.1 163.8L446.2 166.5L448.6 170.2L452.5 169.6L458.4 172.7L461.7 173.3L470.0 172.7L474.9 172.4L482.1 167.2L482.2 163.0L478.1 155.7L470.0 150.6L465.9 146.1L457.8 140.6L454.7 139.0L450.3 137.2L450.4 135.0L449.5 135.4L442.6 137.8L440.0 139.5L434.9 142.5L432.2 143.5L430.7 141.7L429.8 136.3L424.4 135.0L427.6 130.9L431.4 128.2L426.9 128.2L418.1 126.3L418.4 123.6L413.2 124.1L411.1 128.6L406.4 136.3L400.1 145.4L399.6 148.7L398.9 152.5L395.5 153.9L392.8 160.0L395.2 162.8L396.0 165.3L400.3 169.7ZM518.5 134.5L515.4 140.8L519.2 147.8L519.2 155.8L524.2 163.6L528.6 170.1L532.4 176.0L537.2 177.7L534.1 177.9L531.2 181.4L531.2 186.7L527.8 191.2L527.8 193.8L531.6 201.5L535.0 202.0L539.1 206.0L543.8 207.8L551.7 207.4L559.9 206.0L559.6 202.4L559.0 197.2L557.7 189.2L554.5 185.9L553.6 181.0L552.0 176.8L553.3 171.8L551.1 168.0L550.4 163.4L549.5 157.4L542.2 150.0L536.5 141.7L542.5 141.7L541.3 135.4L549.5 134.5L555.8 135.4L553.9 126.3L554.5 120.8L547.0 120.8L538.1 121.8L531.8 124.5L527.4 129.1L522.3 130.0ZM450.4 135.0L442.7 135.4L440.2 131.8L438.9 128.2L442.1 126.3L451.6 122.2L456.3 119.0L464.8 118.1L467.4 119.0L460.9 122.7L460.2 128.6L455.4 135.0L450.4 137.2Z"/></clipPath><g clip-path="url(#wc)"><path d="M402.9 170.8L406.1 171.2L410.5 171.0L417.5 170.1L420.0 168.9L425.7 165.5L432.4 164.4L441.1 163.8L446.2 166.5L448.6 170.2L452.5 169.6L458.4 172.7L461.7 173.3L470.0 172.7L474.9 172.4L482.1 167.2L482.2 163.0L478.1 155.7L470.0 150.6L465.9 146.1L457.8 140.6L454.7 139.0L450.3 137.2L450.4 135.0L449.5 135.4L442.6 137.8L440.0 139.5L434.9 142.5L432.2 143.5L430.7 141.7L429.8 136.3L424.4 135.0L427.6 130.9L431.4 128.2L426.9 128.2L418.1 126.3L418.4 123.6L413.2 124.1L411.1 128.6L406.4 136.3L400.1 145.4L399.6 148.7L398.9 152.5L395.5 153.9L392.8 160.0L395.2 162.8L396.0 165.3L400.3 169.7ZM518.5 134.5L515.4 140.8L519.2 147.8L519.2 155.8L524.2 163.6L528.6 170.1L532.4 176.0L537.2 177.7L534.1 177.9L531.2 181.4L531.2 186.7L527.8 191.2L527.8 193.8L531.6 201.5L535.0 202.0L539.1 206.0L543.8 207.8L551.7 207.4L559.9 206.0L559.6 202.4L559.0 197.2L557.7 189.2L554.5 185.9L553.6 181.0L552.0 176.8L553.3 171.8L551.1 168.0L550.4 163.4L549.5 157.4L542.2 150.0L536.5 141.7L542.5 141.7L541.3 135.4L549.5 134.5L555.8 135.4L553.9 126.3L554.5 120.8L547.0 120.8L538.1 121.8L531.8 124.5L527.4 129.1L522.3 130.0ZM450.4 135.0L442.7 135.4L440.2 131.8L438.9 128.2L442.1 126.3L451.6 122.2L456.3 119.0L464.8 118.1L467.4 119.0L460.9 122.7L460.2 128.6L455.4 135.0L450.4 137.2Z" fill="none" stroke="#a3a3cf" stroke-width="4.600" stroke-linejoin="round" opacity=".88"/><path d="M402.9 170.8L406.1 171.2L410.5 171.0L417.5 170.1L420.0 168.9L425.7 165.5L432.4 164.4L441.1 163.8L446.2 166.5L448.6 170.2L452.5 169.6L458.4 172.7L461.7 173.3L470.0 172.7L474.9 172.4L482.1 167.2L482.2 163.0L478.1 155.7L470.0 150.6L465.9 146.1L457.8 140.6L454.7 139.0L450.3 137.2L450.4 135.0L449.5 135.4L442.6 137.8L440.0 139.5L434.9 142.5L432.2 143.5L430.7 141.7L429.8 136.3L424.4 135.0L427.6 130.9L431.4 128.2L426.9 128.2L418.1 126.3L418.4 123.6L413.2 124.1L411.1 128.6L406.4 136.3L400.1 145.4L399.6 148.7L398.9 152.5L395.5 153.9L392.8 160.0L395.2 162.8L396.0 165.3L400.3 169.7ZM518.5 134.5L515.4 140.8L519.2 147.8L519.2 155.8L524.2 163.6L528.6 170.1L532.4 176.0L537.2 177.7L534.1 177.9L531.2 181.4L531.2 186.7L527.8 191.2L527.8 193.8L531.6 201.5L535.0 202.0L539.1 206.0L543.8 207.8L551.7 207.4L559.9 206.0L559.6 202.4L559.0 197.2L557.7 189.2L554.5 185.9L553.6 181.0L552.0 176.8L553.3 171.8L551.1 168.0L550.4 163.4L549.5 157.4L542.2 150.0L536.5 141.7L542.5 141.7L541.3 135.4L549.5 134.5L555.8 135.4L553.9 126.3L554.5 120.8L547.0 120.8L538.1 121.8L531.8 124.5L527.4 129.1L522.3 130.0ZM450.4 135.0L442.7 135.4L440.2 131.8L438.9 128.2L442.1 126.3L451.6 122.2L456.3 119.0L464.8 118.1L467.4 119.0L460.9 122.7L460.2 128.6L455.4 135.0L450.4 137.2Z" fill="none" stroke="#aad3df" stroke-width="3.400" stroke-linejoin="round"/></g><path d="M163.1 165.3L167.6 163.8L168.2 165.8L177.4 164.7L179.9 167.6L175.5 172.7L175.8 178.5L174.9 183.4L171.7 183.9L174.9 188.3L174.2 195.6L172.4 203.6M207.9 152.6L214.7 156.5L223.5 157.4L229.8 160.0L239.1 160.6M266.5 148.9L263.3 145.2L262.7 139.4L263.6 133.6L262.1 130.4L263.6 129.7L262.1 125.4L257.6 127.3L257.6 123.6L263.3 115.3L267.1 114.5L266.8 107.7L270.9 101.0L261.7 99.1L259.2 96.5L255.7 95.7L249.7 89.8L245.6 91.3L245.6 88.3L239.3 83.9L235.2 80.6M240.4 77.6L245.9 77.6L250.7 76.6L256.1 79.9L255.1 83.9L257.1 83.9L259.5 88.0L257.6 90.3L260.2 93.3L259.2 96.5M255.7 95.7L255.4 90.3L257.6 90.3M257.1 83.9L256.7 73.3L262.1 72.2L263.8 67.1L263.3 64.0L264.6 58.7M273.7 40.4L281.6 41.5M309.1 51.3L310.1 57.7L308.5 62.4L312.3 70.5L313.5 78.3L312.7 82.7L304.4 84.9L296.8 88.8L298.1 92.3L306.3 103.4L299.6 109.6L301.2 115.3L295.5 114.3L285.4 115.3L279.7 114.8L273.4 113.4L267.1 114.5M279.7 114.8L279.7 119.4L285.1 120.8L285.1 124.1L277.8 125.4L276.0 130.4L272.5 125.0L263.6 129.7M285.1 120.8L288.6 121.8L295.9 119.4L297.4 122.7L305.6 124.3L303.7 127.3L305.0 130.9L305.8 132.7M305.6 124.3L311.3 125.4L320.2 122.7L320.8 121.1L327.4 110.6L326.2 104.9L313.9 101.0L306.3 103.4M312.7 82.7L321.4 84.9L325.2 88.8L330.9 88.3L338.2 96.0L326.2 104.9M338.2 96.0L344.2 99.1L351.8 97.2L361.5 100.3L362.5 95.2L371.3 85.9L368.2 76.3L368.2 70.2L365.7 68.1L370.1 64.0L367.5 50.8L363.1 46.4L344.2 45.4M327.4 110.6L337.9 112.4L345.4 108.7L359.0 106.8L361.5 100.3M363.1 46.4L362.5 39.9L353.7 36.6M367.5 50.8L380.2 48.6L382.1 40.4L387.1 36.0L387.1 31.8L376.4 23.6L363.8 23.6L352.1 27.4M387.1 31.8L396.9 26.5L394.1 12.7L391.9 10.3L386.5 10.3L378.9 5.0L372.9 6.5M391.9 10.3L394.1 6.8L392.8 1.4L392.2 -7.1M396.9 26.5L414.3 32.7L413.7 41.5L425.7 56.1L417.5 58.7L420.0 70.2L412.1 78.3L403.6 77.3L390.9 75.3L377.0 72.2L368.2 76.3M420.0 70.2L433.9 68.1L444.0 87.3L459.1 92.3L472.4 95.2L469.9 110.6L460.4 119.0M359.0 106.8L363.8 111.0L376.4 112.9L387.1 108.2L392.8 106.3L402.9 111.0L408.3 121.8L409.2 125.4L402.0 129.1L397.2 133.9L396.6 123.6L389.7 111.5L387.1 108.2M397.2 133.9L406.1 134.5M363.8 111.0L353.0 125.4L347.0 127.7L337.9 130.0L328.4 129.5L322.1 124.5L320.8 121.1M347.0 127.7L354.3 136.3L354.3 139.9L361.2 140.8L362.5 145.2L364.4 148.7L379.6 150.0L389.7 145.6L399.8 149.1M362.5 145.2L360.6 155.7L360.3 161.7L364.1 169.7L373.9 168.0L384.0 169.7L385.6 166.8L390.9 163.4L396.0 164.2M385.6 166.8L387.1 170.1L383.7 174.8M345.4 183.4L349.5 180.1L351.8 173.9L364.1 169.7M341.5 165.5L345.8 159.5L348.6 162.5L349.2 165.5L348.6 170.1L351.8 173.9M348.6 162.5L354.9 162.1L360.3 161.7M345.8 159.5L347.3 157.0L349.2 153.9L356.5 158.2L354.9 162.1M335.6 160.0L337.2 153.9L340.4 151.3L347.3 157.0M318.6 136.3L325.9 135.9L339.1 139.4L341.3 139.0L342.9 147.0L340.4 151.3L336.0 159.5L330.3 156.5L321.4 147.0L318.6 139.9L318.6 136.3M339.1 139.4L339.8 133.6L337.9 130.0M305.0 133.8L311.3 132.7L315.8 134.1L318.3 130.4L322.1 124.5M446.2 213.6L449.0 211.5L450.6 206.8L459.1 206.4L468.6 207.6L478.1 204.4L486.6 204.0L490.7 202.4L498.9 205.2L502.1 203.6L499.6 194.8L497.0 185.9L502.1 183.4L494.8 180.1L493.9 171.8L487.6 168.9L481.6 168.3M471.8 152.2L484.4 153.9L495.8 159.1L503.4 158.2L512.5 165.1L521.1 171.0L526.1 165.5M493.9 171.8L503.4 170.6L514.1 170.1L512.5 165.1M503.4 170.6L507.2 174.3L509.7 179.3L512.8 185.1L512.8 190.0L510.3 190.4L502.1 183.4M512.8 190.0L522.3 183.4L524.5 186.3L522.3 190.8L527.8 193.8M502.1 203.6L505.9 213.1L510.9 220.0L505.9 228.5L510.3 236.1L521.1 245.0L520.4 251.0L525.8 258.7M486.6 204.0L479.4 209.1L480.0 216.2L478.1 225.4L464.2 233.3L466.7 242.4L474.3 244.3L484.4 250.2L501.5 264.1L512.8 264.8L518.5 265.5L520.4 268.8L524.8 268.8M513.2 264.8L516.6 258.3L522.0 258.3M464.2 233.3L451.6 241.3L444.9 238.3M446.2 223.5L450.3 227.0L445.6 233.0L444.3 234.2L443.7 240.6L443.4 247.3L440.2 261.6M440.8 235.3L444.3 234.2M435.5 248.7L439.6 261.9M466.7 242.4L452.8 247.3L459.1 254.6L456.0 258.3L446.5 264.1L439.9 263.0M378.0 246.5L376.1 254.6L377.0 264.1L377.0 286.9M292.1 234.8L291.7 240.6L284.2 245.0L283.5 251.7L279.4 256.8L281.3 269.1L281.6 283.4M273.6 205.7L271.5 213.1L271.2 223.5L266.5 229.6L276.3 242.8L279.4 256.8M205.2 220.2L208.0 224.7L208.4 233.8L211.2 241.3L200.8 243.2L195.7 250.2L187.5 258.3L174.9 261.6L164.3 267.7L164.3 275.2L135.9 275.2M559.6 202.6L565.3 202.0L572.9 196.4L581.1 195.6L588.0 200.4L593.7 201.2L600.3 208.0L605.4 208.4L605.7 216.2L601.9 226.2L603.8 232.3L601.6 238.3L603.5 247.3L609.2 248.4L609.5 252.1L603.6 259.3L610.1 269.1L615.8 270.9L615.8 278.4L619.0 282.7M605.7 216.2L612.6 219.3L617.7 214.2L626.5 211.1L633.5 201.6L639.5 202.4L647.4 203.6L648.7 205.6L656.9 204.4L662.2 200.8L663.2 194.0L669.5 194.8L671.4 207.6L682.1 201.6L692.2 203.2M603.6 259.3L613.9 262.6L624.0 262.6L637.6 259.4L638.5 251.7L647.4 248.0L656.9 244.3L663.2 233.8L660.7 228.5L668.2 228.1L671.7 217.7L668.9 212.7L677.1 206.8L692.2 203.2L699.2 213.1L710.6 216.9M686.6 223.1L689.7 237.9L694.8 242.8L690.3 250.2L685.9 258.3L679.6 265.5L673.3 273.1L663.8 272.7L661.9 282.7M639.5 202.4L636.0 197.6L624.7 189.6L613.3 181.0L610.1 170.6L598.8 168.9L598.1 162.5L588.6 158.7L580.4 164.2L578.9 165.5L579.2 170.1L572.7 170.0M550.4 166.4L560.8 161.7L569.4 170.4L572.7 170.0L572.7 138.1L589.0 133.2L605.1 144.8L629.1 149.6L636.7 155.7L636.0 164.2L639.2 165.1L649.3 172.7L655.0 169.7L667.0 162.1L668.9 157.4L683.4 160.4L684.0 155.2L697.3 157.0L719.4 157.4L725.7 162.5M667.0 162.1L671.4 168.5L664.4 169.3L680.9 174.3L672.0 179.7L664.4 179.3L663.8 181.8L684.0 185.5L685.3 192.4L692.2 193.6L692.2 203.2M647.4 203.6L650.6 195.6L647.4 185.1L656.9 179.3L664.4 173.1L655.0 169.7M529.9 125.9L525.5 123.6L528.6 122.2L516.0 112.4L512.8 106.8L516.0 99.1L514.7 97.6L519.2 86.9L526.7 91.8L527.4 85.4L539.7 74.3L556.4 76.3L563.4 81.4L571.0 85.9L589.3 80.9L595.0 85.9L607.6 83.4L598.1 71.7L604.4 61.4L604.4 50.8L629.1 45.9L649.9 39.9L655.0 35.5L666.7 36.0L668.9 49.1L685.0 49.7L689.1 55.6L702.4 47.0L711.2 57.7L725.1 83.4M173.3 38.8L171.4 42.1L167.6 45.4L173.0 48.6L177.1 49.7L179.6 49.1M199.8 39.6L206.5 30.8M431.4 128.2L438.9 128.2" fill="none" stroke="#c7a9cf" stroke-width=".75" stroke-linejoin="round" opacity=".9"/><path d="M529.3 30.4L528.0 37.1L524.8 47.0L530.5 55.6L535.6 58.7L525.5 59.8L519.2 71.2L509.7 76.3L506.5 91.3L500.8 103.4L508.4 110.6L516.0 118.1L522.3 125.9L525.5 130.9M411.8 79.4L412.1 86.9L418.1 93.3L426.9 99.1L434.5 103.4L440.5 106.3L440.8 112.0L433.9 116.2L430.1 119.9L425.0 123.1M462.9 0.2L461.0 3.8L462.9 -2.2M485.0 114.3L489.5 110.6L492.6 105.8" fill="none" stroke="#bddbe6" stroke-width=".8" stroke-linejoin="round" stroke-linecap="round" opacity=".85"/><path d="M528.6 33.8L526.1 43.7M428.8 99.6L425.0 97.6M439.6 115.3L432.0 118.1" fill="none" stroke="#aad3df" stroke-width="1.900" stroke-linecap="round"/><path d="M0 30.500H694.500M0 172.800H694.500" stroke="#fff" stroke-width=".6" opacity=".35" fill="none"/><g fill="#8a8a8a" stroke="#555" stroke-width=".5"><circle cx="218.7" cy="76.2" r="1.250"/><circle cx="282.5" cy="55.3" r="1.250"/><circle cx="304.1" cy="65.5" r="1.250"/><circle cx="411.8" cy="87.0" r="1.250"/><circle cx="455.9" cy="30.7" r="1.250"/><circle cx="401.0" cy="120.0" r="1.250"/><circle cx="670.3" cy="79.8" r="1.250"/><circle cx="175.6" cy="228.7" r="1.250"/><circle cx="283.6" cy="207.0" r="1.250"/><circle cx="499.5" cy="179.5" r="1.250"/><circle cx="542.0" cy="214.5" r="1.250"/><circle cx="587.7" cy="198.0" r="1.250"/><circle cx="655.9" cy="225.5" r="1.250"/><circle cx="447.0" cy="232.5" r="1.250"/><circle cx="415.5" cy="259.0" r="1.250"/><circle cx="239.0" cy="207.3" r="1.250"/><circle cx="302.2" cy="237.5" r="1.250"/><circle cx="679.0" cy="228.5" r="1.250"/><circle cx="521.0" cy="265.0" r="1.250"/><circle cx="383.8" cy="143.2" r="1.250"/></g><g font-family="Liberation Sans, sans-serif" text-anchor="middle" stroke="#fff" stroke-opacity=".7" stroke-width="1" paint-order="stroke" stroke-linejoin="round"><text x="194.3" y="38.3" fill="#8f6f9c" font-size="6.700">United Kingdom</text><text x="205.6" y="47.0" fill="#333" font-size="6.200" font-style="italic">Great Britain</text><text x="167.7" y="59.7" fill="#8f6f9c" font-size="6.700">Éire / Ireland</text><text x="218.0" y="73.3" fill="#2e2e2e" font-size="6.400">London</text><text x="254.3" y="71.5" fill="#8f6f9c" font-size="6.700">Nederland</text><text x="277.4" y="28.5" fill="#8f6f9c" font-size="6.700">Danmark</text><text x="282.5" y="53.2" fill="#2e2e2e" font-size="6.400">Hamburg</text><text x="303.7" y="62.7" fill="#2e2e2e" font-size="6.400">Berlin</text><text x="286.0" y="82.2" fill="#8f6f9c" font-size="6.700">Deutschland</text><text x="340.3" y="73.5" fill="#8f6f9c" font-size="6.700">Polska</text><text x="371.7" y="21.4" fill="#8f6f9c" font-size="6.700">Latvija</text><text x="371.7" y="39.9" fill="#8f6f9c" font-size="6.700">Lietuva</text><text x="395.9" y="56.0" fill="#8f6f9c" font-size="6.700">Беларусь</text><text x="411.8" y="94.7" fill="#2e2e2e" font-size="6.400">Київ</text><text x="455.9" y="39.3" fill="#2e2e2e" font-size="6.400">Москва</text><text x="433.9" y="110.5" fill="#8f6f9c" font-size="6.700">Україна</text><text x="400.8" y="117.1" fill="#2e2e2e" font-size="6.400">Chișinău</text><text x="637.3" y="113.7" fill="#8f6f9c" font-size="6.700">Қазақстан</text><text x="670.3" y="77.0" fill="#2e2e2e" font-size="6.400">Астана</text><text x="387.0" y="151.7" fill="#2e2e2e" font-size="6.400">București</text><text x="380.0" y="161.1" fill="#8f6f9c" font-size="6.700">България</text><text x="407.5" y="171.2" fill="#2e2e2e" font-size="6.400">Istanbul</text><text x="391.5" y="192.4" fill="#2e2e2e" font-size="6.400">İzmir</text><text x="414.5" y="203.7" fill="#2e2e2e" font-size="6.400">Antalya</text><text x="442.1" y="191.0" fill="#8f6f9c" font-size="6.700">Türkiye</text><text x="492.5" y="165.7" fill="#8f6f9c" font-size="6.700">საქართველო</text><text x="484.5" y="181.7" fill="#2e2e2e" font-size="6.400">Երևան</text><text x="525.5" y="181.7" fill="#8f6f9c" font-size="6.700">Azərbaycan</text><text x="513.3" y="194.2" fill="#2e2e2e" font-size="6.400">تبریز</text><text x="540.9" y="211.2" fill="#2e2e2e" font-size="6.400">تهران</text><text x="590.0" y="192.4" fill="#8f6f9c" font-size="6.700">Türkmenistan</text><text x="587.7" y="206.2" fill="#2e2e2e" font-size="6.400">Aşgabat</text><text x="618.9" y="171.7" fill="#8f6f9c" font-size="6.700">Oʻzbekiston</text><text x="666.5" y="192.4" fill="#8f6f9c" font-size="6.700">Тоҷикистон</text><text x="685.5" y="172.7" fill="#8f6f9c" font-size="6.700">Кыргызстан</text><text x="686.5" y="158.7" fill="#2e2e2e" font-size="6.400">Бишкек</text><text x="624.9" y="231.4" fill="#8f6f9c" font-size="6.700">افغانستان</text><text x="655.5" y="236.2" fill="#2e2e2e" font-size="6.400">کابل</text><text x="678.5" y="225.7" fill="#2e2e2e" font-size="6.400">اسلام آباد</text><text x="687.5" y="240.1" fill="#2e2e2e" font-size="6.400">لاهور</text><text x="661.5" y="260.2" fill="#8f6f9c" font-size="6.700">پاکستان</text><text x="560.1" y="244.7" fill="#8f6f9c" font-size="6.700">ایران</text><text x="533.1" y="240.1" fill="#2e2e2e" font-size="6.400">اصفهان</text><text x="552.3" y="259.7" fill="#2e2e2e" font-size="6.400">شیراز</text><text x="520.2" y="250.7" fill="#2e2e2e" font-size="6.400">البصرة</text><text x="520.2" y="272.7" fill="#2e2e2e" font-size="6.400">مدينة الكويت</text><text x="488.1" y="219.9" fill="#2e2e2e" font-size="6.400">الموصل</text><text x="485.8" y="236.9" fill="#8f6f9c" font-size="6.700">العراق</text><text x="461.5" y="225.4" fill="#8f6f9c" font-size="6.700">سوريا</text><text x="446.7" y="241.5" fill="#2e2e2e" font-size="6.400">دمشق</text><text x="449.0" y="250.7" fill="#8f6f9c" font-size="6.700">الأردن</text><text x="415.5" y="254.9" fill="#2e2e2e" font-size="6.400">القاهرة</text><text x="232.9" y="167.7" fill="#2e2e2e" font-size="6.400">Barcelona</text><text x="198.9" y="184.9" fill="#8f6f9c" font-size="6.700">España</text><text x="166.3" y="188.1" fill="#8f6f9c" font-size="6.700">Portugal</text><text x="175.6" y="210.5" fill="#2e2e2e" font-size="6.400">Rabat</text><text x="175.6" y="217.7" fill="#2e2e2e" font-size="6.400">ⵔⴱⴰⵟ</text><text x="175.6" y="225.3" fill="#2e2e2e" font-size="6.400">الرباط</text><text x="238.5" y="215.1" fill="#2e2e2e" font-size="6.400">Alger</text><text x="238.5" y="222.2" fill="#2e2e2e" font-size="6.400">ⴷⵣⴰⵢⴻⵔ</text><text x="238.5" y="229.7" fill="#2e2e2e" font-size="6.400">الجزائر</text><text x="283.5" y="204.7" fill="#2e2e2e" font-size="6.400">تونس</text><text x="278.0" y="232.7" fill="#8f6f9c" font-size="6.700">تونس</text><text x="302.2" y="234.7" fill="#2e2e2e" font-size="6.400">طرابلس</text><text x="156.1" y="265.4" fill="#8f6f9c" font-size="6.700">Maroc ⵍⵎⵖⵔⵉⴱ</text><text x="154.5" y="274.7" fill="#8f6f9c" font-size="6.700">المغرب</text><text x="222.2" y="271.0" fill="#8f6f9c" font-size="6.700">Algérie ⴷⵣⴰⵢⴻⵔ</text><text x="309.5" y="169.7" fill="#8f6f9c" font-size="6.700">Italia</text><text x="231.5" y="123.3" fill="#8f6f9c" font-size="6.700">France</text><text x="358.0" y="193.2" fill="#8f6f9c" font-size="6.700">Ελλάς</text></g></svg><!--/MAP--><!--OVER--><svg width="0" height="0" class="abs"><defs><linearGradient id="pg" x1="0" y1="0" x2="0" y2="1"><stop offset="0" stop-color="#2e86d3"/><stop offset="1" stop-color="#2f72a8"/></linearGradient></defs></svg><div class="cl" style="left:198.8px;top:52.9px"><i>20</i></div><div class="cl" style="left:273.8px;top:71.6px"><i>22</i></div><div class="cl" style="left:222.9px;top:92.1px"><i>16</i></div><div class="cl" style="left:386.5px;top:164.5px"><i>4</i></div><svg class="pin" preserveAspectRatio="none" style="left:242.9px;top:44.8px" viewBox="0 0 28 44"><path d="M14 1C6.800 1 1.500 6.500 1.500 13.500c0 4.200 2 7.800 4.500 12.200C9 31 12.500 36.500 14 43c1.500-6.500 5-12 8-17.300 2.500-4.400 4.500-8 4.500-12.200C26.500 6.500 21.200 1 14 1z" fill="url(#pg)" stroke="#2f6f9f" stroke-width="1"/><circle cx="14" cy="13.500" r="4.600" fill="#fff"/></svg><svg class="pin" preserveAspectRatio="none" style="left:528.6px;top:36.2px" viewBox="0 0 28 44"><path d="M14 1C6.800 1 1.500 6.500 1.500 13.500c0 4.200 2 7.800 4.500 12.200C9 31 12.500 36.500 14 43c1.500-6.500 5-12 8-17.300 2.500-4.400 4.500-8 4.500-12.200C26.500 6.500 21.200 1 14 1z" fill="url(#pg)" stroke="#2f6f9f" stroke-width="1"/><circle cx="14" cy="13.500" r="4.600" fill="#fff"/></svg><svg class="pin" preserveAspectRatio="none" style="left:303.1px;top:152.1px" viewBox="0 0 28 44"><path d="M14 1C6.800 1 1.500 6.500 1.500 13.500c0 4.200 2 7.800 4.500 12.200C9 31 12.500 36.500 14 43c1.500-6.500 5-12 8-17.300 2.500-4.400 4.500-8 4.500-12.200C26.500 6.500 21.200 1 14 1z" fill="url(#pg)" stroke="#2f6f9f" stroke-width="1"/><circle cx="14" cy="13.500" r="4.600" fill="#fff"/></svg><svg class="pin" preserveAspectRatio="none" style="left:648.4px;top:202.5px" viewBox="0 0 28 44"><path d="M14 1C6.800 1 1.500 6.500 1.500 13.500c0 4.200 2 7.800 4.500 12.200C9 31 12.500 36.500 14 43c1.500-6.500 5-12 8-17.300 2.500-4.400 4.500-8 4.500-12.200C26.500 6.500 21.200 1 14 1z" fill="url(#pg)" stroke="#2f6f9f" stroke-width="1"/><circle cx="14" cy="13.500" r="4.600" fill="#fff"/></svg><svg class="pin" preserveAspectRatio="none" style="left:653.7px;top:235.6px" viewBox="0 0 28 44"><path d="M14 1C6.800 1 1.500 6.500 1.500 13.500c0 4.200 2 7.800 4.500 12.200C9 31 12.500 36.500 14 43c1.500-6.500 5-12 8-17.300 2.500-4.400 4.500-8 4.500-12.200C26.500 6.500 21.200 1 14 1z" fill="url(#pg)" stroke="#2f6f9f" stroke-width="1"/><circle cx="14" cy="13.500" r="4.600" fill="#fff"/></svg><div id="hl2"></div><div id="popup">
<div style="left:6px;top:8px;font-size:8.7px;line-height:11px;-webkit-text-stroke:.4px #fff;letter-spacing:-0.02px">Returning visitor</div>
<div style="left:73px;top:8.500px;font-size:6.7px;line-height:9px;font-weight:bold;color:#e6e6e6">&middot; Visited 2 Pages</div>
<div style="left:127px;top:2.500px;font-size:9px;line-height:10px;color:#8a8a8a">&times;</div>
<svg style="left:8.700px;top:23.700px" width="7.600" height="7.600" viewBox="0 0 20 20"><defs><clipPath id="fc"><circle cx="10" cy="10" r="10"/></clipPath></defs><g clip-path="url(#fc)"><rect width="7" height="20" fill="#1f9a48"/><rect x="7" width="6.500" height="20" fill="#f4f4f4"/><rect x="13.500" width="7" height="20" fill="#d7283a"/></g></svg>
<div style="left:19.300px;top:23px;font-size:6.9px;line-height:9px;-webkit-text-stroke:.25px #fff">Italy</div>
<div style="left:51px;top:23px;font-size:7px;line-height:9px;-webkit-text-stroke:.25px #fff">10/31/2025, 4:48 PM</div>
<svg style="left:8.500px;top:37.500px" width="9" height="9" viewBox="0 0 24 24" fill="none" stroke="#e8e8e8" stroke-width="2.200" stroke-linejoin="round"><rect x="2.500" y="4" width="19" height="13" rx="2"/><path d="M8 21h8M12 17v4" stroke-linecap="round"/></svg>
<div style="left:19.300px;top:37.500px;font-size:7px;line-height:9px;-webkit-text-stroke:.3px #fff">Desktop</div>
<svg style="left:52.800px;top:38px" width="8.400" height="8.400" viewBox="0 0 20 20"><rect x="0" y="0" width="9.300" height="9.300" fill="#f25022"/><rect x="10.700" y="0" width="9.300" height="9.300" fill="#7fba00"/><rect x="0" y="10.700" width="9.300" height="9.300" fill="#00a4ef"/><rect x="10.700" y="10.700" width="9.300" height="9.300" fill="#ffb900"/></svg>
<div style="left:63.800px;top:37.500px;font-size:7px;line-height:9px;-webkit-text-stroke:.3px #fff">Windows</div>
<svg style="left:100.800px;top:37.700px" width="8.800" height="8.800" viewBox="0 0 20 20"><circle cx="10" cy="10" r="9.500" fill="#1b74c9"/><path d="M1 11C1.500 5 5.500 1.500 10.500 1.500c5 0 8.500 3.500 8.500 7.500 0 2.500-2 4-4 4-1.500 0-2.500-.5-2.500-1.300 0-.8.700-1 .700-2.200C13.200 8 11.800 6.500 9.500 6.500 6 6.500 3.500 9 3.500 12.500z" fill="#35c1f1"/><path d="M3.500 12.500c0 4 3 6.500 6.500 6.500 2.500 0 4.500-1 5.500-2-2 .8-5 .3-6.500-1.800-1.200-1.700-1-3.700-.2-4.700-2-.5-4.500.5-5.300 2z" fill="#7ddc6f" opacity=".9"/></svg>
<div style="left:111.700px;top:37.500px;font-size:7px;line-height:9px;-webkit-text-stroke:.3px #fff">Edge</div>
<div style="left:12.700px;top:49.300px;width:110px;height:13.500px;border:1px solid #e8813a;background:#232323;border-radius:1px"></div>
<div style="left:12.700px;top:51.500px;width:110px;text-align:center;font-size:7.05px;line-height:9px;-webkit-text-stroke:.25px #fff">Accuracy of Visitor Pin(s) <span style="font-size:9px;line-height:0;position:relative;top:.3px">&rarr;</span></div>
</div>
<svg class="abs" style="left:307px;top:153px" width="9" height="5" viewBox="0 0 9 5"><path d="M0 0h9L4.500 5z" fill="#1b1b1b"/></svg>
<div id="zoomctl"><div style="top:0;border-bottom:1px solid #ccc">+</div><div style="top:16.500px">&minus;</div></div>
<div id="attr"><svg class="abs" style="left:2.500px;top:2.200px" width="7" height="4.700" viewBox="0 0 12 8"><rect width="12" height="4" fill="#4c7be1"/><rect y="4" width="12" height="4" fill="#ffd500"/></svg><span>Leaflet</span> | &copy; <span>OpenStreetMap</span> contributors</div>
<!--/OVER--></div>
</body>
</html>
